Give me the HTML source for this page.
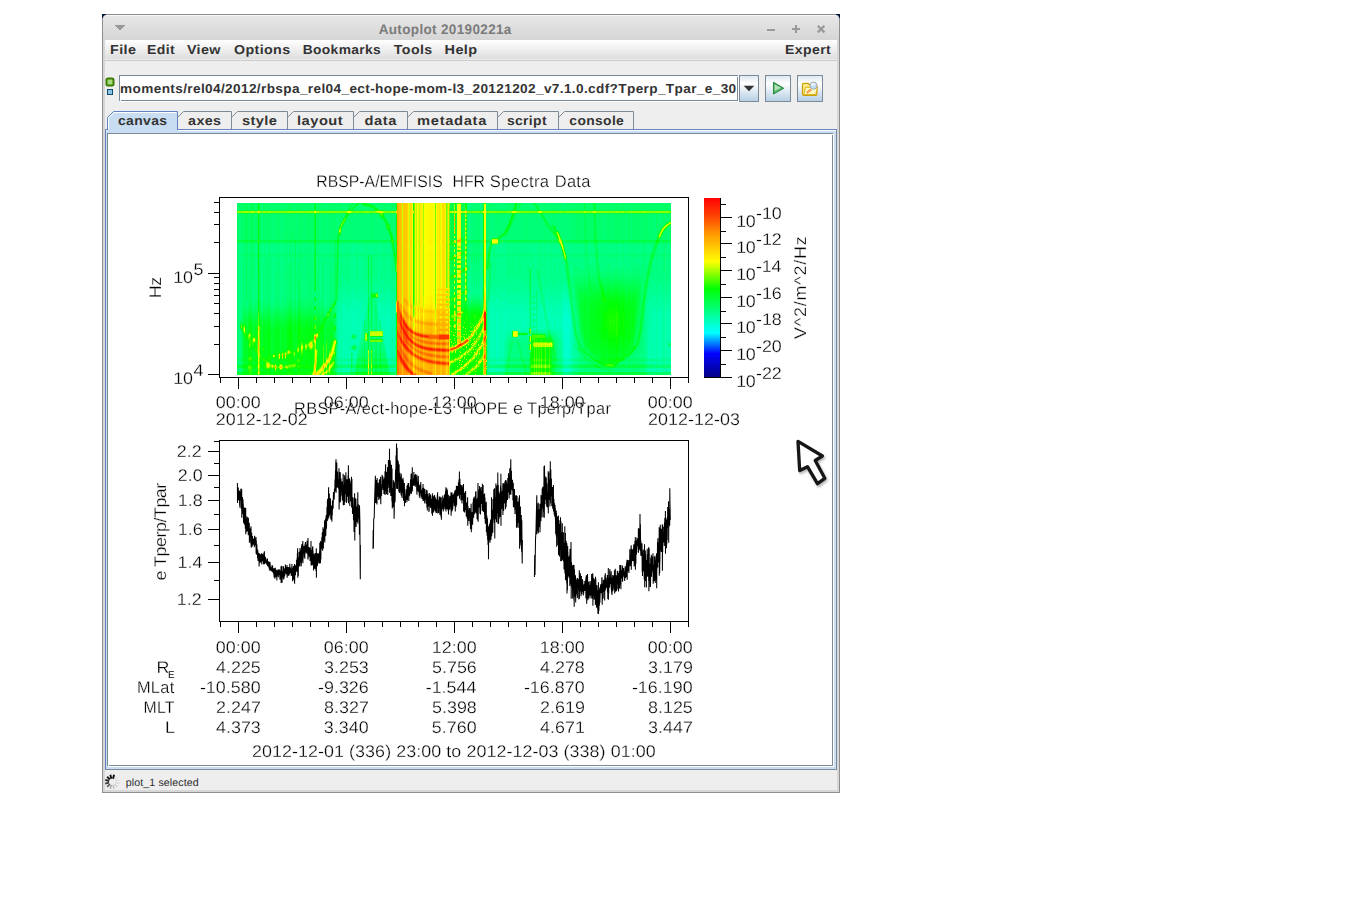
<!DOCTYPE html>
<html><head><meta charset="utf-8"><title>Autoplot</title>
<style>
html,body{margin:0;padding:0;background:#fff;}
body{width:1345px;height:916px;overflow:hidden;position:relative;}
svg{position:absolute;left:0;top:0;display:block;}
text{font-family:"Liberation Sans",sans-serif;white-space:pre;}
.p text{stroke:#fff;stroke-width:0.26px;}
</style></head>
<body>
<svg width="1345" height="916" viewBox="0 0 1345 916" shape-rendering="crispEdges" text-rendering="geometricPrecision">
<rect x="102" y="14" width="738" height="779" fill="#8e8e8e"/>
<defs><linearGradient id="gt" x1="0" y1="0" x2="0" y2="1"><stop offset="0" stop-color="#ffffff"/><stop offset="0.06" stop-color="#e7e7e7"/><stop offset="1" stop-color="#d5d5d5"/></linearGradient><linearGradient id="gm" x1="0" y1="0" x2="0" y2="1"><stop offset="0" stop-color="#ffffff"/><stop offset="1" stop-color="#dedede"/></linearGradient><linearGradient id="gb" x1="0" y1="0" x2="0" y2="1"><stop offset="0" stop-color="#dde8f3"/><stop offset="0.3" stop-color="#ffffff"/><stop offset="1" stop-color="#b8cfe5"/></linearGradient><linearGradient id="cb" x1="0" y1="1" x2="0" y2="0"><stop offset="0" stop-color="#000080"/><stop offset="0.136" stop-color="#0000ff"/><stop offset="0.251" stop-color="#00ffff"/><stop offset="0.497" stop-color="#00ff00"/><stop offset="0.646" stop-color="#ffff00"/><stop offset="0.81" stop-color="#ff9000"/><stop offset="0.9" stop-color="#ff4000"/><stop offset="1" stop-color="#ff0000"/></linearGradient></defs>
<rect x="103" y="15" width="736" height="777" fill="#d7d7d7"/>
<rect x="103" y="15" width="736" height="25" fill="url(#gt)"/>
<rect x="102" y="14" width="4" height="1" fill="#001a3a"/>
<rect x="102" y="15" width="2" height="1" fill="#001a3a"/>
<rect x="102" y="16" width="1" height="2" fill="#001a3a"/>
<rect x="104" y="15" width="1" height="1" fill="#9a9a9a"/>
<rect x="103" y="16" width="1" height="1" fill="#9a9a9a"/>
<rect x="105" y="15" width="1" height="1" fill="#cfcfcf"/>
<rect x="103" y="17" width="1" height="1" fill="#cfcfcf"/>
<rect x="836" y="14" width="4" height="1" fill="#001a3a"/>
<rect x="838" y="15" width="2" height="1" fill="#001a3a"/>
<rect x="839" y="16" width="1" height="2" fill="#001a3a"/>
<rect x="837" y="15" width="1" height="1" fill="#9a9a9a"/>
<rect x="838" y="16" width="1" height="1" fill="#9a9a9a"/>
<rect x="836" y="15" width="1" height="1" fill="#cfcfcf"/>
<rect x="838" y="17" width="1" height="1" fill="#cfcfcf"/>
<text transform="translate(378.66,34) scale(0.979,1)" font-size="13.8" font-weight="bold" fill="#7b7b7b" letter-spacing="0.351">Autoplot 20190221a</text>
<path d="M115 25h10l-5 6z" fill="#999"/>
<rect x="767" y="29" width="8" height="2" fill="#9a9a9a"/>
<rect x="792" y="28" width="8" height="2" fill="#9a9a9a"/>
<rect x="795" y="25" width="2" height="8" fill="#9a9a9a"/>
<path d="M817.8 25.8l6.6 6.6M824.4 25.8l-6.6 6.6" stroke="#9a9a9a" stroke-width="2.3" fill="none" shape-rendering="auto"/>
<rect x="105" y="40" width="732" height="19" fill="url(#gm)"/>
<rect x="105" y="59" width="732" height="1" fill="#ececec"/>
<rect x="105" y="60" width="732" height="1" fill="#cccccc"/>
<rect x="105" y="61" width="732" height="729" fill="#eeeeee"/>
<text transform="translate(110.07,54) scale(1.105,1)" font-size="13" font-weight="bold" fill="#333333" letter-spacing="0.349">File</text>
<text transform="translate(147.09,54) scale(1.078,1)" font-size="13" font-weight="bold" fill="#333333" letter-spacing="0.351">Edit</text>
<text transform="translate(186.93,54) scale(1.101,1)" font-size="13" font-weight="bold" fill="#333333" letter-spacing="0.349">View</text>
<text transform="translate(233.93,54) scale(1.097,1)" font-size="13" font-weight="bold" fill="#333333" letter-spacing="0.350">Options</text>
<text transform="translate(302.70,54) scale(1.061,1)" font-size="13" font-weight="bold" fill="#333333" letter-spacing="0.347">Bookmarks</text>
<text transform="translate(393.86,54) scale(1.089,1)" font-size="13" font-weight="bold" fill="#333333" letter-spacing="0.354">Tools</text>
<text transform="translate(444.56,54) scale(1.114,1)" font-size="13" font-weight="bold" fill="#333333" letter-spacing="0.349">Help</text>
<text transform="translate(785.09,54) scale(1.08,1)" font-size="13" font-weight="bold" fill="#333333" letter-spacing="0.350">Expert</text>
<rect x="106.5" y="78.5" width="7" height="7" rx="1.5" fill="#a4dc7c" stroke="#3c7c00" stroke-width="2" shape-rendering="auto"/>
<rect x="107" y="89" width="6" height="6" fill="#0b4c70"/>
<rect x="108" y="90" width="4" height="4" fill="#8cc4e4"/>
<rect x="119" y="75" width="620" height="27" fill="#ffffff"/>
<rect x="119" y="75" width="619" height="1" fill="#7a8a99"/>
<rect x="119" y="75" width="1" height="26" fill="#7a8a99"/>
<rect x="119" y="100" width="619" height="1" fill="#7a8a99"/>
<rect x="737" y="75" width="1" height="26" fill="#7a8a99"/>
<rect x="120" y="100" width="1" height="1" fill="#fff"/>
<rect x="737" y="76" width="1" height="1" fill="#fff"/>
<rect x="738" y="75" width="1" height="1" fill="#eee"/>
<rect x="119" y="101" width="1" height="1" fill="#eee"/>
<text transform="translate(120.12,93) scale(1.047,1)" font-size="13" font-weight="bold" fill="#333333" letter-spacing="0.350">moments/rel04/2012/rbspa_rel04_ect-hope-mom-l3_20121202_v7.1.0.cdf?Tperp_Tpar_e_30</text>
<rect x="739" y="75" width="20" height="27" fill="#7a8a99"/>
<rect x="740" y="76" width="18" height="25" fill="url(#gb)"/>
<rect x="765" y="75" width="26" height="27" fill="#7a8a99"/>
<rect x="766" y="76" width="24" height="25" fill="url(#gb)"/>
<rect x="797" y="75" width="26" height="27" fill="#7a8a99"/>
<rect x="798" y="76" width="24" height="25" fill="url(#gb)"/>
<path d="M743.7 85.7h10.6l-5.3 5.5z" fill="#333" shape-rendering="auto"/>
<path d="M773.6 82.6v11.2l9.8-5.6z" fill="#6cc07a" stroke="#238c40" stroke-width="1.2" stroke-linejoin="round" shape-rendering="auto"/>
<path d="M774.6 84.4v6l6.4-2.6z" fill="#bfe6c4" opacity="0.85" shape-rendering="auto"/>
<g shape-rendering="auto"><path d="M802.5 84.5a1.2 1.2 0 0 1 1.2-1.2h4.6l1.4 1.6h6.2a1 1 0 0 1 1 1v8.4a1 1 0 0 1-1 1h-12.2a1.2 1.2 0 0 1-1.2-1.2z" fill="#ffe98a" stroke="#c9a000" stroke-width="1.2"/><path d="M805.5 87.3h12l-1.8 7.3h-12z" fill="#fff6c0" stroke="#d4aa00" stroke-width="0.9"/><path d="M811 89.6l-4.4 3.4" stroke="#f07c1c" stroke-width="2.2" stroke-dasharray="1.3 0.5"/><circle cx="813.5" cy="85.6" r="3.6" fill="#bcdcfa" stroke="#a8a8a8" stroke-width="1"/><ellipse cx="813.2" cy="84.4" rx="2.2" ry="1.3" fill="#eaf4ff"/></g>
<rect x="105" y="129" width="732" height="641" fill="#c8ddf2"/>
<rect x="105" y="129" width="732" height="1" fill="#6382bf"/>
<rect x="105" y="129" width="1" height="641" fill="#6382bf"/>
<rect x="106" y="130" width="730" height="1" fill="#ffffff"/>
<rect x="106" y="769" width="731" height="1" fill="#7a8a99"/>
<rect x="836" y="130" width="1" height="640" fill="#7a8a99"/>
<rect x="108" y="134" width="724" height="631" fill="#ffffff"/>
<rect x="107" y="133" width="726" height="1" fill="#7a8a99"/>
<rect x="107" y="133" width="1" height="633" fill="#7a8a99"/>
<rect x="107" y="765" width="726" height="1" fill="#7a8a99"/>
<rect x="832" y="133" width="1" height="633" fill="#7a8a99"/>
<rect x="108" y="766" width="726" height="1" fill="#ffffff"/>
<rect x="833" y="134" width="1" height="633" fill="#ffffff"/>
<rect x="108" y="765" width="1" height="1" fill="#fff"/>
<rect x="832" y="134" width="1" height="1" fill="#fff"/>
<path d="M107.5 130V117.5l6-6H177.5V130z" fill="#c8ddf2" stroke="#6382bf" stroke-width="1" shape-rendering="auto"/>
<path d="M108.5 130V118l5.5-5.5H176.5" fill="none" stroke="#ffffff" stroke-width="1" shape-rendering="auto"/>
<rect x="108" y="129" width="69" height="2" fill="#c8ddf2"/>
<text transform="translate(118.01,125) scale(1.068,1)" font-size="13" font-weight="bold" fill="#333333" letter-spacing="0.351">canvas</text>
<path d="M177.5 117.5l6-6H231.5V129" fill="none" stroke="#7a8a99" stroke-width="1" shape-rendering="auto"/>
<text transform="translate(188.07,125) scale(1.101,1)" font-size="13" font-weight="bold" fill="#333333" letter-spacing="0.350">axes</text>
<path d="M231.5 117.5l6-6H287.5V129" fill="none" stroke="#7a8a99" stroke-width="1" shape-rendering="auto"/>
<text transform="translate(241.99,125) scale(1.126,1)" font-size="13" font-weight="bold" fill="#333333" letter-spacing="0.350">style</text>
<path d="M287.5 117.5l6-6H353.5V129" fill="none" stroke="#7a8a99" stroke-width="1" shape-rendering="auto"/>
<text transform="translate(296.97,125) scale(1.13,1)" font-size="13" font-weight="bold" fill="#333333" letter-spacing="0.440">layout</text>
<path d="M353.5 117.5l6-6H407.5V129" fill="none" stroke="#7a8a99" stroke-width="1" shape-rendering="auto"/>
<text transform="translate(364.41,125) scale(1.13,1)" font-size="13" font-weight="bold" fill="#333333" letter-spacing="0.517">data</text>
<path d="M407.5 117.5l6-6H497.5V129" fill="none" stroke="#7a8a99" stroke-width="1" shape-rendering="auto"/>
<text transform="translate(417.05,125) scale(1.13,1)" font-size="13" font-weight="bold" fill="#333333" letter-spacing="0.609">metadata</text>
<path d="M497.5 117.5l6-6H558.5V129" fill="none" stroke="#7a8a99" stroke-width="1" shape-rendering="auto"/>
<text transform="translate(506.91,125) scale(1.068,1)" font-size="13" font-weight="bold" fill="#333333" letter-spacing="0.348">script</text>
<path d="M558.5 117.5l6-6H633.5V129" fill="none" stroke="#7a8a99" stroke-width="1" shape-rendering="auto"/>
<text transform="translate(569.32,125) scale(1.064,1)" font-size="13" font-weight="bold" fill="#333333" letter-spacing="0.347">console</text>
<text x="125.71" y="785.7" font-size="10.6" fill="#2a2a2a" letter-spacing="0.124">plot_1 selected</text>
<g shape-rendering="auto" fill="none"><path d="M113.03 778.71L114.06 774.85" stroke="#000" stroke-opacity="0.95" stroke-width="1.9"/><path d="M111.37 778.71L110.34 774.85" stroke="#000" stroke-opacity="0.95" stroke-width="1.9"/><path d="M109.94 779.54L107.11 776.71" stroke="#000" stroke-opacity="0.9" stroke-width="1.9"/><path d="M109.11 780.97L105.25 779.94" stroke="#000" stroke-opacity="0.85" stroke-width="1.9"/><path d="M109.11 782.63L105.25 783.66" stroke="#000" stroke-opacity="0.75" stroke-width="1.9"/><path d="M109.94 784.06L107.11 786.89" stroke="#000" stroke-opacity="0.6" stroke-width="1.9"/><path d="M111.37 784.89L110.34 788.75" stroke="#000" stroke-opacity="0.35" stroke-width="1.2"/><path d="M113.03 784.89L114.06 788.75" stroke="#000" stroke-opacity="0.25" stroke-width="1.2"/><path d="M114.46 784.06L117.29 786.89" stroke="#000" stroke-opacity="0.15" stroke-width="1.2"/><path d="M115.29 782.63L119.15 783.66" stroke="#000" stroke-opacity="0.1" stroke-width="1.2"/><path d="M115.29 780.97L119.15 779.94" stroke="#000" stroke-opacity="0.08" stroke-width="1.2"/><path d="M114.46 779.54L117.29 776.71" stroke="#000" stroke-opacity="0.05" stroke-width="1.2"/></g>
<g class="p" opacity="0.99">
<rect x="219" y="197" width="470" height="1" fill="#000000"/>
<rect x="219" y="377" width="470" height="1" fill="#000000"/>
<rect x="219" y="197" width="1" height="181" fill="#000000"/>
<rect x="688" y="197" width="1" height="181" fill="#000000"/>
<rect x="219" y="440" width="470" height="1" fill="#000000"/>
<rect x="219" y="621" width="470" height="1" fill="#000000"/>
<rect x="219" y="440" width="1" height="182" fill="#000000"/>
<rect x="688" y="440" width="1" height="182" fill="#000000"/>
<rect x="220" y="378" width="1" height="5" fill="#000000"/>
<rect x="238" y="378" width="1" height="11" fill="#000000"/>
<rect x="256" y="378" width="1" height="5" fill="#000000"/>
<rect x="274" y="378" width="1" height="5" fill="#000000"/>
<rect x="292" y="378" width="1" height="5" fill="#000000"/>
<rect x="310" y="378" width="1" height="5" fill="#000000"/>
<rect x="328" y="378" width="1" height="5" fill="#000000"/>
<rect x="346" y="378" width="1" height="11" fill="#000000"/>
<rect x="364" y="378" width="1" height="5" fill="#000000"/>
<rect x="382" y="378" width="1" height="5" fill="#000000"/>
<rect x="400" y="378" width="1" height="5" fill="#000000"/>
<rect x="418" y="378" width="1" height="5" fill="#000000"/>
<rect x="436" y="378" width="1" height="5" fill="#000000"/>
<rect x="454" y="378" width="1" height="11" fill="#000000"/>
<rect x="472" y="378" width="1" height="5" fill="#000000"/>
<rect x="490" y="378" width="1" height="5" fill="#000000"/>
<rect x="508" y="378" width="1" height="5" fill="#000000"/>
<rect x="526" y="378" width="1" height="5" fill="#000000"/>
<rect x="544" y="378" width="1" height="5" fill="#000000"/>
<rect x="562" y="378" width="1" height="11" fill="#000000"/>
<rect x="580" y="378" width="1" height="5" fill="#000000"/>
<rect x="598" y="378" width="1" height="5" fill="#000000"/>
<rect x="616" y="378" width="1" height="5" fill="#000000"/>
<rect x="634" y="378" width="1" height="5" fill="#000000"/>
<rect x="652" y="378" width="1" height="5" fill="#000000"/>
<rect x="670" y="378" width="1" height="11" fill="#000000"/>
<rect x="688" y="378" width="1" height="5" fill="#000000"/>
<rect x="220" y="622" width="1" height="5" fill="#000000"/>
<rect x="238" y="622" width="1" height="11" fill="#000000"/>
<rect x="256" y="622" width="1" height="5" fill="#000000"/>
<rect x="274" y="622" width="1" height="5" fill="#000000"/>
<rect x="292" y="622" width="1" height="5" fill="#000000"/>
<rect x="310" y="622" width="1" height="5" fill="#000000"/>
<rect x="328" y="622" width="1" height="5" fill="#000000"/>
<rect x="346" y="622" width="1" height="11" fill="#000000"/>
<rect x="364" y="622" width="1" height="5" fill="#000000"/>
<rect x="382" y="622" width="1" height="5" fill="#000000"/>
<rect x="400" y="622" width="1" height="5" fill="#000000"/>
<rect x="418" y="622" width="1" height="5" fill="#000000"/>
<rect x="436" y="622" width="1" height="5" fill="#000000"/>
<rect x="454" y="622" width="1" height="11" fill="#000000"/>
<rect x="472" y="622" width="1" height="5" fill="#000000"/>
<rect x="490" y="622" width="1" height="5" fill="#000000"/>
<rect x="508" y="622" width="1" height="5" fill="#000000"/>
<rect x="526" y="622" width="1" height="5" fill="#000000"/>
<rect x="544" y="622" width="1" height="5" fill="#000000"/>
<rect x="562" y="622" width="1" height="11" fill="#000000"/>
<rect x="580" y="622" width="1" height="5" fill="#000000"/>
<rect x="598" y="622" width="1" height="5" fill="#000000"/>
<rect x="616" y="622" width="1" height="5" fill="#000000"/>
<rect x="634" y="622" width="1" height="5" fill="#000000"/>
<rect x="652" y="622" width="1" height="5" fill="#000000"/>
<rect x="670" y="622" width="1" height="11" fill="#000000"/>
<rect x="688" y="622" width="1" height="5" fill="#000000"/>
<rect x="214" y="202" width="5" height="1" fill="#000000"/>
<rect x="214" y="212" width="5" height="1" fill="#000000"/>
<rect x="214" y="224" width="5" height="1" fill="#000000"/>
<rect x="214" y="242" width="5" height="1" fill="#000000"/>
<rect x="208" y="273" width="11" height="1" fill="#000000"/>
<rect x="214" y="277" width="5" height="1" fill="#000000"/>
<rect x="214" y="283" width="5" height="1" fill="#000000"/>
<rect x="214" y="289" width="5" height="1" fill="#000000"/>
<rect x="214" y="295" width="5" height="1" fill="#000000"/>
<rect x="214" y="303" width="5" height="1" fill="#000000"/>
<rect x="214" y="313" width="5" height="1" fill="#000000"/>
<rect x="214" y="326" width="5" height="1" fill="#000000"/>
<rect x="214" y="344" width="5" height="1" fill="#000000"/>
<rect x="208" y="374" width="11" height="1" fill="#000000"/>
<text transform="translate(173.36,283) scale(1.065,1)" font-size="16.8" fill="#000000" letter-spacing="-0.368">10</text>
<text transform="translate(193.58,275) scale(1.065,1)" font-size="16.8" fill="#000000" letter-spacing="0.000">5</text>
<text transform="translate(173.36,384) scale(1.065,1)" font-size="16.8" fill="#000000" letter-spacing="-0.368">10</text>
<text transform="translate(193.54,376) scale(1.065,1)" font-size="16.8" fill="#000000" letter-spacing="0.000">4</text>
<text transform="translate(161.1,298.33) rotate(-90) scale(1.065,1)" font-size="16.8" fill="#000000" letter-spacing="-0.378">Hz</text>
<rect x="214" y="441" width="5" height="1" fill="#000000"/>
<rect x="208" y="451" width="11" height="1" fill="#000000"/>
<rect x="214" y="463" width="5" height="1" fill="#000000"/>
<rect x="208" y="475" width="11" height="1" fill="#000000"/>
<rect x="214" y="487" width="5" height="1" fill="#000000"/>
<rect x="208" y="500" width="11" height="1" fill="#000000"/>
<rect x="214" y="514" width="5" height="1" fill="#000000"/>
<rect x="208" y="529" width="11" height="1" fill="#000000"/>
<rect x="214" y="545" width="5" height="1" fill="#000000"/>
<rect x="208" y="562" width="11" height="1" fill="#000000"/>
<rect x="214" y="580" width="5" height="1" fill="#000000"/>
<rect x="208" y="599" width="11" height="1" fill="#000000"/>
<text transform="translate(176.87,457) scale(1.065,1)" font-size="16.8" fill="#000000" letter-spacing="0.029">2.2</text>
<text transform="translate(177.70,481) scale(1.065,1)" font-size="16.8" fill="#000000" letter-spacing="0.029">2.0</text>
<text transform="translate(177.78,506) scale(1.065,1)" font-size="16.8" fill="#000000" letter-spacing="0.029">1.8</text>
<text transform="translate(177.78,535) scale(1.065,1)" font-size="16.8" fill="#000000" letter-spacing="0.029">1.6</text>
<text transform="translate(177.52,568) scale(1.065,1)" font-size="16.8" fill="#000000" letter-spacing="0.029">1.4</text>
<text transform="translate(176.87,605) scale(1.065,1)" font-size="16.8" fill="#000000" letter-spacing="0.029">1.2</text>
<text transform="translate(166,580.52) rotate(-90) scale(1.065,1)" font-size="16.8" fill="#000000" letter-spacing="-0.441">e Tperp/Tpar</text>
<text transform="translate(316.34,187) scale(0.94,1)" font-size="16.8" fill="#000000" letter-spacing="0.013">RBSP-A/EMFISIS</text>
<text transform="translate(452.44,187) scale(0.94,1)" font-size="16.8" fill="#000000" letter-spacing="0.065">HFR</text>
<text transform="translate(489.85,187) scale(0.988,1)" font-size="16.8" fill="#000000" letter-spacing="0.351">Spectra</text>
<text transform="translate(554.68,187) scale(0.979,1)" font-size="16.8" fill="#000000" letter-spacing="0.351">Data</text>
<text transform="translate(294.09,414) scale(0.971,1)" font-size="16.8" fill="#000000" letter-spacing="0.350">RBSP-A/ect-hope-L3</text>
<text transform="translate(462.34,414) scale(0.94,1)" font-size="16.8" fill="#000000" letter-spacing="0.250">HOPE</text>
<text transform="translate(527.07,414) scale(0.973,1)" font-size="16.8" fill="#000000" letter-spacing="0.349">Tperp/Tpar</text>
<text transform="translate(513.08,414) scale(1.065,1)" font-size="16.8" fill="#000000" letter-spacing="0.000">e</text>
<text transform="translate(215.77,408) scale(1.065,1)" font-size="16.8" fill="#000000" letter-spacing="0.029">00:00</text>
<text transform="translate(323.77,408) scale(1.065,1)" font-size="16.8" fill="#000000" letter-spacing="0.029">06:00</text>
<text transform="translate(431.77,408) scale(1.065,1)" font-size="16.8" fill="#000000" letter-spacing="0.029">12:00</text>
<text transform="translate(539.77,408) scale(1.065,1)" font-size="16.8" fill="#000000" letter-spacing="0.029">18:00</text>
<text transform="translate(647.77,408) scale(1.065,1)" font-size="16.8" fill="#000000" letter-spacing="0.029">00:00</text>
<text transform="translate(215.81,424.5) scale(1.065,1)" font-size="16.8" fill="#000000" letter-spacing="0.061">2012-12-02</text>
<text transform="translate(647.91,424.5) scale(1.065,1)" font-size="16.8" fill="#000000" letter-spacing="0.051">2012-12-03</text>
<text transform="translate(215.87,652.6) scale(1.065,1)" font-size="16.8" fill="#000000" letter-spacing="0.029">00:00</text>
<text transform="translate(323.87,652.6) scale(1.065,1)" font-size="16.8" fill="#000000" letter-spacing="0.029">06:00</text>
<text transform="translate(431.87,652.6) scale(1.065,1)" font-size="16.8" fill="#000000" letter-spacing="0.029">12:00</text>
<text transform="translate(539.87,652.6) scale(1.065,1)" font-size="16.8" fill="#000000" letter-spacing="0.029">18:00</text>
<text transform="translate(647.87,652.6) scale(1.065,1)" font-size="16.8" fill="#000000" letter-spacing="0.029">00:00</text>
<text transform="translate(215.96,672.7) scale(1.065,1)" font-size="16.8" fill="#000000" letter-spacing="0.029">4.225</text>
<text transform="translate(323.96,672.7) scale(1.065,1)" font-size="16.8" fill="#000000" letter-spacing="0.029">3.253</text>
<text transform="translate(431.96,672.7) scale(1.065,1)" font-size="16.8" fill="#000000" letter-spacing="0.029">5.756</text>
<text transform="translate(539.96,672.7) scale(1.065,1)" font-size="16.8" fill="#000000" letter-spacing="0.029">4.278</text>
<text transform="translate(648.05,672.7) scale(1.065,1)" font-size="16.8" fill="#000000" letter-spacing="0.029">3.179</text>
<text transform="translate(199.89,692.8) scale(1.065,1)" font-size="16.8" fill="#000000" letter-spacing="0.029">-10.580</text>
<text transform="translate(317.94,692.8) scale(1.065,1)" font-size="16.8" fill="#000000" letter-spacing="0.029">-9.326</text>
<text transform="translate(425.67,692.8) scale(1.065,1)" font-size="16.8" fill="#000000" letter-spacing="0.029">-1.544</text>
<text transform="translate(523.89,692.8) scale(1.065,1)" font-size="16.8" fill="#000000" letter-spacing="0.029">-16.870</text>
<text transform="translate(631.89,692.8) scale(1.065,1)" font-size="16.8" fill="#000000" letter-spacing="0.029">-16.190</text>
<text transform="translate(216.05,712.9) scale(1.065,1)" font-size="16.8" fill="#000000" letter-spacing="0.029">2.247</text>
<text transform="translate(324.05,712.9) scale(1.065,1)" font-size="16.8" fill="#000000" letter-spacing="0.029">8.327</text>
<text transform="translate(431.96,712.9) scale(1.065,1)" font-size="16.8" fill="#000000" letter-spacing="0.029">5.398</text>
<text transform="translate(540.05,712.9) scale(1.065,1)" font-size="16.8" fill="#000000" letter-spacing="0.029">2.619</text>
<text transform="translate(647.96,712.9) scale(1.065,1)" font-size="16.8" fill="#000000" letter-spacing="0.029">8.125</text>
<text transform="translate(215.96,733) scale(1.065,1)" font-size="16.8" fill="#000000" letter-spacing="0.029">4.373</text>
<text transform="translate(323.87,733) scale(1.065,1)" font-size="16.8" fill="#000000" letter-spacing="0.029">3.340</text>
<text transform="translate(431.87,733) scale(1.065,1)" font-size="16.8" fill="#000000" letter-spacing="0.029">5.760</text>
<text transform="translate(540.05,733) scale(1.065,1)" font-size="16.8" fill="#000000" letter-spacing="0.029">4.671</text>
<text transform="translate(648.05,733) scale(1.065,1)" font-size="16.8" fill="#000000" letter-spacing="0.029">3.447</text>
<text transform="translate(156.47,672.7) scale(1.065,1)" font-size="16.8" fill="#000000" letter-spacing="0.000">R</text>
<text x="168.02" y="678" font-size="9.8" fill="#000000" letter-spacing="0.000" style="stroke:none">E</text>
<text transform="translate(136.89,692.8) scale(0.975,1)" font-size="16.8" fill="#000000" letter-spacing="0.352">MLat</text>
<text transform="translate(143.44,712.9) scale(0.941,1)" font-size="16.8" fill="#000000" letter-spacing="0.345">MLT</text>
<text transform="translate(164.97,733) scale(1.065,1)" font-size="16.8" fill="#000000" letter-spacing="0.000">L</text>
<text transform="translate(251.91,757) scale(1.065,1)" font-size="16.8" fill="#000000" letter-spacing="0.067">2012-12-01 (336) 23:00 to 2012-12-03 (338) 01:00</text>
<rect x="704" y="198" width="16" height="180" fill="url(#cb)"/>
<rect x="720" y="198" width="1" height="180" fill="#000000"/>
<rect x="704" y="377" width="28" height="1" fill="#000000"/>
<rect x="721" y="364" width="5" height="1" fill="#000000"/>
<text transform="translate(736.26,387) scale(1.065,1)" font-size="16.8" fill="#000000" letter-spacing="-0.368">10</text>
<text transform="translate(756.09,379) scale(1.065,1)" font-size="16.8" fill="#000000" letter-spacing="-0.067">-22</text>
<rect x="721" y="350" width="11" height="1" fill="#000000"/>
<rect x="721" y="337" width="5" height="1" fill="#000000"/>
<text transform="translate(736.26,360) scale(1.065,1)" font-size="16.8" fill="#000000" letter-spacing="-0.368">10</text>
<text transform="translate(756.09,352) scale(1.065,1)" font-size="16.8" fill="#000000" letter-spacing="-0.151">-20</text>
<rect x="721" y="323" width="11" height="1" fill="#000000"/>
<rect x="721" y="311" width="5" height="1" fill="#000000"/>
<text transform="translate(736.26,333) scale(1.065,1)" font-size="16.8" fill="#000000" letter-spacing="-0.368">10</text>
<text transform="translate(756.09,325) scale(1.065,1)" font-size="16.8" fill="#000000" letter-spacing="-0.109">-18</text>
<rect x="721" y="297" width="11" height="1" fill="#000000"/>
<rect x="721" y="284" width="5" height="1" fill="#000000"/>
<text transform="translate(736.26,307) scale(1.065,1)" font-size="16.8" fill="#000000" letter-spacing="-0.368">10</text>
<text transform="translate(756.09,299) scale(1.065,1)" font-size="16.8" fill="#000000" letter-spacing="-0.109">-16</text>
<rect x="721" y="270" width="11" height="1" fill="#000000"/>
<rect x="721" y="257" width="5" height="1" fill="#000000"/>
<text transform="translate(736.26,280) scale(1.065,1)" font-size="16.8" fill="#000000" letter-spacing="-0.368">10</text>
<text transform="translate(756.09,272) scale(1.065,1)" font-size="16.8" fill="#000000" letter-spacing="-0.235">-14</text>
<rect x="721" y="243" width="11" height="1" fill="#000000"/>
<rect x="721" y="231" width="5" height="1" fill="#000000"/>
<text transform="translate(736.26,253) scale(1.065,1)" font-size="16.8" fill="#000000" letter-spacing="-0.368">10</text>
<text transform="translate(756.09,245) scale(1.065,1)" font-size="16.8" fill="#000000" letter-spacing="-0.067">-12</text>
<rect x="721" y="217" width="11" height="1" fill="#000000"/>
<rect x="721" y="204" width="5" height="1" fill="#000000"/>
<text transform="translate(736.26,227) scale(1.065,1)" font-size="16.8" fill="#000000" letter-spacing="-0.368">10</text>
<text transform="translate(756.09,219) scale(1.065,1)" font-size="16.8" fill="#000000" letter-spacing="-0.151">-10</text>
<text transform="translate(806.3,338.89) rotate(-90) scale(1.065,1)" font-size="16.8" fill="#000000" letter-spacing="0.774">V^2/m^2/Hz</text>
</g>
<rect x="237" y="203" width="434" height="172" fill="#00ff77"/><g fill="none" stroke-width="1" transform="translate(0.5,0)"><path stroke="#00ffcc" d="M563 314v18m1-22v48m0 4v2m0 5v2m1-65v52m0 4v2m0 4v4m1-62v48m0 4v2m0 4v4m1-61v47m0 4v2m0 4v4m1-57v43m0 4v2m0 5v2m1-57v44m0 4v2m0 4v3"/><path stroke="#00ffbe" d="M352 315v17m0 9v2m3-31v21m0 7v3m0 9v6m5-44v20m3-24v10m19-4v12m4-11v30m2-32v43m104-49v49m0 4v2m0 4v4m4-61v47m0 4v2m0 4v4m1-58v44m0 4v2m0 5v2m7-52v7m1-13v17m17-17v15m3-14v14m9-11v2m0 3v3m15-11v11m3-9v11m5-8v7m1-9v10m3-11v12m1-10v10m1-26v12m0 18v26m0 4v2m0 4v4m1-71v9m0 48v1m0 2v1m0 6v1m0 2v1m1-73v7m0 52v4m1-60v8m0 48v1m0 2v1m1-59v8m0 47v1m0 2v1m1-57v10m0 43v1m0 2v1m0 6v1m0 2v1m1-65v7m0 44v1m0 2v1m0 9v1m1-55v41m0 4v2m0 4v4"/><path stroke="#00ffb0" d="M339 312v46m0 4v2m0 5v2m1-55v42m0 4v2m0 5v2m2-67v54m0 4v2m0 4v4m1-68v54m0 4v2m0 4v4m1-66v52m0 4v2m0 4v4m1-67v53m0 4v2m0 4v4m1-64v50m0 4v2m0 4v4m1-64v50m0 4v2m0 4v4m1-65v51m0 4v2m0 4v4m1-60v34m0 3v9m0 4v2m0 5v2m1-66v31m0 1v9m0 3v9m0 4v2m0 4v4m1-71v33m0 5v6m0 5v2m1-52v15m0 17v2m0 5v2m0 2v1m0 7v1m1-51v32m0 7v4m0 7v8m0 2v3m0 4v3m1-70v32m0 7v4m0 7v8m0 2v3m1-66v14m0 21v1m0 5v1m0 3v1m0 7v1m0 6v1m1-51v26m0 5v5m0 7v4m1-49v40m1-43v43m1-45v42m1-44v15m0 20v5m1-38v33m1-21v11m1-27v13m0 10v5m1-20v12m14-15v11m1-13v19m1-14v15m1-14v20m1-26v16m0 12v3m1-27v33m1-32v37m1-34v37m1-45v17m0 30v5m1-46v49m1-55v15m1-13v56m0 4v2m1-60v54m0 4v2m0 4v3m1-61v48m0 4v2m0 4v4m2-67v53m0 4v2m0 4v4m1-66v52m0 4v2m0 4v4m95-65v51m0 4v2m0 4v4m1-68v54m0 4v2m0 4v4m1-68v54m0 4v2m0 4v4m1-76v13m0 49v1m0 2v1m1-56v52m0 4v2m0 4v4m1-64v50m0 4v2m0 4v4m1-70v56m0 4v2m0 4v4m1-75v14m0 47v1m0 2v1m1-63v15m0 44v1m0 2v1m0 6v1m0 2v1m1-61v47m0 4v2m0 4v3m1-69v57m0 2v3m0 4v4m1-71v58m0 2v3m0 4v4m1-71v57m0 4v2m0 4v4m1-65v51m0 4v2m0 5v2m1-69v56m0 4v2m0 5v2m1-70v18m0 7v15m1-42v14m0 17v9m1-36v31m1-26v23m1-28v29m1-25v24m1-27v27m1-27v28m1-27v25m1-26v26m1-22v22m1-24v24m1-28v28m1-26v26m1-26v27m1-25v25m1-26v26m1-26v26m1-32v14m0 15v4m1-27v26m1-22v21m1-31v15m0 14v4m1-21v18m1-24v26m1-27v27m3-27v3m0 3v3m0 1v15m1-25v3m0 3v3m0 3v3m0 3v3m0 3v2m1-24v1m0 3v3m0 3v3m0 3v3m0 3v2m1-30v1m0 3v3m0 3v3m0 3v1m0 11v3m1-25v1m0 3v3m0 3v3m0 3v3m0 3v2m2-20v19m1-23v24m1-25v25m1-25v25m1-26v26m1-22v22m1-19v19m1-10v8m1-6v8m1-33v16m0 12v6m1-31v18m1-7v9m1-21v15m0 11v4m1-27v28m1-25v25m1-30v16m0 11v4m1-23v22m1-19v18m1-28v31m1-24v22m1-29v18m0 7v7m1-33v17m0 10v7m1-29v27m1-27v28m1-33v16m0 12v10m1-36v16m0 10v14m1-48v8m0 56v1m0 2v1m1-69v8m0 58v2m1-69v7m0 65v1m1-70v7m0 57v2m0 3v1m1-69v7m0 56v2m0 3v1m1-66v6m0 54v2m1-58v4m0 52v2m0 3v1m1-53v5m0 41v1m0 2v1m1-41v37m0 4v2m0 4v4m1-43v29m0 4v2m0 4v4m76-44v30m0 4v2m0 5v2m1-25v12m0 4v2m0 5v2m1-53v40m0 4v2m0 5v2m1-60v47m0 4v2m0 4v4m2-66v52m0 4v2m0 4v4m1-63v49m0 4v2m0 4v4m1-62v48m0 4v2m0 4v4m2-60v46m0 4v2m0 4v3m1-60v47m0 4v2m0 4v3m1-62v49m0 4v2m0 4v4m1-63v49m0 4v2m0 4v4m1-65v51m0 4v2m0 4v4m4-63v49m0 4v2m0 4v4m2-64v35m0 3v12m0 4v2m0 4v4m1-68v38m0 5v11m0 4v2m0 4v4m1-61v31m0 5v11m0 4v2m0 4v3m1-57v28m0 5v11m0 4v2m0 5v2"/><path stroke="#00ffa1" d="M337 309v18m1-25v56m0 4v2m0 4v4m1-74v14m0 46v1m0 2v1m0 6v1m0 2v1m1-72v16m0 42v1m0 2v1m0 6v1m0 2v1m1-70v57m0 2v3m0 4v4m1-80v12m0 54v1m0 2v1m1-70v12m0 54v1m0 2v1m1-68v12m0 52v1m0 2v1m1-69v12m0 53v1m0 2v1m1-67v13m0 50v1m0 2v1m1-67v13m0 50v1m0 2v1m1-67v12m0 51v1m0 2v1m1-64v14m0 34v3m0 9v1m0 2v1m0 6v1m0 2v1m1-79v12m0 31v1m0 9v3m0 9v1m0 2v1m1-72v11m0 33v1m0 3v1m0 6v1m0 3v1m1-62v12m0 44v1m0 5v1m0 1v1m1-63v11m0 32v1m0 5v1m0 19v2m0 10v1m1-82v11m0 32v1m0 5v1m0 19v2m1-75v12m0 36v1m0 3v1m0 5v1m0 5v1m0 10v3m1-69v13m0 26v2m0 1v2m0 5v1m0 5v1m0 4v3m1-64v12m0 40v8m1-63v12m0 43v3m1-59v11m0 42v3m1-59v12m0 40v3m1-52v11m0 33v4m1-39v14m0 11v6m1-45v12m0 28v5m1-37v12m0 12v3m1-25v21m1-23v18m1-17v9m9-5v2m1-2v12m1-20v3m0 5v4m0 11v5m1-30v12m0 19v4m1-30v12m1-11v12m0 20v4m1-42v12m0 37v1m1-46v12m0 33v4m1-48v12m0 37v3m1-49v12m0 37v4m1-60v11m0 52v3m1-61v12m0 49v3m1-70v12m0 58v1m0 2v3m1-73v11m0 56v4m1-70v12m0 54v1m0 2v1m0 9v1m1-75v13m0 48v1m0 2v1m1-59v55m0 4v2m0 4v4m1-79v12m0 53v1m0 2v1m1-68v12m0 52v1m0 2v1m1-58v54m0 4v2m0 4v4m85-91v14m8 7v57m0 2v3m0 4v4m1-71v6m0 51v1m0 2v1m1-68v10m0 54v1m0 2v1m1-70v12m0 54v1m0 2v1m1-78v12m0 63v2m0 3v1m1-71v12m0 52v1m0 2v1m1-67v13m0 50v1m0 2v1m1-71v11m0 56v4m1-77v12m0 62v2m0 3v1m1-78v12m0 60v2m1-63v13m0 47v1m0 2v1m0 9v1m1-82v12m0 57v2m1-71v11m0 58v2m1-72v12m0 57v4m1-68v13m0 51v1m0 2v1m0 6v1m0 2v1m1-82v12m0 56v1m0 2v1m0 6v1m0 2v1m1-83v12m0 40v17m0 4v2m0 4v4m1-85v12m0 40v19m0 4v2m1-72v11m0 31v6m1-45v13m0 23v5m1-44v11m0 29v5m1-42v12m0 24v4m1-42v11m0 27v5m1-43v11m0 28v4m1-43v12m0 25v1m1-39v12m1-9v13m1-14v12m1-16v12m1-10v12m1-12v12m1-10v12m0 25v1m1-39v12m0 26v1m1-39v12m0 26v1m1-45v12m0 33v1m0 3v2m1-45v12m0 26v1m1-36v13m0 21v2m1-45v12m0 33v1m0 3v2m1-41v14m0 18v3m1-39v12m0 26v2m1-41v12m0 27v5m1-2v2m2-46v6m0 2v6m0 3v3m0 3v1m0 15v2m1-41v5m0 3v3m0 29v1m1-37v1m0 3v3m0 3v2m0 24v1m1-43v7m0 3v2m1-11v1m0 4v1m0 3v3m0 2v3m0 1v3m0 3v3m0 3v3m0 3v3m0 2v1m1-43v2m1 7v13m0 19v2m1-37v12m0 24v1m1-37v11m0 25v1m1-34v8m0 25v1m1-31v4m0 26v2m1-27v3m0 22v1m1-40v2m0 16v2m0 19v2m1-17v5m0 8v3m1-38v15m0 11v3m0 8v1m1-46v12m0 16v3m0 7v2m0 6v1m1-44v12m0 18v3m1-24v14m0 9v4m1-37v12m0 30v1m1-39v11m0 28v1m1-38v12m0 25v2m1-44v12m0 31v2m1-37v12m0 22v2m1-34v13m0 18v3m1-43v12m0 31v3m1-39v12m0 22v4m1-45v12m0 32v4m1-48v11m0 34v4m1-45v12m0 27v6m1-45v12m0 28v7m1-51v11m0 38v20m0 4v2m0 4v4m1-80v10m0 40v16m0 4v2m0 4v4m1-88v10m0 65v2m0 3v1m1-80v8m0 71v1m1-81v8m1-4v7m1-4v5m1-1v4m0 65v1m1-65v3m1 5v4m0 47v2m0 3v1m1-48v4m0 37v1m0 2v1m1-38v5m0 29v1m0 2v1m1-28v11m0 1v13m0 2v3m0 4v4m1-32v4m0 5v9m0 4v2m0 5v2m1-21v8m0 4v2m0 5v2m1-20v7m0 4v2m0 5v2m70-9v2m0 5v2m1-66v53m0 4v2m0 4v4m1-73v29m0 30v1m0 2v1m0 6v1m0 2v1m1-72v46m0 12v1m0 2v1m0 6v1m0 2v1m1-72v18m0 40v1m0 2v1m0 6v1m0 2v1m1-75v14m0 47v1m0 2v1m1-56v52m0 4v2m0 4v4m1-78v12m0 52v1m0 2v1m1-66v13m0 49v1m0 2v1m1-65v13m0 48v1m0 2v1m1-58v54m0 4v2m0 4v4m1-74v14m0 46v1m0 2v1m0 9v1m1-74v13m0 47v1m0 2v1m0 9v1m1-76v13m0 49v1m0 2v1m1-66v13m0 49v1m0 2v1m1-68v13m0 51v1m0 2v1m1-60v56m0 4v2m0 4v4m1-71v58m0 2v3m0 4v4m1-70v56m0 4v2m0 4v4m1-75v12m0 49v1m0 2v1m1-54v50m0 4v2m0 4v4m1-77v13m0 35v3m0 12v1m0 2v1m1-70v12m0 38v1m0 3v1m0 11v1m0 2v1m1-64v13m0 31v1m0 3v1m0 11v1m0 2v1m0 9v1m1-73v15m0 28v1m0 3v1m0 11v1m0 2v1m0 6v1m0 2v1"/><path stroke="#00ff93" d="M325 246v1m0 21v36m12-2v7m0 18v13m0 6v13m0 2v3m0 4v4m1-75v5m0 56v1m0 2v1m1-77v13m0 61v2m0 3v1m1-77v12m0 59v2m1-71v12m0 57v2m1-115v5m0 25v16m0 67v2m0 3v1m1-87v14m0 67v2m0 3v1m1-85v14m0 65v2m0 3v1m1-86v14m0 66v2m0 3v1m1-82v12m0 64v2m0 3v1m1-82v12m0 64v2m0 3v1m1-84v14m0 64v2m0 3v1m1-79v12m0 61v2m0 3v1m1-86v14m0 66v2m0 3v1m1-120v9m0 3v33m0 45v3m0 8v1m0 1v1m0 3v1m1-109v10m0 3v31m0 46v1m0 3v1m1-94v9m0 3v33m0 54v1m0 5v1m0 13v1m1-120v9m0 3v33m0 54v1m0 5v1m0 13v1m0 3v3m1-127v10m0 3v29m0 73v2m1-78v12m0 41v1m0 8v1m0 3v1m1-70v14m0 60v2m1-80v15m0 58v3m1-107v9m0 3v33m0 56v2m1-104v10m0 3v30m0 55v3m1-100v9m0 3v33m0 48v3m1-54v12m0 31v4m1-91v11m0 3v28m0 45v8m1-59v14m1-11v13m0 21v5m1-42v14m0 18v7m1-38v14m0 9v7m2-65v9m0 29v12m1-13v10m2-47v9m1-9v9m0 3v36m0 21v16m1-51v14m1-10v10m0 5v2m1-15v8m0 7v1m1-19v11m0 17v7m1-71v8m0 3v33m0 3v5m0 20v12m1-85v9m0 3v31m0 35v7m1-51v14m0 27v1m1-41v14m0 36v1m1-86v9m0 3v31m0 50v1m1-61v14m0 49v3m1-64v13m0 52v3m1-65v13m0 53v2m1-106v9m0 3v32m0 66v2m1-76v13m1-49v9m0 3v31m0 71v2m1-87v17m0 73v1m0 3v3m1-94v15m0 67v2m0 3v1m1-80v12m0 62v2m0 3v1m1-73v11m0 55v1m0 2v1m1-83v14m0 66v2m0 3v1m1-85v14m0 65v2m0 3v1m1-77v16m0 54v4m74-92v27m1-23v22m1-12v10m1-8v8m3-22v25m2-17v15m1-9v8m2-33v20m0 14v3m1-26v25m1-18v13m5 16v50m0 4v2m0 4v4m1-13v2m0 3v1m1-65v1m0 58v2m0 3v1m1-77v6m0 65v2m0 3v1m1-86v13m0 67v2m0 3v1m1-118v7m0 3v27m1-4v14m0 65v2m0 3v1m1-82v12m0 64v2m0 3v1m1-91v17m0 73v1m1-120v9m0 3v28m1-40v9m0 3v30m0 77v1m1-79v12m0 61v2m0 3v1m1-119v8m0 3v33m0 74v1m1-119v8m0 3v33m0 74v1m1-120v9m0 3v32m0 75v1m1-84v13m0 65v2m0 3v1m1-119v8m0 3v33m0 69v2m0 3v1m1-120v9m0 3v32m0 69v4m1-118v10m0 3v30m0 71v1m0 2v1m0 6v3m1-94v15m0 48v18m0 4v2m1-81v12m0 41v7m1-67v16m0 45v6m1-61v13m0 40v5m1-61v14m0 43v4m1-62v15m0 43v3m1-60v14m0 45v1m1-61v14m0 38v1m0 7v1m1-56v12m0 43v1m1-59v14m0 36v1m0 7v2m1-94v8m0 3v33m0 40v1m0 7v1m1-61v14m0 38v1m0 7v1m1-62v15m0 39v1m0 5v2m1-59v14m0 38v1m0 3v4m1-61v14m0 39v1m0 2v5m1-60v13m0 39v1m0 3v4m1-96v10m0 3v30m0 48v1m0 2v6m1-64v13m0 39v1m0 3v4m1-56v12m0 36v1m0 3v3m1-95v10m0 3v30m0 48v1m0 2v5m1-58v12m0 35v1m0 3v2m1-59v14m0 42v5m1-63v15m0 44v4m1-96v10m0 3v11m0 46v14m0 14v2m0 6v2m1-18v1m1-90v9m0 3v33m0 6v2m1-26v18m0 5v1m0 12v2m0 3v3m0 3v3m0 3v3m1-47v13m1-49v9m0 3v31m0 7v1m0 11v3m0 3v3m0 3v3m0 3v3m1-83v9m0 3v13m0 1v18m0 1v4m0 1v3m0 3v2m0 28v1m1-87v9m0 3v12m0 6v13m1-7v16m0 34v1m1-46v8m0 37v1m1-43v5m0 37v1m1-38v3m0 34v1m1-57v8m0 15v2m0 32v1m1-55v12m0 12v3m0 26v2m1-87v8m0 3v34m0 2v6m0 7v3m0 23v1m1-46v16m0 10v2m0 16v1m1-53v14m0 15v3m0 5v3m0 12v2m1-89v10m0 3v28m0 31v7m0 9v1m1-88v9m0 3v31m0 33v11m1-47v12m0 27v3m1-83v10m0 3v30m0 43v1m1-58v18m0 40v1m1-52v13m0 39v1m1-88v9m0 3v31m0 45v1m1-51v13m0 36v2m1-48v12m0 34v2m1-89v9m0 3v32m0 46v2m1-54v13m0 38v3m1-92v9m0 3v32m0 48v4m1-95v8m0 3v32m0 49v20m0 4v2m0 5v2m1-92v14m0 45v20m0 4v2m0 5v2m1-92v14m0 47v18m0 4v2m0 4v4m1-114v31m0 69v1m0 2v1m1-81v11m0 66v4m1-100v22m1-12v13m0 82v1m1-92v8m0 81v3m0 4v1m1-90v5m0 77v3m1-81v4m0 74v3m1-75v2m0 72v1m1-123v9m0 3v4m0 37v2m0 67v1m1-62v2m1 6v3m0 42v2m0 3v1m1-44v3m0 35v2m0 3v1m1-34v3m0 11v1m0 13v2m1-24v3m0 7v2m0 9v1m0 2v1m0 6v1m0 2v1m1-32v5m0 4v1m0 8v1m0 2v1m0 6v1m0 2v1m1-29v3m0 4v1m0 7v1m0 2v1m0 6v1m0 2v1m1-21v7m0 4v2m0 4v4m1-19v5m0 4v2m0 4v4m1-3v2m46-126v9m0 3v8m20 46v47m0 4v2m0 4v4m1-69v56m0 2v1m0 6v1m0 2v1m1-77v10m0 53v1m0 2v1m1-73v10m0 60v2m1-73v12m0 59v2m1-73v12m0 59v2m1-76v12m0 62v2m0 3v1m1-71v12m0 52v1m0 2v1m1-82v14m0 65v2m0 3v1m1-81v12m0 63v2m0 3v1m1-81v13m0 62v2m0 3v1m1-73v12m0 54v1m0 2v1m1-76v12m0 61v2m0 3v1m1-79v12m0 61v2m0 3v1m1-82v13m0 63v2m0 3v1m1-81v12m0 63v2m0 3v1m1-84v13m0 65v2m0 3v1m1-74v11m0 56v4m1-73v12m0 58v2m1-70v11m0 56v4m1-78v13m0 62v2m0 3v1m1-69v12m0 50v1m0 2v1m1-79v12m0 64v2m0 3v1m1-88v15m0 67v2m0 3v1m1-79v12m0 61v2m0 3v1m1-78v12m0 60v2"/><path stroke="#00ff85" d="M239 243v11m0 3v64m0 5v32m0 4v2m0 4v4m1-129v11m0 3v63m0 11v27m0 4v2m0 5v2m1-126v9m0 3v48m3-61v10m0 3v45m3-2v4m6-23v21m1-58v10m0 3v45m2-58v10m0 3v43m4-56v10m0 3v6m1-20v11m0 3v44m1-58v11m0 3v45m1-58v10m0 3v8m2-22v11m0 3v44m1-56v9m1-9v9m0 3v1m1-12v2m2-3v8m1-10v11m0 3v47m1-61v11m0 3v48m1-62v11m0 3v48m1-62v11m0 3v42m1-55v10m0 3v5m1-18v10m0 3v15m1-27v9m0 3v2m2-14v6m1-8v11m0 3v45m1-59v11m0 3v46m1-59v10m0 3v9m1-23v11m0 3v43m1-55v5m1-6v10m0 3v12m0 14v18m3-57v10m0 3v5m3-18v10m0 3v4m1-15v2m2-5v11m0 3v44m2-57v10m0 3v13m0 21v8m1-55v10m0 3v5m3-17v6m2-8v11m0 3v42m2-56v11m0 3v42m5-54v9m0 3v1m3-13v9m1-8v2m2 43v6m2-53v10m0 3v18m3-32v11m0 3v44m1-58v11m0 3v43m1-55v9m0 3v5m1-17v9m1-11v11m0 3v48m1-62v3m0 1v8m0 1v12m0 36v6m1-66v10m0 3v47m1-61v12m0 1v49m1-62v11m0 3v48m1-61v10m0 3v44m2-56v9m0 3v13m1-27v11m0 3v44m4 1v35m0 20v1m0 11v2m1-31v1m0 3v2m0 13v2m1-74v10m0 62v2m0 3v1m1-120v9m0 3v28m1-41v10m0 3v31m0 76v1m1-120v9m0 3v33m0 74v1m1-122v3m0 5v4m0 1v20m1-33v12m0 1v22m1-35v12m0 1v24m1-37v12m0 1v23m1-36v11m0 3v26m1-40v11m0 3v26m1-40v11m0 3v24m1-37v10m0 3v29m1-43v12m0 1v23m1-36v2m0 9v1m0 1v1m0 90v1m1-105v1m0 10v1m0 1v1m0 88v1m0 3v1m0 3v5m0 4v2m0 4v4m1-129v2m0 9v1m0 1v1m0 77v1m0 3v1m1-96v2m0 9v1m0 1v1m0 77v1m0 3v1m0 32v1m1-129v1m0 10v1m0 1v1m0 78v1m0 1v1m0 7v1m0 3v1m0 18v1m1-126v11m0 3v26m0 63v3m0 9v1m0 3v1m1-120v12m0 1v24m0 76v2m1-115v12m0 1v20m0 76v3m1-112v2m0 9v1m0 1v1m0 91v3m1-108v1m0 10v1m0 1v1m0 88v4m1-106v2m0 9v1m0 1v1m0 84v5m1-102v10m0 3v30m0 47v5m1-125v26m0 14v3m0 81v9m1-104v12m0 1v23m0 41v1m1-78v11m0 3v25m0 39v12m1-90v12m0 1v23m0 39v15m0 9v1m1-100v12m0 2v23m0 30v23m1-90v11m1-11v2m0 9v1m0 2v26m0 12v7m0 4v25m0 6v2m1-96v11m0 3v25m0 10v5m0 8v26m0 6v2m1-95v10m1-11v2m0 9v1m0 23v12m1-47v2m0 9v1m0 1v1m0 41v16m0 16v1m0 6v2m0 4v3m1-103v12m0 1v23m0 19v33m0 6v2m1-96v11m0 3v26m0 17v1m1-57v10m0 3v28m0 16v4m1-62v11m0 3v25m0 35v14m0 6v2m1-96v3m0 8v1m0 1v1m0 73v1m0 6v2m0 4v2m1-102v2m0 9v1m0 1v1m0 73v1m0 6v2m0 4v2m1-102v12m0 1v23m0 42v2m1-80v11m0 3v23m0 57v2m1-96v2m0 9v1m0 1v1m0 86v3m1-103v12m0 1v22m0 66v3m1-104v12m0 1v24m0 68v2m1-107v11m0 3v26m0 68v3m1-111v2m0 9v1m0 1v1m0 100v1m1-115v11m0 3v24m0 77v1m0 3v1m1-120v2m0 9v1m0 1v1m1-14v12m0 1v18m0 97v1m1-129v12m0 1v21m1-29v6m0 3v28m1-8v15m0 67v2m0 3v1m1-104v18m1-8v9m1-8v16m0 76v1m73-94v18m0 3v5m1-94v7m0 4v26m0 3v11m0 3v13m0 27v3m1-97v7m0 4v26m0 3v11m0 3v17m0 22v3m1-36v21m0 10v4m1-34v22m0 8v4m1-23v21m1-11v9m1-91v7m0 4v26m0 3v11m0 3v15m0 25v2m2-39v20m0 15v3m1-33v21m0 8v4m1-15v11m1-91v7m0 4v26m0 3v12m0 1v5m0 37v3m1-98v7m0 4v26m0 3v11m0 3v15m0 25v2m1-40v20m0 13v6m5-54v6m0 21v24m0 6v7m0 50v4m0 2v1m0 2v1m1-125v4m0 23v7m0 24v1m1-6v4m1-43v4m0 21v6m1-38v5m0 1v6m0 4v13m1-65v24m0 8v1m0 7v3m0 108v3m1-123v9m0 3v23m1-35v9m0 3v26m1-38v10m0 1v18m1-20v1m0 1v1m0 110v1m1-114v1m0 1v1m0 110v1m1-123v9m0 3v29m1-43v3m0 8v1m0 1v1m1-14v3m0 8v1m0 1v1m1-14v2m0 9v1m0 1v1m1-14v11m0 3v24m1-38v3m0 8v1m0 1v1m1-14v2m0 9v1m0 1v1m0 107v1m1-122v1m0 10v1m0 1v1m0 102v2m0 3v1m0 6v1m1-129v12m0 1v21m0 81v1m0 2v1m1-119v11m0 3v26m0 60v15m0 12v2m1-129v12m0 1v20m0 67v11m0 14v4m1-129v11m0 3v25m0 58v8m0 14v2m0 4v4m1-129v12m0 1v23m0 61v4m0 13v1m0 4v2m0 4v4m1-129v12m0 1v22m0 61v1m0 12v6m0 4v2m0 4v4m1-129v12m0 1v23m0 58v1m0 1v1m0 7v11m0 4v2m0 4v4m1-129v12m0 1v22m0 61v1m0 1v17m0 4v2m0 4v4m1-129v11m0 3v26m0 47v1m0 8v19m0 4v2m0 5v2m1-128v11m0 3v23m0 60v18m0 4v2m0 4v4m1-129v3m0 8v1m0 1v1m0 82v19m0 4v2m0 4v4m1-129v12m0 1v22m0 61v1m0 6v12m0 4v2m0 4v4m1-129v12m0 1v21m0 59v1m0 2v1m0 9v9m0 4v2m0 4v4m1-129v11m0 3v23m0 55v1m0 4v3m0 11v4m0 4v2m0 4v4m1-129v12m0 1v23m0 61v6m0 11v1m0 4v2m0 4v4m1-129v11m0 3v23m0 55v1m0 4v10m0 12v2m0 4v4m1-129v1m0 10v1m0 1v1m0 87v11m0 13v4m1-129v12m0 1v24m0 55v1m0 4v18m0 11v3m1-129v11m0 3v27m0 51v1m0 3v19m1-115v1m0 10v1m0 1v1m0 86v15m0 4v2m1-120v10m0 3v28m0 50v1m0 2v20m0 4v2m1-121v12m0 1v23m0 61v18m0 4v2m0 4v3m1-128v12m0 1v21m0 63v18m0 4v2m0 4v4m1-129v1m0 10v1m0 1v1m0 42v15m1-71v11m0 3v11m0 67v1m1-93v2m0 9v1m0 1v1m0 74v1m1-89v12m0 1v16m0 24v2m0 3v3m0 3v1m1-65v11m0 3v24m0 14v1m1-53v2m0 9v1m0 1v1m0 39v2m0 3v3m1-61v2m0 9v1m0 1v1m0 13v1m0 61v1m1-90v2m0 9v1m0 1v1m0 12v1m0 1v4m0 15v1m0 19v19m1-86v12m0 1v13m0 8v4m0 51v1m1-90v11m0 3v12m0 14v3m0 46v1m1-90v12m0 1v18m0 13v2m0 43v1m1-90v11m0 3v23m0 11v3m0 38v1m1-90v12m0 1v19m0 8v5m0 7v3m0 35v1m1-91v12m0 1v22m0 12v4m0 6v2m0 31v1m1-91v3m0 8v1m0 1v1m0 42v7m0 27v1m1-90v10m0 3v30m0 16v4m0 3v3m0 19v1m1-90v12m0 1v23m0 32v5m0 17v1m1-95v1m0 3v1m0 10v1m0 1v1m0 76v1m1-91v2m0 9v1m0 1v1m0 75v2m1-90v10m0 3v28m0 42v2m1-86v1m0 10v1m0 1v1m0 74v1m1-89v12m0 1v17m0 59v1m1-90v12m0 1v24m0 53v1m1-91v2m0 9v1m0 1v1m0 77v2m1-93v11m0 3v26m0 51v2m1-92v10m0 3v29m0 48v3m1-94v2m0 9v1m0 1v1m0 80v3m1-97v11m0 3v26m0 54v4m1-98v2m0 9v1m0 1v1m0 84v17m0 4v2m0 4v4m1-128v2m0 8v1m0 1v1m0 101v1m0 2v1m0 6v1m0 2v1m1-126v9m0 1v23m0 79v1m0 2v1m0 6v1m0 2v1m1-124v7m0 1v23m0 79v1m0 2v1m1-110v3m0 1v2m0 101v2m0 3v1m1-108v24m0 83v1m1-106v3m0 103v3m1-125v2m0 18v9m0 93v2m0 5v3m1-132v7m0 20v6m0 97v2m1-132v9m0 27v4m0 89v3m1-132v11m0 30v3m0 85v3m1-132v11m0 3v4m0 29v3m0 72v2m0 5v3m1-132v2m0 9v1m0 1v1m0 4v8m0 26v3m0 67v2m0 5v3m1-132v11m0 3v16m0 30v3m0 61v1m1-124v10m0 3v19m0 36v2m1-71v12m0 1v41m0 21v3m1-78v11m0 3v16m0 16v16m0 23v3m0 33v1m1-120v9m0 3v9m0 36v9m0 24v2m0 7v1m0 1v1m0 12v2m0 3v1m1-119v8m0 3v8m0 43v11m0 20v1m0 5v1m0 2v1m0 10v2m1-116v9m0 3v10m0 47v13m0 15v1m0 3v1m0 2v1m0 9v2m1-116v9m0 3v9m0 60v5m0 14v2m0 3v1m0 7v1m0 2v1m1-117v9m0 3v10m0 85v1m0 5v1m0 2v1m1-117v9m0 3v11m0 85v6m0 2v3m0 4v1m0 2v1m1-128v10m0 3v11m0 87v3m0 4v2m0 4v4m1-129v11m0 3v14m0 85v2m0 4v2m0 4v4m1-128v10m0 3v12m0 93v2m0 4v4m1-128v10m0 3v12m0 93v2m0 4v4m2-115v10m0 95v2m0 5v2m1-9v2m0 5v2m1-9v2m0 4v3m1-127v10m0 109v1m0 5v2m1-127v10m0 3v9m0 102v3m1-126v9m0 3v8m0 104v2m1-127v10m0 3v11m0 101v2m1-125v8m0 3v6m1-19v10m0 3v13m0 98v4m1-115v9m0 103v2m2-3v4m1-2v1m1-126v4m1-5v10m0 3v6m0 107v1m1-127v10m0 3v11m1-25v12m0 1v16m0 98v2m2-129v11m0 3v12m1-26v11m0 3v13m0 101v1m1-127v9m0 3v5m1-19v12m0 1v15m0 100v1m2-127v9m0 3v7m1-19v9m0 3v6m1-19v10m0 3v10m1-24v11m0 3v13m1-27v12m0 1v15m2-27v10m0 3v11m1-24v10m0 3v11m0 101v2m2-127v10m0 3v11m0 101v2m1-127v10m0 3v10m1-23v10m0 3v10m0 103v1m1-127v10m0 3v10m1-24v11m0 3v13m0 99v3m1-128v10m0 3v11m0 101v2m2-125v8m0 3v3m1-17v2m0 9v1m0 1v1m0 8v9m0 88v2m0 4v4m1-129v12m0 1v16m0 90v2m0 4v4m1-127v9m0 3v9m1-22v10m0 3v11m0 101v2m1-127v10m0 3v11m0 95v1m0 5v2m2-128v12m0 1v16m0 84v2m0 4v2m0 4v4m2-127v9m0 3v10m0 102v2m1-126v9m0 3v8m1-20v9m0 3v10m0 102v2m1-125v8m0 3v5m1-18v10m0 3v12m0 84v5m0 4v2m0 4v3m1-127v10m0 3v12m0 80v9m0 4v2m0 4v4m1-126v8m0 3v7m1-19v9m0 3v10m0 87v4m0 4v2m0 5v2m1-128v11m0 3v15m0 67v19m0 4v2m0 4v4m1-20v6m0 4v2m0 5v2m1-41v28m0 4v2m0 4v4m1-54v40m0 4v2m0 4v4m1-128v10m0 3v13m0 35v6m0 47v1m0 2v1m1-117v9m0 3v10m0 31v5m0 56v2m1-117v10m0 3v7m0 27v4m0 64v2m0 3v1m1-122v11m0 3v4m0 23v5m0 75v1m1-121v10m0 27v7m0 76v1m1-120v8m0 24v11m0 76v1m1-121v7m0 20v14m1-5v14m0 65v2m0 3v1m1-122v2m0 15v20m1-22v26m1-27v27m1-8v16m0 67v2m0 3v1m1-116v5m0 3v29m1-40v8m0 3v29m1-42v10m0 3v26m1-39v10m0 3v27m1-41v11m0 3v24m1-7v17m0 73v1m1-120v9m0 3v32m0 75v1m1-92v18m0 73v1m1-121v10m0 3v27m1-1v13m0 63v2m0 3v1m1-122v11m0 3v26m1-40v12m0 1v21m0 66v1m0 1v1m1-102v10m0 3v29m1-41v9m0 3v30m0 56v1m0 1v1m0 18v1"/><path stroke="#00ff68" d="M237 203v7m0 4v26m0 15v1m0 60v43m0 2v3m0 4v4m1-169v7m0 4v26m0 15v1m0 65v3m0 34v1m0 2v1m0 6v1m0 2v1m1-169v5m0 114v2m0 35v2m0 3v1m1-162v7m0 119v1m0 29v2m0 3v1m1-162v7m0 4v26m0 15v1m0 63v2m0 11v26m0 4v2m0 4v4m1-169v7m0 4v26m0 15v1m0 52v8m1-108v2m0 4v26m0 14v3m0 48v7m1-109v7m0 4v26m0 15v1m0 52v5m1-70v12m0 1v45m0 3v5m1-9v1m0 6v4m1-108v7m0 4v26m0 15v1m0 53v4m1-110v7m0 4v26m0 15v2m0 45v5m1-104v7m0 4v26m0 15v1m0 42v7m1-96v1m0 4v26m0 14v3m0 29v18m1-61v1m0 10v1m0 1v1m0 15v8m0 23v5m1-28v1m0 23v5m1-106v1m0 10v26m0 14v1m0 1v1m0 50v5m1-109v7m0 45v1m0 52v4m1-109v7m0 4v26m0 15v1m0 47v5m1-105v7m0 4v26m0 15v1m0 50v5m1-108v1m0 10v26m0 14v1m0 1v1m0 46v5m3-105v7m0 4v26m0 15v1m0 47v5m1-105v7m0 45v1m0 51v5m1-109v5m0 100v4m1-109v7m0 4v26m0 15v1m0 48v5m1-100v1m0 4v26m0 14v3m0 43v6m1-103v7m0 45v1m0 51v4m1-108v7m0 4v26m0 15v1m0 48v5m1-106v7m0 4v26m0 15v1m0 44v6m1-103v7m0 4v26m0 15v1m0 42v7m1-102v7m0 4v26m0 14v3m0 44v6m1-104v7m0 4v26m0 15v1m0 49v5m1-107v5m0 101v4m1-110v6m0 101v4m1-4v4m1-111v7m0 45v1m0 50v4m1-107v7m0 4v26m0 15v1m0 47v5m1-105v7m0 45v1m0 49v4m1-106v7m0 4v26m0 15v1m0 49v5m1-107v7m0 4v26m0 15v1m0 46v5m1-104v7m0 4v26m0 15v1m0 48v5m1-106v7m0 45v1m0 52v4m1-4v5m1-110v7m0 23v6m0 16v1m0 50v4m1-107v7m0 45v1m0 50v5m1-108v7m0 4v26m0 15v1m0 49v4m1-106v7m0 20v10m0 15v1m0 51v4m1-108v7m0 4v26m0 15v1m0 47v5m1-105v7m0 4v26m0 15v1m0 38v11m1-102v7m0 25v4m0 16v1m0 43v7m1-92v26m0 14v1m0 1v1m0 11v33m1-87v26m0 3v1m0 10v1m0 1v1m0 6v35m1-95v7m0 21v9m0 15v1m0 44v6m1-103v7m0 4v26m0 15v1m0 46v5m1-104v7m0 4v26m0 14v3m0 44v6m1-104v4m0 48v1m0 51v5m1-109v7m0 4v26m1-37v7m0 45v1m0 50v5m1-108v7m0 19v11m0 15v1m0 46v5m1-93v26m0 14v1m0 1v1m0 10v33m1-97v7m0 4v26m0 14v3m1-54v7m0 4v26m0 15v1m0 39v10m1-102v7m0 4v26m0 14v3m0 42v7m1-103v4m0 99v4m1-102v2m0 4v26m0 14v3m0 42v7m1-103v7m0 45v1m0 50v4m1-107v7m0 4v26m0 15v1m0 43v7m1-103v7m0 4v26m0 15v1m0 41v8m1-102v7m0 4v26m0 15v1m0 45v6m1-104v7m0 4v26m0 14v3m0 43v6m1-103v7m0 4v26m0 15v1m0 45v6m1-98v1m0 4v26m0 14v3m0 20v26m1-100v7m0 4v26m0 15v1m0 41v8m1-102v7m0 4v26m0 15v1m0 45v6m1-104v7m0 4v26m0 15v1m0 45v5m2 4v1m1-108v7m0 4v26m0 15v1m0 46v5m1-104v7m0 4v26m0 15v1m0 50v4m1-107v7m0 4v26m0 15v1m0 46v6m1-105v7m0 4v26m0 15v1m0 47v5m1-105v7m0 45v1m0 51v4m1-108v6m0 97v5m1-108v7m0 4v26m0 15v1m0 46v5m1-104v7m0 4v26m0 15v1m0 48v5m1-106v7m0 100v4m1 0v2m1-113v7m0 4v26m0 15v1m0 53v3m1-2v1m1-108v5m0 101v1m1-107v7m0 4v26m0 15v1m0 51v1m1-94v26m0 14v3m0 45v4m1-103v7m0 4v26m0 15v1m0 48v1m1-102v7m0 45v1m0 47v1m1-101v7m0 4v26m0 15v1m0 46v1m1-100v7m0 4v26m0 4v10m0 3v43m0 7v6m1-110v7m0 4v26m0 5v9m0 3v5m0 56v8m1-123v7m0 25v5m0 12v3m0 2v6m0 85v2m0 9v2m0 3v1m1-162v4m0 24v3m0 108v1m1-140v7m0 16v2m0 30v17m0 90v3m1-165v7m0 14v1m0 12v3m0 15v1m0 109v2m0 5v3m1-172v7m0 4v9m0 12v5m0 15v1m0 109v3m0 4v1m1-170v7m0 4v7m0 13v6m0 15v1m0 109v3m0 4v1m1-154v1m0 7v2m0 143v3m1-158v1m0 8v1m0 145v3m1-172v4m0 8v1m0 8v1m0 147v3m1-153v2m0 148v3m1-172v7m0 11v1m0 150v3m1-172v7m0 8v3m0 151v3m1-172v5m0 8v1m0 155v3m1-172v3m0 9v24m0 16v1m0 109v2m0 5v3m1-172v2m0 167v3m1-22v5m0 4v2m0 4v4m1-166v1m0 128v1m0 1v1m0 8v1m0 1v1m0 15v1m1-161v2m1-2v1m0 160v3m1-161v1m0 128v1m0 9v1m0 1v1m0 22v1m1-165v3m1-4v2m0 154v2m1-159v1m0 151v1m0 4v2m0 5v2m1-167v1m0 150v3m0 4v2m0 4v3m1-168v2m0 151v2m0 4v2m0 4v4m1-167v1m0 148v4m0 4v2m0 4v4m1-166v4m0 4v26m0 15v1m0 91v9m1-151v1m0 150v2m0 4v2m0 4v4m1-166v2m0 115v6m1-123v4m0 138v10m1-151v1m0 144v6m0 4v2m0 5v2m1-164v1m0 142v8m1-151v3m1-7v1m0 3v1m0 123v5m0 3v3m0 7v2m1-148v1m0 4v2m0 132v1m0 7v8m1-155v1m0 4v2m0 4v25m1-35v1m0 93v4m0 42v6m1-146v1m0 4v1m0 132v1m0 11v4m0 4v2m0 4v4m1-169v3m0 136v1m0 9v6m0 4v2m0 5v2m1-168v3m0 100v7m0 17v1m0 6v2m0 4v3m1-143v4m0 7v7m0 16v2m0 16v1m0 58v2m0 14v1m0 6v2m0 4v2m1-142v5m0 6v3m0 125v1m0 7v8m1-150v1m0 5v3m0 125v1m0 11v4m0 4v2m0 4v3m1-162v1m0 7v1m0 124v1m0 10v5m0 4v2m0 5v2m1-168v7m0 8v1m0 109v3m1-128v7m0 9v1m0 122v1m0 7v8m1-139v1m0 135v3m0 4v2m0 4v4m1-169v7m0 11v1m0 130v6m0 4v2m0 5v2m1-168v7m0 12v2m0 129v5m0 4v2m1-161v7m0 4v3m0 9v4m0 126v2m1-129v1m0 129v1m0 1v3m0 4v4m1-169v7m0 9v2m0 10v2m0 136v1m1-148v1m0 10v1m0 137v1m1-150v2m0 12v1m0 128v3m1-165v4m0 16v2m1-22v7m0 4v17m0 13v2m0 9v1m0 109v2m0 5v1m1-167v4m0 4v19m0 17v2m0 2v3m0 108v3m1-165v6m0 26v3m0 134v3m1-172v7m0 33v2m0 19v3m0 105v3m1-172v7m0 4v25m0 10v1m0 21v1m0 100v3m72-172v7m0 4v26m0 3v12m0 1v2m0 8v1m0 3v1m0 21v1m0 5v3m1-47v1m0 1v1m0 32v1m0 1v1m0 8v2m1 0v2m1-49v1m0 45v2m1-49v2m0 44v2m1-48v3m0 43v2m1-48v1m0 1v1m0 42v2m1-98v7m0 4v26m0 3v11m0 3v7m0 34v2m1-45v1m0 46v1m1-100v7m0 4v26m0 3v11m0 3v12m0 28v3m1-45v1m0 45v2m1-49v3m0 43v2m1-99v7m0 4v26m0 3v12m0 1v6m0 36v3m1 2v2m1-50v1m0 46v1m1-48v1m0 44v2m4-98v6m0 4v26m0 3v11m0 3v2m0 11v1m0 24v4m1-96v7m0 4v26m0 14v1m1-52v7m0 39v1m0 19v1m0 18v13m1-98v7m0 35v1m0 41v5m0 80v3m1-172v4m0 45v4m0 16v5m0 95v3m1-172v4m0 31v1m0 9v1m0 123v3m2-172v7m0 162v3m1-172v7m0 162v3m1-131v1m0 128v2m1-131v1m1-8v1m0 6v1m1-42v7m0 4v22m0 19v1m0 109v2m0 5v3m1-140v1m0 137v2m1-141v1m0 138v2m1-137v1m0 134v2m1-172v7m0 22v1m0 4v1m0 127v2m0 5v3m1-144v1m0 4v1m0 128v2m0 5v3m1-139v1m0 128v3m1-140v1m0 8v1m0 127v1m0 1v1m1-165v3m0 20v1m0 9v1m0 127v1m0 3v4m1-169v7m0 13v2m0 9v3m0 122v1m0 1v3m0 4v1m1-166v3m0 15v2m0 9v1m0 124v1m0 4v1m1-160v7m0 7v2m0 11v2m0 119v2m0 4v1m0 3v1m0 2v1m1-162v5m0 7v2m0 10v2m0 117v2m0 4v2m0 5v2m0 3v1m1-162v5m0 17v2m0 115v2m0 3v3m0 9v2m0 3v1m1-162v7m0 13v1m0 116v1m0 1v3m0 14v2m0 3v1m1-162v4m0 13v2m0 137v2m0 3v1m1-162v1m0 15v2m0 138v2m0 3v1m1-149v2m0 141v2m0 3v1m1-151v1m0 144v2m0 3v1m1-25v4m0 15v2m0 3v1m1-162v2m0 137v1m0 3v1m0 12v2m0 3v1m1-157v2m0 135v1m0 4v1m0 8v2m0 3v1m1-159v3m0 140v1m0 3v2m0 4v2m0 3v1m1-161v5m0 143v2m0 3v1m0 6v1m1-8v1m0 6v1m1-162v6m0 149v1m1-156v7m0 149v3m0 1v1m0 5v2m1-7v1m0 3v2m1-167v7m0 4v26m0 15v1m0 103v2m0 9v2m1-169v6m0 150v2m0 3v1m1-6v2m0 3v1m1-96v18m0 66v5m0 4v2m0 5v2m1-168v7m0 58v1m0 35v24m0 14v1m1-10v1m1-131v2m0 127v1m1-128v5m0 86v2m0 33v1m1-126v1m0 125v1m1-125v1m1-6v1m0 5v1m0 81v6m0 34v1m1-129v2m0 66v4m1-72v4m0 64v3m0 3v3m1-77v5m0 6v1m0 62v8m1-82v7m0 5v2m0 66v6m1-72v1m1-15v5m0 11v1m1-6v1m0 5v1m1-18v7m0 4v2m0 7v17m0 15v1m1-53v5m0 9v1m0 6v1m1 0v1m0 109v1m1-115v1m0 113v1m1-133v7m0 4v9m0 6v11m0 15v1m0 75v2m1-109v1m0 4v1m0 103v1m1-109v1m0 5v1m0 102v1m1-132v6m0 16v1m0 6v1m0 102v1m1-112v1m0 112v1m1-135v7m0 13v1m0 11v2m0 100v2m1-136v7m0 4v11m0 12v3m0 15v1m0 83v3m1-117v2m0 11v1m0 111v3m1-150v7m0 15v3m0 126v3m1-128v1m0 134v1m1-1v1m1-162v6m0 23v1m0 11v1m0 119v1m1-162v6m0 25v1m1 2v1m0 127v3m1-165v7m0 28v2m0 14v2m0 109v3m0 4v1m1-116v1m1-12v1m0 13v1m1-10v1m0 12v3m1-64v7m0 44v1m0 18v3m1-73v7m0 45v1m0 2v3m0 19v2m1-79v7m0 54v3m0 19v2m1-15v3m0 15v2m1-90v7m0 70v4m0 15v2m1-98v7m0 4v26m0 15v1m0 33v5m0 12v3m0 63v3m1-172v3m0 96v5m0 5v4m0 56v3m1-172v7m0 100v3m0 9v3m0 40v3m0 4v1m1-170v7m0 4v26m0 15v1m0 22v14m0 24v3m0 13v2m0 33v1m1-165v7m0 4v26m0 15v1m0 20v25m0 22v3m0 10v1m1-134v7m0 4v26m0 15v1m0 20v9m0 14v8m0 24v2m0 6v1m1-137v7m0 4v26m0 15v1m0 19v7m0 27v7m0 19v1m0 7v1m0 4v2m1-147v7m0 4v26m0 15v1m0 19v7m0 36v9m0 10v2m0 7v5m1-148v7m0 4v26m0 15v1m0 20v6m0 47v6m0 4v2m0 11v1m0 11v1m1-162v7m0 4v26m0 15v1m0 20v6m0 54v8m0 9v1m0 5v2m0 3v1m1-162v7m0 67v6m0 56v7m0 6v1m0 1v1m0 4v2m0 3v1m1-162v7m0 4v26m0 15v1m0 20v6m0 61v5m0 5v1m0 2v1m0 2v2m0 3v1m1-158v3m0 4v26m0 15v1m0 20v6m0 63v3m0 5v2m0 2v4m0 3v1m1-126v1m0 14v3m0 14v7m0 83v1m1-119v2m0 10v1m0 19v6m0 74v2m1-154v7m0 4v15m0 14v11m0 2v1m0 19v5m0 75v1m1-154v7m0 4v26m0 14v1m0 1v12m0 6v7m0 80v1m0 2v1m1-162v7m0 4v26m0 15v1m0 8v6m0 87v2m1-156v7m0 4v26m0 15v1m0 15v3m0 88v1m0 1v1m1-162v7m0 4v26m0 15v1m0 18v4m1-75v7m0 4v26m0 15v1m0 19v5m0 83v1m1-156v2m0 4v26m0 15v1m0 18v5m1-58v19m0 15v1m0 20v5m0 80v2m1-120v2m0 10v1m0 18v6m0 82v2m1-112v2m0 2v2m0 15v6m0 84v1m1-161v7m0 4v12m0 35v6m0 7v8m1-79v7m0 4v26m0 8v5m1-50v7m0 4v26m0 14v3m0 2v5m0 104v1m1-166v7m0 4v26m0 15v1m0 13v4m1-70v7m0 4v25m0 16v1m0 18v3m0 92v1m1-167v5m0 69v3m0 89v1m1-167v7m0 4v26m0 15v1m0 16v6m1-75v7m0 66v4m1-77v7m0 66v5m1-78v7m0 4v26m0 15v1m0 17v5m0 92v1m1-168v5m0 69v4m0 87v1m0 1v1m1-168v7m0 4v26m0 15v1m0 16v6m0 90v1m1-166v7m0 4v26m0 15v1m0 17v5m0 90v1m1-166v7m0 4v26m0 15v1m0 17v5m0 90v1m0 2v1m1-169v7m0 4v26m0 15v1m0 18v5m0 92v1m1-169v7m0 66v4m0 89v1m0 1v1m1-169v5m0 69v4m0 88v1m0 1v1m1-165v3m0 4v26m0 15v1m0 15v6m0 91v4m1-169v7m0 4v25m0 16v1m0 18v5m1-76v7m0 4v25m0 16v1m0 19v4m1-71v2m0 4v26m0 15v1m0 15v6m1-74v7m0 4v25m0 16v1m0 19v4m1-76v7m0 4v26m0 15v1m0 18v5m1-76v7m0 4v26m0 15v1m0 18v5m0 84v1m1-161v7m0 4v26m0 15v1m0 18v5m1-76v7m0 66v4m1-77v7m0 4v25m0 16v1m0 19v5m1-74v4m0 4v26m0 15v1m0 16v5m1-74v7m0 4v26m0 15v1m0 17v5m0 83v1m1-83v4m0 77v1m0 3v1m1-162v5m0 69v5m0 78v1m0 3v1m1-162v7m0 4v26m0 15v1m0 18v5m0 79v1m0 2v1m1-159v7m0 4v26m0 15v1m0 19v5m0 77v2m0 2v1m1-159v7m0 4v26m0 15v1m0 19v5m0 76v1m0 1v3m1-158v7m0 4v26m0 15v1m0 17v6m0 77v1m0 1v1m0 2v1m1-159v5m0 70v5m0 76v2m0 3v1m1-162v7m0 4v26m0 15v1m0 17v6m0 75v1m0 3v1m0 2v1m1-159v7m0 4v26m0 15v1m0 19v5m0 72v1m0 5v3m1-158v7m0 4v26m0 15v1m0 18v6m0 71v1m0 6v1m0 1v2m1-159v7m0 4v26m0 15v1m0 19v5m0 70v1m0 7v3m1-158v7m0 4v26m0 15v1m0 18v5m0 70v1m0 8v1m0 2v1m1-159v7m0 4v26m0 15v1m0 20v5m0 66v1m0 11v2m0 3v1m1-162v7m0 4v25m0 16v1m0 20v6m0 64v1m0 12v2m0 3v1m1-162v7m0 4v26m0 15v1m0 18v6m0 64v2m0 12v4m1-159v7m0 4v26m0 15v1m0 20v8m0 55v2m0 18v2m1-158v7m0 71v25m0 27v2m0 24v2m0 3v1m1-158v3m0 4v26m0 15v1m0 20v20m0 32v4m0 27v2m1-158v7m0 4v26m0 15v1m0 26v10m0 26v4m0 37v2m0 3v1m1-158v3m0 4v26m0 15v1m0 24v5m0 24v3m0 47v2m0 3v1m1-162v7m0 4v26m0 15v1m0 22v2m0 20v2m1-99v7m0 4v26m0 15v1m0 16v3m0 18v2m1-92v7m0 4v26m0 15v1m0 12v2m0 16v2m0 77v3m1-165v7m0 53v3m0 14v2m0 83v2m0 5v3m1-172v7m0 4v26m0 15v1m0 3v2m0 15v2m0 87v3m0 4v1m1-170v7m0 4v26m0 14v1m0 16v2m0 92v3m0 4v3m1-172v7m0 43v1m0 11v2m0 98v2m0 5v3m1-166v1m0 4v26m0 8v2m0 12v2m0 101v3m1-165v6m0 38v1m0 9v2m0 113v3m1-172v7m0 33v2m0 11v1m0 115v3m1-172v7m0 25v5m0 11v2m0 2v1m0 109v1m0 6v3m1-169v4m0 4v23m0 12v2m0 4v1m0 109v3m1-165v7m0 4v21m0 10v2m0 8v1m0 109v2m0 5v3m1-172v7m0 4v18m0 11v1m0 11v1m0 109v2m0 5v3m1-172v7m0 19v2m0 141v3m1-172v7m0 17v2m0 10v1m0 132v3m1-172v7m0 17v1m0 9v2m0 133v3m1-172v7m0 4v12m0 10v4m0 15v1m0 109v3m0 4v1m1-170v7m0 4v11m0 9v6m0 15v1m0 109v3m0 4v1m1-170v7m0 4v10m0 8v8m0 15v1m0 109v3m0 4v1m1-170v7m0 11v3m0 6v4m0 138v3m1-161v8m0 9v9m0 14v3m0 108v3m1-165v7m0 11v1m0 6v1m0 143v3m1-172v4m0 14v1m0 5v1m0 144v3m1-172v7m0 4v7m0 6v13m0 15v1m0 87v1m0 1v1m0 19v2m0 5v3m1-172v7m0 4v6m0 6v14m0 15v1m0 88v1m0 20v2m0 5v3"/><path stroke="#00ff5a" d="M237 359v2m1-2v2m0 3v1m1-123v1m1 78v1m1-1v1m0 8v2m0 26v1m0 2v1m1-46v5m1-118v5m0 104v5m1-4v4m1-114v7m0 4v26m0 15v1m0 53v4m1-110v1m0 39v12m0 1v44m0 11v4m1-2v4m1-10v4m1-6v4m1-106v6m0 95v4m1-105v7m0 4v26m0 15v1m0 52v4m1-109v1m0 39v11m0 3v23m0 29v4m1-109v6m0 45v1m0 56v4m1-4v4m1-8v4m1-1v4m1-111v6m0 45v1m0 52v4m2-109v1m0 39v12m0 1v43m1 9v4m1 0v3m1-73v1m0 69v4m1-7v4m1-110v6m0 97v5m1 0v4m1-6v4m1-7v4m1-5v4m1-2v4m1-1v4m1-72v1m0 70v4m1-75v1m0 71v4m1-76v1m0 71v4m1-8v4m1-6v4m1-3v4m1-3v4m1-7v5m1-3v4m1-1v4m1-74v1m0 70v3m1-6v4m1-3v4m1-6v4m1-2v4m1-7v4m1-7v4m1-3v4m1-107v7m0 45v1m0 45v5m1-103v7m0 45v1m0 42v7m1 1v4m1-3v4m1-4v4m1 1v4m1-73v11m0 3v48m1 6v4m1-8v4m1-108v7m0 45v1m0 44v6m1-26v1m1 24v4m1-3v4m1-68v1m0 67v4m1-111v5m0 98v4m1 0v4m1-8v4m1-5v4m1-2v4m1-5v5m1-4v4m1-108v6m0 94v5m1-3v4m1-2v4m1-5v5m1-108v1m0 41v9m0 56v4m1-3v3m1-7v4m1-1v4m1-6v4m1-4v4m1-1v4m1-73v1m0 68v3m1-7v4m1-2v4m1 1v2m1-75v2m1 69v1m1-72v2m0 68v1m1-70v1m0 67v1m2-108v7m0 96v1m1-2v1m1 3v6m1-7v7m1-72v1m0 10v1m0 1v1m0 49v1m0 11v4m1-79v2m0 9v1m0 1v1m0 5v38m0 31v8m0 18v2m0 9v4m1-117v2m0 6v15m0 69v1m1-114v2m0 129v3m0 4v3m1-147v1m0 20v5m0 2v2m0 114v3m1-150v1m0 10v1m1-14v1m0 149v2m1-154v1m0 10v2m0 139v2m1-134v2m1-18v1m0 15v2m1-27v1m0 6v1m0 18v1m1-29v1m0 27v1m1-23v1m0 21v1m1-26v1m0 24v1m1-35v1m0 33v1m1-37v1m0 7v1m1-10v1m0 36v1m1-40v1m0 3v2m0 31v3m0 115v1m0 2v1m1-157v1m0 34v3m0 104v1m0 26v1m1-172v1m0 5v1m0 31v2m0 129v3m1-167v1m0 31v3m1-30v1m0 26v3m0 104v1m0 17v1m1-160v1m0 35v1m0 121v1m0 3v4m1-167v1m0 36v1m0 116v3m0 6v4m1-131v2m0 115v1m0 2v1m0 6v1m0 2v1m1-131v2m0 115v1m0 2v1m0 9v1m1-132v3m0 115v1m0 2v1m1-121v2m0 115v1m0 2v1m1-157v1m0 150v2m0 4v2m0 4v4m1-159v1m0 26v3m0 115v1m0 2v1m1-120v1m0 86v15m1 14v1m0 3v2m0 4v4m1-166v1m0 35v1m0 115v1m0 2v1m0 6v1m0 2v1m1-131v2m0 115v1m0 3v2m0 4v4m1-169v1m1 36v3m0 108v7m1-151v1m0 34v1m0 115v1m0 3v2m0 4v4m1-168v1m0 80v2m1-79v1m0 31v3m0 99v1m1-102v2m0 115v1m0 2v1m1-120v1m0 115v1m0 2v1m0 6v1m0 2v1m1-166v1m0 139v8m1-147v1m0 137v8m1-111v1m0 115v1m0 2v3m0 4v4m1-131v2m0 115v1m0 2v1m0 9v1m1-156v1m0 23v3m0 115v1m0 2v1m0 6v1m0 2v1m1-155v1m0 24v1m0 94v2m0 4v1m1-126v1m0 23v1m0 115v1m0 3v2m0 4v4m1-132v3m0 115v1m0 2v1m1-142v1m0 21v1m0 115v1m0 2v1m0 6v1m0 2v1m1-158v2m0 26v1m0 115v1m0 2v1m0 6v4m1-155v1m0 6v2m0 132v1m0 3v2m0 4v4m1-153v1m0 8v1m0 12v2m0 117v1m1-131v1m0 11v1m0 121v1m0 3v1m0 1v2m1-140v1m0 7v3m0 122v1m1-131v1m0 5v2m1-18v4m0 10v1m0 132v1m1-142v1m0 11v1m0 129v2m1-172v3m0 27v1m0 15v1m0 122v3m1-137v2m0 13v2m0 1v1m1-12v2m0 15v2m1-14v2m61-48v6m0 4v25m0 5v9m0 5v14m0 5v17m7-91v7m0 4v24m0 5v7m0 7v11m0 5v17m4-35v1m0 45v2m1-48v1m0 11v1m0 1v1m0 32v2m1-94v1m0 2v1m0 26v3m0 61v2m1-96v1m0 2v1m0 26v3m0 60v2m1-3v2m1-2v2m1-49v1m0 45v2m1-49v3m0 43v2m1-92v1m0 2v1m0 26v3m0 60v2m1-51v1m0 1v1m0 43v2m1 1v2m1-3v2m1-49v1m0 45v2m1-93v1m0 2v1m0 26v3m0 62v1m1-96v1m0 2v1m0 26v3m0 60v2m1-3v2m4-50v1m0 1v1m0 2v5m0 5v1m0 29v2m1-46v4m1-17v1m0 7v1m1-5v1m0 13v27m1-37v2m0 10v10m1-33v1m0 7v1m1-35v1m1 30v1m1-1v1m2-32v1m2 22v1m0 6v1m1-5v1m0 1v2m1-2v2m1-2v2m1-1v1m1-11v1m0 8v2m1-13v1m0 4v1m0 5v2m0 129v2m1-139v1m0 4v3m0 123v1m1-132v1m0 6v1m1-10v1m0 126v1m1-138v1m0 7v1m0 10v1m0 115v1m0 2v1m0 2v1m1-146v1m0 9v1m0 123v4m0 1v3m1-119v1m0 105v4m1-110v1m0 101v3m1-125v1m0 19v1m0 98v1m1-135v1m0 34v1m1-39v1m0 13v1m1-4v1m0 26v1m1-35v2m0 31v2m1-38v3m0 34v1m1-38v1m0 3v1m0 32v1m0 100v3m1-143v1m0 3v1m0 34v1m0 103v4m1-145v1m0 36v1m0 107v3m1-150v1m0 38v1m0 111v3m0 1v3m1-121v3m0 115v1m0 2v1m1-120v1m0 116v1m0 1v3m1 4v1m1-129v3m0 127v2m1-8v1m1-123v1m0 90v2m1-94v2m1-3v3m0 115v1m0 2v1m0 6v1m0 2v1m1-80v12m0 39v1m0 6v2m1-111v2m1-2v2m0 90v1m1-130v1m0 37v1m0 89v1m1-128v1m0 34v3m0 90v1m1-127v1m0 33v2m1-39v1m0 3v1m0 31v3m0 89v1m1-128v1m0 36v1m0 27v1m1-29v1m0 31v3m1-69v1m0 33v1m1-1v1m1-27v1m0 24v2m1-25v1m0 23v1m1-28v1m0 25v2m1-27v1m0 5v1m1-5v1m0 4v1m0 18v1m1-30v1m0 6v1m0 19v3m0 93v1m1-115v1m0 3v1m0 13v3m1-20v1m0 4v1m0 104v2m1-110v1m0 14v3m1-17v1m0 3v1m0 10v2m1-17v2m0 14v1m0 93v1m1-112v1m0 2v1m0 4v1m0 6v3m0 95v2m1-116v1m0 114v3m1-106v1m0 105v6m0 14v2m0 4v4m1-135v1m0 3v2m0 110v2m0 6v1m0 2v1m1-137v1m0 10v1m0 117v1m0 3v1m0 2v1m1-135v1m0 11v1m0 116v2m3-126v1m0 10v1m0 118v3m1-130v1m0 10v1m0 122v3m1-122v1m0 119v2m1-135v2m0 2v1m1-4v2m1-3v3m0 19v2m1 6v3m1-12v1m0 15v3m1-13v3m0 14v2m1-45v2m0 33v4m0 8v3m1-7v4m0 7v4m1-5v12m1-64v1m0 64v5m1 1v9m0 51v2m1-56v4m0 6v3m0 33v2m0 5v3m1-49v4m0 5v1m0 29v3m0 4v1m0 1v1m1-90v14m0 34v2m0 3v1m0 26v3m0 4v3m1-93v9m0 9v9m0 27v1m0 5v1m0 22v3m1-86v6m0 22v8m0 21v1m0 5v1m0 19v3m1-86v5m0 34v8m0 12v1m0 7v3m1-70v5m0 44v5m0 8v1m0 5v3m1-70v5m0 47v4m0 7v2m0 3v1m0 1v1m1-72v5m0 52v4m0 9v1m0 1v2m1-153v4m0 75v5m0 55v3m0 3v1m0 6v2m1-137v19m0 39v5m0 71v3m0 3v1m0 3v1m1-162v7m0 4v8m0 10v8m0 41v5m0 63v2m0 6v1m0 2v1m0 3v1m1-136v11m0 14v2m0 25v5m0 64v2m0 3v1m0 4v1m0 3v1m1-110v1m0 25v5m0 64v3m0 3v1m0 1v1m1-89v15m0 66v2m0 8v1m0 2v1m1-91v4m0 74v2m0 4v2m1-82v3m0 78v1m0 2v1m0 1v1m1-85v5m0 75v3m0 1v1m1-162v5m0 71v5m0 77v3m1-155v1m0 4v7m0 60v5m0 77v1m1-84v4m1-37v5m0 2v2m0 23v5m0 78v1m1-137v14m0 3v7m0 7v4m0 21v4m1-33v1m0 3v1m0 18v8m0 79v2m1-101v4m1 5v2m0 93v1m1-92v1m1-36v1m0 37v2m0 86v1m1-91v4m0 87v1m1-90v4m0 84v2m1-89v4m0 83v2m1-92v4m0 86v1m1-127v1m0 38v4m0 84v1m1-92v4m0 88v1m1-93v4m0 87v2m1-93v4m0 87v2m1-92v4m0 86v2m1-91v4m0 86v1m1-129v1m0 38v4m0 85v1m1-168v4m0 70v4m1-2v4m1-4v4m1-80v5m0 69v4m1-2v4m1-4v4m0 80v1m1-85v4m0 81v1m1-86v4m0 79v1m0 1v1m1-85v4m0 80v1m1-85v4m0 77v1m0 2v1m1-162v3m0 71v5m0 79v1m0 2v1m1-87v5m0 81v1m1-124v2m0 40v4m0 72v1m1-118v1m0 39v4m0 72v2m1-81v5m0 73v1m0 1v2m0 3v1m1-85v4m0 75v2m0 3v1m1-85v5m0 79v1m1-86v4m0 72v1m0 3v2m0 3v1m1-123v1m0 40v4m0 67v1m1-76v4m0 70v1m0 5v2m0 3v1m1-85v5m0 79v1m1-85v5m0 74v1m0 4v1m1-85v5m0 53v6m0 5v1m0 14v1m1-86v5m0 49v7m0 8v1m0 10v2m0 3v1m1-84v5m0 38v12m1-54v5m0 27v18m0 13v1m1-66v7m0 22v14m0 19v2m0 20v1m1-81v32m0 21v2m0 25v1m1-59v4m0 21v2m1-130v4m0 89v5m0 24v3m0 36v1m1-73v3m0 20v3m1-115v4m0 78v3m0 18v3m1-29v3m0 15v2m0 65v3m1-93v2m0 14v2m0 72v3m0 4v1m1-103v2m0 12v2m0 86v3m1-109v1m0 11v2m1-19v1m0 12v2m0 97v2m1-120v4m0 10v2m1-17v1m0 8v2m1-62v6m0 41v2m0 9v1m0 110v3m1-133v1m0 5v2m1-5v1m0 7v3m1-6v1m1-48v3m0 31v2m0 9v1m0 123v3m1-140v1m1-4v1m1-2v1m1-3v1m0 8v1m1 3v1m1-17v1m0 8v1m0 137v2m1-150v1m0 7v1m0 139v2m1-151v1m0 6v1m0 141v2m2-172v7m0 12v1m0 6v2m0 141v3m1-153v1m0 4v1m1 14v1m1-17v1m1-7v1"/><path stroke="#00ff4c" d="M237 241v2m0 121v1m1-124v2m1-33v1m0 2v1m0 26v2m0 123v3m1-158v1m0 2v1m0 26v3m0 79v2m0 41v3m1-127v2m0 79v1m0 36v2m0 3v1m1-124v2m0 78v2m0 10v26m0 2v3m0 4v4m1-130v1m0 74v5m1-109v1m0 26v3m0 74v5m1-9v4m1-113v6m0 4v26m0 15v1m0 59v4m1-78v2m0 74v4m1-79v1m0 68v4m1-74v2m0 66v4m1-71v1m0 65v4m1 0v4m1-108v2m0 4v26m0 14v3m0 56v4m1-1v3m1-106v1m0 26v3m0 73v4m1-79v2m0 69v4m1-76v3m0 72v4m1-7v4m2-112v6m0 4v26m0 15v1m0 43v7m1-66v3m0 69v4m1-106v1m0 2v1m0 26v3m0 72v4m1-109v1m0 2v1m0 26v2m0 74v4m1-107v1m0 26v3m0 70v3m1-74v1m0 68v3m1-104v1m0 2v1m0 26v3m0 72v4m1-79v3m0 70v3m1-76v3m0 67v4m1-73v2m0 66v4m1-71v1m0 68v4m1-75v3m0 71v4m1-108v1m0 2v1m0 26v2m0 75v4m1-111v1m0 2v1m0 26v2m0 76v5m1-113v1m0 2v1m0 26v2m0 76v4m1-112v1m0 2v1m0 26v3m0 71v4m1-105v1m0 26v3m0 69v3m1-105v1m0 2v1m0 26v3m0 70v4m1-104v1m0 26v3m0 71v4m1-77v2m0 69v3m1-75v3m0 70v4m1-107v1m0 2v1m0 26v3m0 73v4m1-110v1m0 2v1m0 26v2m0 74v4m1-107v1m0 26v3m0 71v4m1-108v1m0 2v1m0 26v3m0 72v4m1-79v3m0 70v4m1-104v1m0 26v3m0 72v4m1-78v2m0 69v4m1-75v2m0 66v4m1-100v1m0 26v3m0 67v4m1-8v4m1-5v4m1-96v1m0 26v3m0 67v4m1-73v2m0 68v4m1-73v1m0 68v4m1-105v1m0 2v1m0 26v3m0 73v4m1-66v3m0 48v5m1-100v1m0 2v1m0 26v3m0 72v4m1-106v1m0 26v3m0 68v4m1-9v4m1-68v1m0 38v22m1-63v3m0 66v4m1-71v1m0 67v4m1-104v1m0 2v1m0 26v2m0 72v4m1-76v1m0 67v4m1-104v1m0 2v1m0 26v3m0 71v4m1-77v2m0 67v4m1-73v2m0 66v4m1-72v2m0 68v4m1-73v1m0 68v3m1-74v3m0 68v4m1-73v1m0 65v4m1-71v2m0 66v4m1-73v3m0 68v3m1-73v2m0 68v3m1-71v2m0 9v1m0 1v32m0 26v2m1-2v2m1-74v1m0 68v4m1-102v1m0 26v3m0 71v4m1-76v1m0 69v3m1-74v2m0 69v3m1-105v1m0 2v1m0 26v3m0 72v4m1-109v1m0 2v1m0 26v2m0 72v4m1-78v3m0 68v4m1-74v2m0 70v3m1-106v1m0 2v1m0 26v3m0 73v1m1-107v1m0 2v1m0 26v1m0 75v1m0 8v3m1-115v1m0 26v3m0 70v2m1-105v1m0 2v1m0 26v1m1-31v1m0 2v1m0 26v2m0 69v1m0 7v2m1-108v1m0 26v3m0 65v1m0 8v2m2-79v3m0 63v1m0 5v6m1-108v1m0 2v1m0 26v3m0 65v1m0 6v5m1-79v2m0 72v5m1-65v1m0 44v1m0 4v1m0 16v4m0 5v8m0 18v1m0 10v4m1-117v1m0 103v5m1-154v1m0 2v1m0 28v1m0 35v23m0 39v1m0 5v1m0 18v3m1-158v1m0 2v1m0 22v1m0 55v9m1-91v1m0 2v1m0 15v1m0 14v5m0 5v2m1-46v1m0 2v1m0 12v1m0 14v2m1-30v1m0 20v1m0 5v3m1-12v1m0 8v3m1-33v1m0 2v1m0 6v1m0 5v1m0 13v1m1-31v1m0 2v1m0 4v1m0 21v1m1-31v1m0 2v1m0 26v2m1-32v1m0 10v1m0 18v2m1-32v1m0 29v2m1-2v2m1-33v1m0 5v1m0 24v2m1-35v1m0 32v3m1-35v2m0 30v2m1-38v1m0 1v1m0 6v1m0 145v2m0 3v1m0 9v1m1-171v1m0 2v1m0 5v1m0 122v1m0 28v3m1-162v1m0 3v1m0 2v1m0 26v1m1-31v1m0 2v1m0 121v1m0 1v1m1-134v1m0 5v1m0 155v2m1-165v1m0 6v1m0 2v1m0 26v2m1-32v1m0 2v1m0 26v2m1-32v1m0 2v1m0 26v1m0 118v2m1-158v1m0 6v1m0 2v1m0 26v1m0 118v2m0 3v1m1-155v1m0 2v1m0 145v2m0 3v1m1-161v1m0 5v1m0 2v1m0 26v1m0 118v2m0 3v1m1-125v3m0 115v1m0 2v1m1-152v1m0 148v2m0 3v1m1-160v1m0 4v1m0 2v1m0 26v2m0 102v8m1-142v1m0 2v1m0 26v3m0 116v1m0 1v1m1-152v1m0 2v1m0 26v2m0 117v2m1-158v1m0 2v1m0 3v1m0 2v1m0 26v1m0 118v1m0 1v1m1-152v1m0 2v1m0 26v3m0 12v1m0 35v6m1-87v1m0 2v1m0 144v1m0 2v3m0 4v4m1-168v1m0 5v1m0 2v1m0 26v2m0 117v3m1-149v1m0 26v3m0 12v1m0 1v28m0 2v6m0 14v24m0 6v2m1-129v1m0 2v1m0 136v1m1-146v1m0 4v1m0 2v1m0 26v1m0 52v1m0 65v2m0 3v1m1-152v1m0 26v2m0 51v1m0 65v2m1-148v1m0 26v3m0 50v1m0 3v1m0 44v1m0 11v4m0 4v2m0 4v4m1-132v3m0 99v1m0 10v5m0 4v2m0 5v2m1-163v1m0 31v2m0 117v2m1-152v1m0 30v1m0 118v2m0 3v1m1-150v1m0 143v2m0 3v1m1-125v2m0 102v8m1-112v2m0 117v3m1-144v1m0 120v1m0 19v2m0 3v1m1-125v2m0 117v2m1-145v1m0 4v1m0 18v2m0 117v2m1-138v1m0 16v3m0 116v3m1-152v1m0 2v1m0 13v1m0 12v1m0 123v1m1-155v1m0 2v1m0 7v1m0 18v2m1-32v1m0 2v1m0 9v1m0 7v1m0 134v2m1-158v1m0 2v1m0 10v1m0 9v1m0 5v1m1-31v1m0 2v1m0 15v1m0 7v2m0 2v2m0 130v2m1-162v1m0 18v1m1 1v1m0 12v2m1-39v1m0 2v1m0 38v1m0 2v1m1-46v1m0 2v1m0 26v3m0 4v1m0 12v2m1-49v1m0 26v3m0 9v1m0 17v1m55-68v7m0 4v26m0 3v12m0 5v16m0 3v19m3-95v7m0 4v1m0 3v1m0 2v2m0 2v2m0 3v1m0 3v2m0 2v2m0 7v2m0 3v2m0 8v2m0 3v2m0 3v2m0 5v1m0 4v2m0 3v3m1-58v1m0 3v2m0 8v1m0 3v2m0 8v2m0 3v2m0 9v2m0 4v2m0 4v2m2-89v1m0 35v1m0 13v1m0 18v1m0 21v1m0 4v3m6-99v7m0 4v24m0 5v8m0 5v13m0 5v17m0 5v3m1-61v2m0 10v1m0 3v1m0 1v1m0 11v1m0 21v1m0 4v6m1-98v7m0 4v26m0 3v7m0 7v10m0 7v15m3-79v1m0 2v1m0 89v2m1-95v1m0 2v1m0 26v3m0 47v1m0 13v2m1 0v2m1-3v2m1-97v1m0 2v1m0 26v3m0 61v1m1-95v1m0 2v1m0 26v3m0 61v2m1-96v1m0 2v1m0 26v3m0 60v2m1-3v2m1 1v2m1-52v1m0 46v2m1-94v1m0 2v1m0 26v3m0 62v1m1-96v1m0 2v1m0 26v3m0 61v2m1-3v1m1 2v1m1-2v2m1-97v1m0 2v1m0 26v3m0 61v2m4-51v1m0 8v3m0 34v2m1-63v3m0 16v2m0 8v1m1-60v1m0 2v1m0 26v2m0 9v1m0 15v2m1-59v1m0 2v1m0 26v3m0 4v1m0 10v2m1-50v1m0 2v1m0 26v2m0 1v1m1-34v1m0 2v1m0 32v1m1-37v1m0 33v1m1-35v1m0 2v1m1-4v1m0 2v1m1-4v1m0 2v1m1-4v1m1-1v1m0 2v1m2-4v1m0 2v1m0 26v1m1-31v1m0 2v1m0 21v1m0 2v1m0 1v1m1-31v1m0 2v1m0 20v1m0 2v1m0 2v1m1-31v1m0 2v1m0 19v1m0 6v2m1-32v1m0 2v1m0 26v1m1-31v1m0 2v1m0 26v1m0 133v1m1-165v1m0 2v1m0 15v1m0 4v1m0 1v1m1-27v1m0 2v1m0 13v1m0 6v1m0 5v2m1-32v1m0 2v1m0 11v1m0 6v1m0 7v3m1-33v1m0 2v1m0 16v1m0 9v2m0 117v2m0 6v1m0 4v1m1-163v1m0 2v1m0 6v1m0 7v1m0 11v3m0 124v1m1-158v1m0 2v1m0 3v1m0 8v1m0 13v2m0 123v3m1-158v1m0 3v1m0 9v1m0 15v2m0 123v3m1-147v1m0 18v2m0 123v3m1-160v1m0 10v1m0 20v2m0 123v3m1-163v1m0 8v1m0 2v1m0 22v3m0 124v1m1-154v1m0 25v2m0 125v1m1-161v1m0 32v1m0 124v3m1-164v1m0 3v2m0 3v1m0 26v2m0 123v3m1-162v3m0 4v1m0 26v2m0 123v3m1-164v1m0 1v1m0 3v1m0 2v1m0 26v2m0 125v1m1-164v1m0 5v1m0 2v1m0 26v2m0 123v3m1-158v1m0 2v1m0 26v2m0 125v1m1-158v1m0 2v1m0 145v2m0 4v3m0 4v1m1-163v1m0 2v1m0 26v2m0 118v1m1-148v1m0 26v3m1-33v1m0 2v1m0 151v1m1-153v1m0 26v3m1-33v1m0 2v1m0 26v2m0 123v3m1-158v1m0 2v1m0 26v1m0 124v3m1-158v1m0 2v1m0 145v2m0 3v1m1-152v1m0 26v3m0 35v14m1-82v1m0 2v1m0 26v1m0 93v1m1-125v1m0 2v1m0 26v1m1-38v1m0 6v1m0 2v1m0 26v2m0 91v1m1-124v1m0 2v1m1-11v1m0 2v1m0 3v1m0 2v1m0 26v1m1-31v1m0 2v1m0 119v1m1-125v1m0 3v1m0 26v2m1-35v1m0 5v1m0 26v2m1-2v2m1-28v1m0 25v2m1-32v1m0 29v1m1-31v1m0 6v1m0 22v2m1-32v1m0 2v1m0 5v1m0 20v1m1-24v1m0 3v1m0 18v3m1-33v1m0 2v1m0 5v1m0 20v2m0 92v1m1-125v1m0 10v1m0 2v1m0 112v1m1-128v1m0 2v1m0 122v1m1-124v1m0 13v1m0 12v3m0 92v1m1-126v1m0 2v1m0 14v1m0 105v2m1-126v1m0 2v1m0 26v1m0 94v1m1-126v1m0 2v1m0 17v1m0 8v2m0 95v1m1-128v1m0 2v1m0 12v2m0 1v1m0 110v1m0 11v6m0 4v2m0 4v4m1-159v1m0 16v1m0 3v1m0 5v3m0 99v2m0 10v4m0 4v2m0 4v4m1-147v1m0 14v3m0 105v2m0 6v3m0 2v1m1-152v1m0 2v1m0 13v1m0 12v1m0 114v3m0 2v1m1-148v1m0 15v1m0 11v2m0 115v1m1-149v1m0 2v1m0 27v1m0 123v3m1-158v1m0 2v1m0 17v1m0 133v3m0 4v3m1-165v1m0 2v1m0 19v1m0 131v3m0 4v3m1-165v1m0 2v1m0 158v3m1-165v1m0 2v1m1-4v1m0 2v1m0 38v1m1-43v1m0 2v1m0 28v1m0 13v1m1-47v1m0 2v1m0 26v1m1-31v1m0 2v1m0 38v1m0 8v1m1-52v1m0 2v1m0 26v3m0 12v1m0 12v2m1-60v1m0 2v1m0 26v3m0 19v3m0 10v2m1-67v1m0 2v1m0 26v3m0 27v3m0 8v3m1-74v1m0 2v1m0 26v1m0 39v8m1-78v1m0 2v1m0 26v3m0 45v7m1-55v3m1-33v1m0 2v1m0 26v2m1-32v1m0 2v1m0 26v3m1-2v2m0 80v6m1-88v2m0 87v5m0 38v1m1-134v3m0 92v3m1-97v2m0 48v9m0 37v5m0 30v3m1-135v3m0 45v22m0 30v2m0 1v2m0 27v3m1-135v3m0 44v7m0 17v10m0 21v2m0 3v2m0 16v3m0 4v1m1-133v3m0 44v6m0 29v9m0 14v1m0 3v1m0 15v3m1-155v1m0 26v3m0 45v6m0 35v6m0 15v1m0 14v3m1-128v3m0 44v5m0 43v4m0 9v1m0 2v1m0 15v1m1-128v3m0 44v5m0 46v4m0 7v1m0 2v1m0 14v1m1-160v2m0 4v6m0 63v5m0 57v5m0 3v1m0 3v3m1-138v10m0 54v5m0 55v3m0 5v1m0 3v2m0 7v1m1-82v5m0 58v1m0 8v1m0 8v1m1-127v2m0 43v5m0 58v1m0 10v1m0 6v1m1-128v3m0 42v6m0 59v1m0 2v1m0 5v1m0 7v1m1-128v3m0 35v4m0 69v1m0 2v1m0 2v1m0 3v1m0 5v1m1-127v2m0 38v3m0 69v2m0 3v1m0 1v2m1-122v3m0 42v3m0 65v3m0 3v1m0 7v1m1-127v2m0 41v5m0 65v3m0 3v1m0 3v1m1-162v6m0 32v2m0 43v5m0 64v2m0 10v1m1-138v10m0 44v5m0 67v2m0 3v1m1-159v2m0 38v4m0 37v4m0 69v1m1-108v5m0 1v1m0 29v4m0 67v2m0 3v1m0 1v1m1-123v1m0 11v3m0 1v18m0 8v4m1-48v3m0 25v4m0 8v8m0 75v2m1-125v3m0 32v2m0 87v1m1-152v1m0 26v3m0 35v2m0 88v1m1-159v1m0 2v1m0 26v2m0 40v1m1-42v2m0 39v2m0 84v1m1-156v1m0 26v3m0 41v3m1-77v1m0 2v1m0 26v3m0 42v3m1-47v2m0 39v4m0 83v1m1-160v1m0 2v1m0 26v2m0 43v4m1-48v2m0 39v4m0 83v1m1-129v2m0 39v4m1-45v2m0 39v4m1-46v3m0 40v4m1-77v1m0 2v1m0 26v3m0 41v4m1-78v1m0 2v1m0 26v2m0 43v3m1-46v1m0 38v4m1-72v1m0 26v3m0 40v4m1-74v1m0 26v3m0 40v4m1-45v1m0 38v4m1-72v1m0 26v3m0 40v4m0 77v1m1-125v3m0 40v4m0 77v1m1-125v3m0 40v4m0 75v1m1-123v3m0 40v4m1-77v1m0 2v1m0 26v3m0 41v4m0 73v1m0 5v1m1-155v1m0 26v3m0 41v4m1-46v1m0 39v4m1-45v2m0 40v4m0 73v1m1-151v1m0 2v1m0 26v1m0 46v4m0 67v1m0 6v3m0 4v1m1-163v1m0 2v1m0 26v2m0 44v4m0 67v1m0 7v3m1-128v3m0 41v4m1-48v3m0 41v5m0 67v1m1-117v3m0 42v4m0 78v1m1-127v2m0 40v5m1-78v1m0 2v1m0 26v2m0 45v5m0 73v3m1-127v2m0 40v5m1-48v3m0 42v5m0 61v1m1-111v2m0 42v4m0 50v6m0 5v1m1-111v3m0 42v5m0 42v6m0 6v1m1-104v2m0 41v5m0 36v8m0 7v3m1-103v3m0 43v5m0 24v9m0 12v3m0 7v1m0 20v1m1-155v1m0 26v3m0 44v9m0 7v11m0 18v2m0 10v1m0 22v1m1-127v2m0 44v22m0 14v5m0 12v2m1-102v3m0 73v4m0 15v2m0 30v1m1-158v1m0 2v1m0 26v3m0 67v4m0 15v2m0 34v3m1-126v1m0 58v3m0 18v3m0 42v1m1-127v2m0 52v3m0 15v2m0 50v3m1-126v1m0 45v3m0 13v2m0 59v3m0 4v1m1-133v3m0 40v2m0 10v3m0 74v3m1-135v3m0 34v2m0 9v3m0 82v2m1-135v3m0 29v2m0 8v2m1-74v1m0 2v1m0 26v3m0 24v2m0 7v2m1-38v3m0 19v1m0 9v2m1-34v3m0 16v1m0 7v2m1-56v1m0 26v3m0 19v1m1-21v1m0 9v1m0 6v2m1-51v1m0 2v1m0 26v2m0 8v1m0 5v1m1-44v1m0 26v3m0 3v1m0 5v1m1-40v1m0 29v1m0 5v1m1-11v1m0 6v2m1-12v1m0 7v1m1-12v1m1-21v1m0 25v1m0 2v1m1-30v1m0 27v2m1-33v1m0 2v1m0 22v1m0 3v2m1-8v1m0 6v2m1-11v1m0 8v2m1-2v2m1-30v1m0 15v1m0 10v3m1-15v1m1-19v1m0 2v1m0 26v3m1-33v1m0 2v1m0 12v1m0 13v2m1-2v3m1-18v1m0 14v3"/><path stroke="#00ff3e" d="M237 210v1m0 2v1m0 26v1m1-31v1m0 2v1m0 26v1m0 126v1m1 4v3m1-51v1m0 47v3m1-165v1m0 2v1m0 26v1m0 82v1m0 5v1m0 37v1m1-158v1m0 2v1m0 26v1m0 82v2m0 7v1m0 26v2m0 3v1m1-155v1m0 2v1m0 26v2m0 80v2m0 12v22m0 4v2m0 4v4m1-162v1m0 111v1m1-82v2m0 74v4m1-2v4m1-113v1m0 2v1m0 26v1m0 80v5m1-116v1m0 2v1m0 26v2m0 73v4m1-109v1m0 2v1m0 26v1m0 72v4m1-107v1m0 2v1m0 26v2m0 70v4m1-103v1m0 26v3m0 73v3m1-115v4m0 109v4m1-111v1m0 2v1m0 26v3m0 76v5m1-114v1m0 109v4m1-114v1m0 2v1m0 26v1m0 75v4m1-110v1m0 2v1m0 105v4m1-113v1m0 2v1m0 26v3m0 73v4m2-14v4m1-100v1m0 2v1m0 102v4m1-1v5m1-4v4m1-114v1m0 105v4m1-110v1m0 2v1m0 26v2m0 72v4m1 1v4m1-113v1m0 2v1m0 102v4m1-110v1m0 2v1m0 100v4m1-108v1m0 2v1m0 26v1m0 72v4m1-107v1m0 2v1m0 26v2m0 73v4m1-109v1m0 2v1m0 104v4m1-1v6m1-4v6m1-7v6m1-10v4m1-112v1m0 104v4m1-2v4m1-111v1m0 107v4m1-112v1m0 2v1m0 26v1m0 74v4m1-109v1m0 2v1m0 103v4m1-1v5m1-5v5m1-115v1m0 107v4m1-3v4m1-113v1m0 2v1m0 103v4m1-111v1m0 108v5m1-114v1m0 2v1m0 26v1m0 75v4m1-110v1m0 2v1m0 26v1m0 72v4m1-107v1m0 103v3m1-107v1m0 2v1m0 26v3m0 67v4m1-101v1m0 26v3m0 66v4m1-103v1m0 103v4m1-108v1m0 2v1m0 26v1m0 74v4m1-109v1m0 2v1m0 26v2m0 73v4m1 1v4m1-114v1m0 2v1m0 96v4m1 5v4m1-113v1m0 104v4m1-109v1m0 2v1m0 26v3m0 67v4m1-104v1m0 2v1m0 26v2m0 61v5m1-98v1m0 2v1m0 99v4m1-107v1m0 2v1m0 26v2m0 72v4m1 0v4m1-112v1m0 2v1m0 26v2m0 72v4m1 0v4m1-112v1m0 2v1m0 26v1m0 73v3m1-107v1m0 2v1m0 26v1m0 72v4m1-107v1m0 2v1m0 26v1m0 74v3m1-108v1m0 2v1m0 26v2m0 72v4m1-108v1m0 2v1m0 101v3m1-108v1m0 2v1m0 26v2m0 70v3m1-105v1m0 2v1m0 26v1m0 72v4m1-107v1m0 2v1m0 100v4m1-108v1m0 2v1m0 26v1m0 73v4m1-114v6m0 4v26m0 15v1m0 32v3m0 6v4m0 19v2m1-119v1m0 116v3m1-113v1m0 2v1m0 26v2m0 73v4m1-109v1m0 107v4m1-112v1m0 2v1m0 26v2m0 73v4m1-109v1m0 2v1m0 26v1m0 74v4m1 0v4m1-5v4m1-112v1m0 2v1m0 101v4m1-109v1m0 2v1m0 26v1m0 75v2m2 5v2m0 3v30m1-148v1m0 104v1m0 6v5m1-15v1m0 6v9m1-11v2m0 2v6m1-117v1m0 105v1m0 2v5m1-114v1m0 2v1m0 26v3m0 64v1m0 5v6m1-109v1m0 2v1m0 93v1m0 10v4m1-18v1m0 2v1m0 12v4m1-114v1m0 2v1m0 26v1m0 62v1m0 3v1m0 12v6m1-116v1m0 2v1m0 26v1m0 117v1m1-149v1m0 2v1m0 86v1m0 50v1m0 12v1m1-125v2m0 103v1m0 26v3m1-138v1m0 5v6m0 32v11m1-62v1m0 12v1m1-9v1m0 4v1m1-31v1m1-1v1m0 2v1m0 8v1m0 6v2m2-7v1m2-12v1m0 1v1m1 2v2m1-4v1m2-9v2m1-4v2m0 5v1m1-9v1m1-3v1m0 168v2m1-39v1m0 1v1m0 8v1m0 1v1m1-144v1m0 140v1m0 1v1m0 23v1m1-167v1m2 157v1m1-161v1m0 159v1m3-162v1m1 6v1m0 2v1m0 145v2m0 3v1m2-13v6m0 4v2m0 5v2m1-11v1m0 3v1m1-162v1m0 160v1m1-5v1m0 3v1m1-159v1m0 68v16m0 6v8m0 15v11m1-127v1m0 154v2m1 3v1m1-158v1m0 2v1m0 45v1m0 41v9m0 36v6m1-144v1m0 87v1m0 58v6m0 4v2m0 5v2m1-163v1m0 88v1m1-92v1m0 2v2m0 86v1m0 66v1m1-7v1m0 2v1m1-149v1m0 144v1m0 2v1m0 6v1m0 2v1m1-159v1m0 150v1m2-151v1m1 1v1m0 125v1m0 9v6m0 4v2m0 5v2m1-154v1m0 146v1m1-155v1m1-1v1m0 8v1m0 144v1m1-155v1m0 2v1m0 150v1m1-155v1m0 2v1m0 4v1m0 145v1m1-145v1m0 5v1m1 2v1m2-5v1m0 146v1m1-143v1m0 5v1m0 3v1m1-31v1m1-1v1m0 2v1m0 21v1m0 10v1m1 4v1m1-4v1m0 9v2m1-50v1m0 42v1m0 14v2m55-15v2m0 44v3m1-101v7m0 4v26m0 5v9m0 7v14m0 5v17m1-94v7m0 4v26m0 5v10m0 5v15m0 4v18m1-82v3m0 1v2m0 2v2m0 2v3m0 1v3m0 2v2m0 7v2m0 2v3m0 8v2m0 2v3m0 2v3m0 6v1m0 1v4m0 2v3m0 3v4m1-49v1m0 25v1m1-40v1m0 3v1m0 9v1m0 3v1m0 9v2m0 3v2m0 9v2m0 4v2m0 4v2m1-49v1m0 13v1m0 18v1m0 21v1m0 3v4m5-103v7m0 4v23m0 6v7m0 7v12m0 6v16m1-36v1m0 13v1m0 3v1m0 17v1m0 3v1m0 3v4m1-52v1m0 1v1m0 1v1m0 16v1m0 21v1m0 6v4m1-55v5m0 1v1m0 10v1m0 4v2m0 15v1m0 4v6m3-60v3m0 24v1m0 21v1m0 1v1m0 13v2m1-39v1m0 37v1m1 1v2m1-3v2m1-4v3m1-2v1m1-2v2m1-97v1m0 2v1m0 26v3m0 61v2m1 1v2m1-99v1m0 2v1m0 26v3m0 61v2m1 0v2m1-2v2m1-98v1m0 2v1m0 26v3m0 61v2m1 1v3m1-3v2m1-3v2m1-105v1m3 6v1m0 2v1m0 26v3m0 24v2m0 34v2m1-95v1m0 2v1m0 47v1m1-10v2m0 11v2m1-10v1m1-16v1m0 1v1m0 4v1m8-40v1m0 2v1m1 22v1m3-1v1m1-2v1m1-5v1m1 140v1m1-141v2m0 131v3m0 6v1m1-144v1m0 132v1m0 7v3m1-151v1m0 4v1m0 135v2m0 6v2m1-154v1m0 143v2m0 5v3m1-157v1m0 153v3m1-162v1m0 1v1m0 7v1m0 148v3m1-155v1m0 151v3m1-166v1m0 6v3m0 153v3m1-160v2m0 148v2m0 5v3m1-166v1m0 155v2m0 5v3m1-169v1m0 165v3m1-172v1m0 168v3m1-165v1m0 161v3m1-170v1m0 159v2m0 5v3m1-172v1m0 168v3m1-10v2m0 5v3m1-2v2m1-11v1m0 2v1m0 4v3m1-165v1m0 153v1m1 1v2m1-158v1m0 154v3m1 4v1m1-1v3m1-47v1m1-119v1m0 58v9m4-74v1m2 0v1m0 1v1m1-2v1m2 2v1m2 5v1m1-2v1m1 1v1m0 1v1m1-9v1m0 2v1m1 8v1m1 0v1m1-1v1m0 1v1m0 111v1m1-128v1m0 13v1m0 111v2m1-112v1m0 109v2m1-111v1m0 1v1m0 106v1m1-109v1m0 109v1m1-109v1m0 1v1m0 108v1m0 7v3m0 6v1m0 2v1m1-152v1m0 14v1m0 2v2m0 114v2m0 6v2m0 4v4m1-152v1m0 2v1m0 17v1m0 3v1m0 114v2m0 2v2m0 3v2m0 3v1m1-137v1m0 7v1m0 121v2m0 7v1m1-158v1m0 27v1m0 1v1m0 124v3m1 4v3m1-133v1m1 0v1m1-8v1m1 11v1m1-9v1m2 6v2m0 10v1m1 0v1m1-5v1m0 3v8m1-3v10m1-2v8m3-71v1m0 2v1m3-4v1m0 2v1m0 26v1m1-31v1m0 2v1m0 26v1m1-31v1m0 2v1m1-4v1m0 2v1m0 26v1m1-31v1m0 2v1m0 128v1m1-133v1m0 2v1m0 80v17m0 33v3m0 26v2m1-165v1m0 2v1m0 79v11m0 2v16m0 24v3m0 23v3m1-165v1m0 83v10m0 8v17m0 19v2m0 22v3m1-165v1m0 2v1m0 78v8m0 26v9m0 14v1m0 15v2m0 5v3m1-165v1m0 2v1m0 78v8m0 30v8m0 12v1m0 14v2m0 5v3m1-172v5m0 32v3m0 45v5m0 48v4m0 5v1m0 14v3m1-127v2m0 48v6m0 45v4m0 5v1m0 13v2m0 5v3m1-165v1m0 2v1m0 28v1m0 48v6m0 48v4m0 3v1m0 1v1m0 4v1m0 5v2m0 5v3m1-165v1m0 2v1m0 26v1m0 50v7m0 49v2m0 4v1m0 1v1m0 3v1m0 5v2m0 5v3m1-165v1m0 2v1m0 77v6m0 52v1m0 4v1m0 1v1m0 3v1m0 4v2m0 5v3m1-165v1m0 2v1m0 68v15m0 53v1m0 4v1m0 4v1m0 4v2m0 5v3m1-165v1m0 2v1m0 26v1m0 43v3m0 5v3m0 56v2m0 2v1m0 9v3m0 4v1m1-163v1m0 2v1m0 74v8m0 56v1m0 3v1m0 8v2m0 5v3m1-165v1m0 2v1m0 26v1m0 48v5m0 59v1m0 11v3m0 4v1m1-133v1m0 50v5m0 58v1m0 2v1m0 2v1m0 3v3m0 5v3m1-161v16m0 59v5m0 61v1m0 10v2m0 4v1m1-168v5m0 4v19m0 55v5m0 63v1m0 1v1m0 5v1m0 2v1m0 4v1m1-163v1m0 2v1m0 41v1m0 34v5m0 61v1m0 10v1m0 4v3m1-165v1m0 2v1m0 26v2m0 46v5m0 64v2m0 13v1m0 1v1m1-165v1m0 2v1m0 58v8m0 8v5m0 64v2m0 13v1m1-163v1m0 2v1m0 63v1m0 6v9m0 70v1m0 1v1m0 6v3m1-165v1m0 69v1m0 83v3m0 5v3m1-92v1m0 81v3m0 4v3m1-165v1m0 2v1m0 26v1m0 43v2m1-76v1m0 76v2m0 77v2m0 4v3m1-87v3m0 76v1m0 4v3m1-165v1m0 2v1m0 26v1m0 45v4m0 77v1m0 4v1m1-84v4m0 74v1m0 4v3m1-165v1m0 2v1m0 26v1m0 45v3m1-79v1m0 2v1m0 26v1m0 45v4m0 82v1m1-163v1m0 2v1m0 26v1m0 45v3m1-79v1m0 2v1m0 73v3m0 82v1m1-85v3m0 81v3m1-87v4m0 80v3m1-165v1m0 2v1m0 26v2m0 43v3m1-78v1m0 76v3m0 82v3m1-165v1m0 76v3m0 77v1m0 4v3m1-165v1m0 2v1m0 26v2m0 43v3m0 79v1m1-158v1m0 76v4m0 72v1m0 1v3m0 4v3m1-165v1m0 2v1m0 73v3m0 75v3m0 4v1m0 1v1m1-165v1m0 2v1m0 73v4m0 74v3m0 4v3m1-165v1m0 2v1m0 73v4m0 74v3m0 4v1m0 1v1m1-87v4m0 73v2m0 5v3m1-165v1m0 77v4m0 73v3m0 4v3m1-165v1m0 2v1m0 26v2m0 44v4m0 70v1m0 4v3m1-158v1m0 2v1m0 26v1m0 46v4m0 68v1m0 5v3m0 4v1m1-82v5m0 77v2m1-85v5m0 77v3m1-165v1m0 2v1m0 74v4m0 73v3m0 4v1m1-163v1m0 2v1m0 75v4m0 72v3m0 4v3m1-165v1m0 2v1m0 75v5m0 57v1m0 3v1m0 9v2m0 5v3m1-165v1m0 2v1m0 26v1m0 47v4m0 73v3m0 4v1m1-81v5m0 48v3m0 5v1m0 18v3m1-165v1m0 2v1m0 26v1m0 47v5m0 59v1m0 12v3m1-158v1m0 2v1m0 76v4m0 46v7m0 18v3m0 4v3m1-165v1m0 2v1m0 26v1m0 48v5m0 40v5m0 6v1m0 19v3m0 4v1m1-163v1m0 2v1m0 76v5m0 29v8m0 33v3m0 4v3m1-165v1m0 2v1m0 26v1m0 48v6m0 20v10m0 18v1m0 3v1m0 17v3m0 4v1m1-163v1m0 2v1m0 77v24m0 24v2m0 4v1m0 19v2m0 5v3m1-165v1m0 85v7m0 31v2m0 6v2m0 21v2m0 5v3m1-165v1m0 2v1m0 26v1m0 87v3m0 8v1m0 25v3m0 4v1m1-163v1m0 2v1m0 106v4m0 10v1m0 30v2m0 5v3m1-61v4m0 7v4m0 43v3m1-165v1m0 2v1m0 26v2m0 62v4m0 11v3m0 43v2m0 5v3m1-165v1m0 2v1m0 26v1m0 57v4m0 7v4m0 59v3m1-165v1m0 2v1m0 26v2m0 49v4m0 5v4m0 69v2m1-165v1m0 2v1m0 71v10m1-85v1m0 2v1m0 65v3m0 2v4m1-78v1m0 2v1m0 60v8m1-13v7m1-66v1m0 2v1m0 49v3m0 3v3m1-62v1m0 2v1m0 46v1m0 3v3m1-57v1m0 44v7m1-52v1m0 2v1m0 26v2m0 11v1m0 4v1m1-8v4m1-45v1m0 36v5m1-42v1m0 29v2m0 2v5m1-39v1m0 2v1m0 31v1m1-36v1m0 2v1m0 23v2m0 4v1m1-34v1m0 2v1m0 20v1m1-25v1m0 30v1m1-32v1m0 29v1m1-13v1m1-19v1m0 2v1m0 26v1m1-31v1m0 2v1m0 26v1m1-31v1m0 2v1m0 16v1m0 9v1m1-31v1m1 2v1m0 26v3m3-33v1m0 2v1m0 130v1m1-135v1m0 2v1"/><path stroke="#00ff2f" d="M237 365v3m0 4v1m1-8v2m0 5v3m2-47v1m1 36v2m0 5v3m1-50v1m0 4v2m1-8v1m0 9v2m0 22v4m0 2v1m1-42v1m0 12v28m0 4v4m1-162v1m0 2v1m0 26v1m0 80v3m1-83v2m0 80v6m1-3v7m0 8v18m0 2v3m0 4v4m1-53v4m1-6v4m1-5v4m1-110v1m0 108v5m1-82v1m0 78v5m1-2v10m0 17v7m0 4v2m0 4v4m1-48v10m0 18v6m0 4v2m0 4v4m1-52v5m1-2v5m1-8v5m1-122v1m1 37v2m0 67v4m1 6v4m1 0v28m0 10v2m0 5v2m1-47v22m0 16v2m0 4v4m1-52v5m1-7v4m1 1v8m1-11v5m1-7v4m1-5v4m1-2v4m1-1v6m1-1v28m0 15v2m1-43v25m0 5v4m0 7v2m1-44v26m0 6v3m0 7v2m1-50v7m1-10v5m1-3v5m1-4v6m1-9v5m1-3v4m1 0v27m1-27v27m1-30v6m1-5v7m1-9v6m1-3v25m0 13v2m1-44v5m1-8v4m1-4v4m1-7v4m1-108v1m0 102v4m1 1v4m1-3v4m1-4v5m1 0v26m0 19v3m1-132v1m0 1v1m0 71v4m1 5v25m0 8v2m0 11v2m1-52v4m1-9v4m1-10v4m1 5v4m1-3v4m1 0v6m1-10v4m1 0v6m1-11v4m1-4v4m1-3v5m1-5v4m1-4v4m1-7v4m1-2v4m1-3v4m1-4v4m1-16v2m0 14v3m1-79v3m0 74v2m1-6v5m1-2v5m1-8v5m1-5v5m1-1v3m1-4v2m1-5v3m1-4v3m1 4v33m1-37v2m0 35v1m1-43v1m0 3v2m0 5v13m1-22v1m0 9v26m1-27v25m1-43v1m0 5v1m0 8v20m1-25v5m1-13v1m0 10v5m1-22v2m0 17v15m0 31v2m1-46v13m0 29v4m1-131v2m0 58v1m0 57v1m1-120v3m0 59v1m0 47v1m0 14v3m0 4v1m1-29v1m1-107v2m0 9v5m0 3v24m1-50v1m0 6v2m2-16v1m1 3v1m3-12v1m0 4v1m2-9v1m1-5v1m4-2v1m0 157v1m1-159v2m1-3v1m0 138v1m1-141v1m0 128v1m0 10v1m0 25v2m1-3v1m1-168v1m0 159v3m1-165v1m1 163v1m1-1v1m1-3v3m1-1v1m1-164v1m1-1v1m0 160v3m1-10v1m0 2v1m0 6v1m0 2v1m1-169v1m0 1v1m3 50v19m0 30v15m0 11v14m1-139v1m0 157v1m2-72v1m0 3v1m0 44v1m0 6v1m1-143v1m0 89v1m0 53v1m0 6v1m0 2v1m0 6v1m0 2v1m1-5v1m2-161v1m0 151v2m0 3v1m1-6v2m0 3v1m2-152v1m0 153v1m1-1v1m1-10v1m0 2v1m0 6v1m0 2v1m1-162v1m1 154v3m1-154v1m1 2v1m1 4v1m1 2v1m0 139v1m0 1v1m1-146v1m0 142v3m1-138v1m0 141v1m1-147v1m0 6v1m0 139v2m1-144v1m1 1v1m1 2v1m0 8v1m1-3v2m0 4v2m1-2v1m0 7v1m1-4v1m0 11v2m55-58v1m0 2v1m0 26v1m0 16v1m0 1v1m0 16v1m0 1v1m0 19v1m0 5v4m1-54v2m0 4v1m0 14v1m0 3v1m0 22v1m1-48v1m0 45v2m1-49v1m0 4v1m0 14v1m0 21v1m0 4v3m1-46v1m0 43v2m1-101v1m0 31v1m0 3v1m0 7v1m0 5v1m0 4v1m1-49v1m0 2v1m0 92v3m5-72v1m0 12v1m0 5v1m0 12v1m0 4v1m0 16v1m0 4v5m1-63v1m0 15v1m0 48v4m1-97v1m0 2v1m0 27v2m0 62v4m1-54v1m0 12v1m0 21v1m0 9v4m1-2v3m1-102v1m0 98v3m1-36v1m0 37v3m1-3v2m1 1v2m1-3v2m1-3v2m1-3v3m1-3v2m1-3v2m1 1v2m1-4v1m1 0v2m1-2v2m1-4v2m1 2v2m1-3v2m1-3v2m4-5v2m1-45v3m1-11v1m0 8v2m1-17v1m0 7v1m1-12v1m0 2v1m1-9v1m0 4v1m7-9v1m0 3v2m5-10v1m1 0v1m1-5v1m0 2v1m0 139v2m1-147v1m0 143v2m1-148v1m0 3v1m0 136v1m2-141v1m1-3v1m1-4v1m1-13v1m0 7v2m1-5v1m1-10v1m1-4v1m1 6v1m0 2v1m7 152v1m1 5v3m1-2v2m2-2v2m2-23v1m0 14v1m0 6v1m5-172v1m1 0v2m1 0v1m1 0v2m0 1v1m1-3v1m1 4v1m1-4v1m1 3v1m1-2v1m0 1v2m1 0v1m1 0v1m0 1v1m1-1v2m1 0v1m0 115v1m1-115v1m0 113v1m1-114v2m0 111v1m1-112v1m1 0v1m0 108v1m1-109v2m0 117v11m0 2v3m0 4v4m1-141v1m0 116v1m0 10v2m0 3v1m1-138v1m0 3v1m0 1v1m0 112v3m0 1v2m0 12v1m1-139v1m0 3v1m0 1v1m0 119v2m1-125v6m0 130v2m0 5v3m1-145v1m0 128v2m0 11v3m1-136v2m3 4v1m1-7v1m3 9v1m1 3v1m15 50v2m1-2v8m1-12v26m0 24v1m1-51v30m0 21v1m1-59v8m0 36v4m0 10v2m0 19v3m1-165v1m0 2v1m0 26v1m0 56v45m0 10v2m1-114v2m0 55v48m0 8v1m1-56v49m0 7v1m1-58v52m0 6v1m1-59v15m0 25v13m0 6v1m1-70v5m0 3v8m0 47v1m0 5v2m0 15v2m1-79v8m0 40v8m0 5v2m1-65v6m0 50v3m0 4v1m0 1v1m0 13v2m1-165v1m0 2v1m0 82v7m0 43v8m1-151v7m0 30v3m0 51v6m0 53v2m0 3v1m0 5v1m0 8v2m1-142v7m0 53v5m0 56v2m0 5v1m0 4v1m0 6v2m1-135v3m0 52v6m0 42v13m0 3v1m1-67v5m0 51v8m0 2v1m0 7v1m0 5v1m1-81v4m0 54v6m0 2v1m0 5v1m0 7v2m1-97v6m0 9v5m0 55v7m0 6v1m1-86v2m0 5v9m0 57v4m0 9v1m1-84v2m0 9v3m0 54v6m0 6v1m1-79v1m0 79v2m0 4v3m1-86v2m1 0v2m0 63v2m0 4v1m0 3v1m1-77v4m0 79v2m1-82v3m0 55v7m0 4v1m1-74v4m0 64v1m0 9v1m0 4v3m1-85v3m0 74v1m0 5v2m1-86v4m0 74v1m0 4v3m1-85v4m0 73v1m0 5v2m1-84v4m0 72v1m1-76v4m0 66v1m1-75v4m0 80v3m1-85v4m0 73v1m1-78v4m0 72v1m1-79v4m0 74v1m0 5v3m1-84v3m1-4v4m0 68v1m0 10v1m1-83v3m0 60v4m1-67v4m0 59v4m0 15v1m1-82v4m0 59v3m1-66v4m0 64v1m1-71v4m0 78v3m1-84v4m0 78v2m1-79v4m0 50v5m0 2v1m1-63v5m0 51v4m1-63v5m0 54v3m0 2v1m0 16v2m1-82v5m0 52v3m1-59v5m0 50v2m0 1v1m1-61v5m0 52v2m0 3v1m0 18v2m1-78v7m0 35v6m0 3v3m1-58v5m0 44v6m0 24v3m1-81v6m0 36v4m1-46v7m0 25v8m0 12v1m0 2v1m0 23v2m1-80v9m0 5v15m0 21v1m0 2v1m1-54v20m0 29v1m0 1v1m0 26v2m1-34v4m1-9v6m1-11v3m0 2v3m0 34v2m1-51v10m1-16v7m1-17v11m1-17v7m1-14v5m2-18v2m3-18v3m1-8v3m2-10v1m0 2v1m1-3v1m2-14v1m1 0v2m1-6v1m1 2v1m1-11v1m0 5v1m0 1v1m1-11v1m1 4v1m1-9v1m0 5v1m1-3v1m2-8v1m1-15v1m0 12v1m3-3v1m0 3v1"/><path stroke="#00ff21" d="M237 373v2m3-50v1m1-2v1m1 1v1m0 2v1m0 35v3m0 4v3m2-40v1m0 28v1m1-41v2m0 12v21m0 2v3m0 4v4m1-162v1m0 2v1m0 26v1m0 88v3m0 7v26m0 3v4m1-39v1m0 6v1m0 18v2m0 3v1m1-42v6m1-8v4m1-5v4m1 0v8m0 17v4m1-143v1m0 2v1m0 26v2m0 84v10m0 13v10m0 2v3m0 4v4m1-38v2m0 13v2m0 7v4m0 2v1m1-31v2m0 14v2m0 6v4m0 2v1m1-40v11m0 17v5m0 4v2m0 4v4m1-44v19m0 6v11m0 4v4m1-47v1m2-116v1m0 2v1m0 26v1m0 73v3m1 7v5m1 23v2m0 7v1m0 2v1m0 3v1m0 2v1m1-26v1m0 5v4m0 5v1m0 2v1m1-40v21m0 7v3m0 7v1m0 4v4m1-50v6m1 3v28m0 10v3m1-47v32m0 14v1m1-50v5m1-6v5m1-3v9m1-4v27m0 14v3m1-14v5m0 6v1m1-16v1m0 3v1m1-1v2m0 3v1m0 5v1m1-41v25m0 4v6m0 7v1m1-48v28m1-26v28m0 3v2m0 2v3m0 7v1m1-44v26m0 3v2m0 2v3m0 5v3m1-48v27m1-26v26m1 1v1m0 7v3m0 8v1m1-20v1m0 6v4m0 8v1m1-44v23m0 11v1m0 8v1m1-42v22m0 9v3m0 5v3m1-45v24m0 10v3m0 6v2m1-23v2m0 10v1m0 8v2m1-47v25m0 12v2m0 7v1m1-51v5m1-5v5m1-8v4m1-5v4m1 1v5m1-4v7m1-6v25m0 21v1m1-14v5m0 6v1m1-128v1m0 76v4m0 9v19m0 7v2m0 9v4m1-24v2m0 3v3m0 2v1m0 9v1m0 2v1m1-49v7m1-12v3m1-9v4m1 5v5m1-4v5m1 1v10m0 23v3m0 4v4m1-50v6m1 0v17m0 4v15m0 4v4m1-51v6m1-6v4m1-2v6m1-7v6m1-6v6m1-9v4m1-2v5m1-4v6m1-6v6m1-88v3m0 65v2m0 19v3m1-89v3m0 3v6m0 1v31m0 42v3m1-8v7m1-4v4m0 8v10m1-25v5m0 10v10m1-25v3m0 10v21m0 4v2m1-38v1m0 6v31m1-40v2m0 5v33m1-42v1m1-2v1m0 7v16m1-28v1m0 2v2m0 2v1m0 33v2m1-43v1m0 2v1m0 38v1m0 9v1m1-53v3m1-3v1m0 36v2m1-44v1m0 39v2m1-44v5m0 29v6m1-38v1m0 11v18m1-34v1m0 18v15m0 28v2m1-33v2m0 27v2m1-31v1m0 17v3m1-58v1m0 57v1m0 5v2m0 4v3m1-74v1m0 1v2m0 8v4m0 32v1m0 23v2m1-34v1m1-88v3m1-21v2m1-11v1m1 5v1m5-18v1m0 3v1m1-8v1m0 3v1m2-4v1m3 150v2m0 5v2m1-166v1m1-2v1m0 128v1m1-131v1m1-2v1m0 167v2m1-171v1m1-1v1m0 160v3m0 4v1m1-8v2m0 5v3m1-10v2m0 5v3m1-3v3m1-10v2m0 5v3m1-10v3m1 4v3m1-16v2m1 4v3m1-163v1m0 159v3m0 4v1m1-8v3m1-164v1m0 140v5m2 15v3m1-74v3m1 62v2m0 3v1m1-159v1m0 158v2m0 5v3m1-10v3m0 4v1m1-163v1m1-3v1m1 0v1m0 155v3m0 4v1m1-8v2m0 5v3m1-10v2m0 5v3m1-165v1m0 4v1m0 143v2m1 4v3m1-151v1m0 118v1m0 3v2m0 30v3m1-162v1m0 151v3m0 4v1m1-153v1m0 144v3m0 4v1m1-154v1m0 145v3m1-147v1m0 2v1m0 141v1m0 5v3m1-147v1m0 143v1m1-149v1m0 148v2m1-148v1m0 4v1m1 2v1m1-2v1m0 7v1m1-6v1m0 6v1m1-5v2m0 3v4m1 1v4m0 2v1m1-2v11m55-25v2m0 57v1m0 7v3m1-67v1m0 11v1m0 40v1m0 3v1m0 1v3m1-96v1m0 2v1m0 45v1m0 15v1m0 2v1m0 24v5m1-98v1m0 2v1m0 30v1m0 55v1m0 3v3m0 1v1m1-74v1m0 73v1m1-106v6m0 4v1m0 3v1m0 3v1m0 3v1m0 3v1m0 13v1m0 27v2m0 15v1m0 12v2m1-50v1m0 18v1m0 21v1m0 13v2m5-56v1m0 45v4m1-95v1m0 2v1m0 27v2m0 64v3m1-70v1m0 11v1m0 16v1m0 21v1m0 17v2m1-101v1m0 2v1m0 26v3m0 61v4m1-3v3m1-3v3m1 2v2m1-3v2m1 1v3m1-4v2m1-3v2m1-2v2m1-3v2m1-3v2m1 1v3m1-8v1m0 1v1m1 1v3m1-3v2m1-4v2m1 2v1m1-2v1m1-2v1m1-36v11m3 21v2m1-44v4m1-13v7m1-14v7m1-10v2m1-7v1m0 2v1m8-7v1m1-2v1m1-3v1m1-2v1m2-3v1m1-1v1m1-2v1m1 133v2m1-139v1m1-7v1m1-4v1m1-4v1m0 4v1m1-5v1m1-4v1m1-8v1m0 5v1m1-10v1m0 3v1m0 1v1m0 2v1m1-9v1m1 4v1m6 154v1m1-1v1m0 1v1m1 4v1m4-8v2m0 5v2m1-21v5m0 4v2m0 4v4m1-37v1m1-2v1m1-1v1m1-1v1m1-1v1m2-1v1m0 4v1m1-131v1m0 124v1m1-1v1m1-1v1m0 4v1m1-6v1m1-1v1m0 4v1m1-6v1m0 4v1m1-121v1m0 114v1m1 0v1m1 3v2m1-2v2m1-2v1m2-2v1m0 9v11m0 2v3m0 4v4m1-33v2m0 18v2m1-14v1m1-122v1m0 5v1m0 116v1m1-123v3m0 3v2m0 130v3m1-133v1m1 1v1m3-4v1m3 6v1m0 9v1m1-7v1m0 9v1m3 1v1m0 1v1m18-50v1m0 2v1m0 87v36m5-25v25m1-34v47m1-46v40m1-44v50m0 8v1m1-56v43m0 12v2m1-60v16m0 15v22m0 7v1m0 4v1m1-156v1m0 87v10m0 29v17m1-53v42m0 22v2m1-69v10m0 25v16m0 13v1m0 2v1m1-69v8m0 32v14m0 9v1m0 5v2m1-70v7m0 34v14m0 7v1m0 6v1m1-85v5m0 9v7m0 37v13m0 4v4m0 1v1m1-78v1m0 4v4m0 3v8m0 34v12m0 6v6m1-77v2m0 61v8m0 3v1m0 3v1m1-75v1m0 54v13m0 2v2m0 2v1m1-73v2m0 50v11m0 2v1m0 2v1m1-68v2m0 54v8m0 4v1m0 3v1m1-71v4m0 42v9m0 7v4m0 1v1m0 2v1m1-74v4m0 50v10m0 1v1m0 2v2m1-70v4m0 51v11m0 2v2m1-70v4m0 54v7m0 3v2m1-69v4m0 57v3m0 4v1m1-68v4m0 55v4m0 4v1m1-67v4m0 49v10m0 2v1m0 1v1m0 3v1m1-76v4m0 57v5m0 4v1m0 4v1m1-74v4m0 52v9m0 3v1m1-69v4m0 55v5m0 7v1m1-74v4m0 68v2m1-72v4m0 54v6m1-64v4m0 52v8m1-64v5m0 46v9m0 4v1m1-64v4m0 46v9m0 7v1m1-66v5m0 44v10m1-59v4m0 47v11m1-64v4m0 54v4m1-61v4m0 50v7m0 2v1m1-59v9m0 30v11m0 5v2m1-57v8m0 31v12m0 5v1m1-60v6m0 41v7m0 3v1m1-57v7m0 38v7m0 3v1m0 1v1m1-57v9m0 32v9m0 4v2m1-58v8m0 37v7m0 2v3m1-50v35m0 12v2m1-55v9m0 29v6m0 6v1m0 2v1m1-52v15m0 12v9m0 11v1m0 2v1m1-50v25m1-22v5m0 37v2m1-3v1m3-12v2m13-80v1m6-19v2m2-3v1m3-12v1m5-5v1"/><path stroke="#00ff13" d="M242 327v2m1-4v1m0 7v1m0 31v3m0 4v3m1-51v1m0 9v1m0 30v3m0 4v3m1-49v1m0 9v2m0 21v2m0 3v1m1-33v1m0 5v1m0 26v3m1-34v1m0 4v1m0 25v3m0 4v3m1-46v4m0 9v2m0 3v9m0 5v3m1-39v6m0 18v6m0 7v2m1-40v7m0 18v5m1-22v7m0 7v3m0 4v3m0 6v2m1-28v1m0 10v2m0 10v2m0 3v1m1-17v1m0 16v3m0 4v3m1-31v1m0 4v1m0 15v3m0 4v3m1-39v1m0 6v3m0 6v1m0 5v4m0 2v1m1-18v1m0 4v1m0 11v4m1-42v1m1-84v11m0 3v43m1 17v4m1 8v24m0 7v5m0 3v4m1-18v1m0 5v1m0 4v3m0 4v3m1-28v1m0 3v1m0 4v1m0 8v3m0 4v3m1-29v1m0 5v1m0 3v1m0 5v1m0 1v1m1-37v30m0 10v4m1-4v1m0 3v1m1-16v2m0 10v2m1-44v29m0 15v1m1-46v29m0 16v1m1-40v24m0 14v2m1-17v1m0 2v5m0 5v1m1-14v1m0 1v1m0 5v1m0 8v3m1-18v1m0 5v1m0 5v1m0 2v3m1-3v3m1-5v1m1-19v2m0 3v6m1-4v2m0 9v1m1-15v1m0 2v2m0 3v1m1-14v2m0 8v3m0 5v3m1-21v1m0 9v3m0 6v2m1-13v1m0 12v3m1-18v2m0 13v3m1-24v1m0 9v1m0 1v1m0 6v1m1-19v1m0 4v4m0 3v1m1-14v1m0 7v2m0 3v1m0 4v1m1-10v1m0 3v1m0 4v1m0 2v3m1-25v2m0 7v3m0 8v1m1-45v23m0 7v3m0 2v3m0 7v1m1-46v23m0 6v4m0 2v3m0 5v3m1-50v5m1-6v4m1 2v24m0 3v5m0 2v3m0 4v4m1-42v21m0 3v9m0 5v4m1-23v2m0 6v5m0 6v2m0 1v1m1-22v1m0 21v3m1-53v6m0 2v1m0 19v1m0 5v1m0 2v2m1-9v1m0 6v1m0 12v3m1-45v15m0 9v5m0 9v4m1-51v6m1-11v3m0 22v6m0 5v6m0 5v1m0 4v4m1-46v21m0 4v8m0 3v2m0 4v4m1-45v11m0 23v3m0 4v4m1-34v2m0 17v4m0 3v1m0 2v1m1-40v17m0 4v15m0 4v4m1-27v1m0 2v1m0 15v4m1-41v15m0 10v7m0 2v3m0 4v4m1-47v16m0 12v5m0 4v2m0 4v4m1-43v14m0 5v16m0 4v4m1-44v13m0 9v14m0 4v4m1-44v12m0 11v13m0 4v4m1-49v7m1-4v13m0 13v6m0 4v2m0 4v4m1-44v10m0 13v13m0 4v2m1-42v7m0 15v9m0 2v3m1-154v1m0 2v1m0 118v1m1-129v6m0 4v26m0 15v1m0 31v4m0 6v3m0 32v1m1-2v1m0 10v7m1-18v1m0 31v1m0 4v1m1-40v1m0 7v2m0 10v16m1-38v2m0 5v3m0 21v4m0 2v1m1-38v1m0 4v1m0 31v1m1-35v1m1-8v1m0 5v30m0 2v1m1-40v1m0 4v2m1-10v1m0 2v2m0 36v1m3 13v1m1-59v1m0 57v1m2-67v1m0 33v5m1-38v2m0 31v2m1 15v1m0 12v3m1-19v1m0 15v1m1-70v1m0 9v4m0 47v2m1-49v1m0 8v5m0 17v1m1-6v1m2-112v1m0 2v1m0 5v2m1-9v1m1-10v1m2-5v1m0 3v1m1-7v1m3-5v1m1-2v2m1-6v1m1-1v1m7 161v3m1-2v2m1-172v1m4 168v3m1-172v1m1-1v2m0 159v1m1 7v3m1-2v2m1-171v2m0 127v6m0 1v1m0 31v3m2-170v1m0 159v3m0 4v1m0 1v1m1-170v2m0 165v3m1-170v1m2 1v1m1-1v2m0 164v2m1-166v1m0 157v1m1-1v1m1 5v2m2-165v1m1 153v1m1-149v1m0 155v3m2-160v1m0 2v1m0 154v2m1-157v2m0 153v2m1-154v1m0 150v3m1-153v2m1-1v1m0 149v2m2-147v1m0 2v1m1 0v3m1 0v1m0 2v2m0 1v1m1-4v1m0 4v1m1-2v1m1 11v2m56 2v1m0 18v1m0 21v1m0 12v3m0 3v2m0 1v4m0 2v12m0 1v5m0 9v5m0 6v7m1-162v1m0 2v1m0 26v2m0 64v4m1-70v2m0 14v1m0 40v1m0 2v1m0 8v3m1-72v1m0 14v1m0 2v1m0 48v1m0 1v2m1-37v1m0 21v1m0 13v1m1-68v1m0 25v1m0 10v1m0 2v1m1 28v1m0 4v7m0 1v11m0 1v6m0 9v5m0 5v7m2-18v5m0 5v6m0 7v1m3-165v1m0 2v1m0 28v1m0 8v1m0 18v1m0 2v1m0 18v1m0 2v1m0 9v4m1-70v1m0 11v1m0 1v1m0 18v1m0 21v1m0 15v1m0 4v22m0 13v1m0 9v1m0 1v1m0 9v3m1-61v12m0 2v6m0 1v1m0 1v1m0 10v1m0 1v2m0 6v6m0 6v4m1-103v1m0 21v1m0 14v3m1-108v1m0 104v4m1-108v6m0 7v1m0 3v2m0 3v1m0 3v1m0 4v1m0 8v2m0 3v2m0 9v1m0 4v1m0 6v1m0 4v2m0 4v2m0 10v2m0 4v1m0 6v3m1-43v1m0 21v1m0 21v4m1-5v3m1 1v15m0 1v3m0 10v2m0 7v1m0 1v3m0 7v4m1-56v10m0 1v2m0 1v4m0 23v2m0 9v2m1-55v4m1-4v3m1-4v2m1-3v2m1 2v10m0 12v1m0 10v2m0 11v1m0 1v1m0 9v2m1-65v3m1 1v3m1-4v3m1-5v2m1 2v2m0 11v2m0 11v2m0 10v5m0 8v10m1-63v1m0 38v4m0 10v10m2-171v6m0 4v26m0 3v11m0 3v18m0 11v4m3 19v1m2-55v1m4-18v1m6 0v2m1-4v1m1-2v1m1-1v1m1-2v1m1-2v1m1-2v1m1-3v1m1-3v2m1-4v1m0 1v1m1-5v1m0 1v1m1-5v1m0 2v1m1-7v1m0 3v1m1-8v1m0 1v2m1-7v3m0 114v1m0 4v1m3-132v1m0 1v1m1-4v1m2 128v2m1-2v1m1-1v2m1-2v1m1-1v2m1-2v1m1 32v1m1-34v2m1 37v3m3-44v2m1 25v1m0 2v1m1-26v1m0 1v3m0 1v1m0 7v2m1-12v3m1-3v1m2-2v2m1-7v1m1 5v1m1-131v1m2 2v1m0 126v1m2-1v1m1-1v2m1-3v1m1-4v2m1 3v1m0 6v10m0 4v2m0 5v2m1-30v1m0 6v10m0 4v2m0 5v2m1-31v2m1-4v1m1 0v3m0 5v1m0 11v2m1-20v1m0 5v1m0 16v1m1 0v3m1-3v3m0 4v1m1-1v3m2-141v3m1 1v1m1-7v1m0 8v1m2-5v1m1 9v1m33-38v1m0 2v1m0 102v15m0 28v1m1-147v1m0 26v3m0 65v29m0 22v1m0 5v1m2-58v25m0 27v1m0 5v1m1-62v32m0 25v1m1-58v34m0 22v2m1-59v37m0 21v1m1-76v4m0 15v34m1-51v1m0 8v8m0 34v10m0 8v3m0 1v1m0 1v1m1-73v1m0 9v8m0 26v10m0 13v2m0 2v1m1-69v1m0 6v8m0 26v9m0 14v2m0 2v1m1-68v2m0 5v1m0 37v9m0 8v4m0 1v1m1-64v10m0 22v10m1-45v5m0 37v8m0 12v2m0 2v1m0 2v1m1-70v5m0 38v8m0 11v2m0 2v1m1-67v5m0 41v8m0 7v3m0 2v1m1-66v4m0 44v9m0 3v1m0 2v1m0 1v1m1-65v4m0 43v8m0 4v1m0 2v1m0 1v1m1-64v5m0 36v8m0 10v2m1-65v4m0 45v8m0 5v1m0 2v1m0 1v1m1-66v5m0 39v8m0 9v3m0 1v1m0 2v1m1-69v4m0 43v8m0 5v1m0 2v4m1-69v4m0 52v6m0 5v1m1-66v5m0 41v8m0 6v1m0 3v1m1-65v5m0 39v8m0 8v1m1-60v6m0 32v8m0 16v1m1-63v6m0 31v9m0 13v1m1-58v7m0 28v9m0 13v1m0 1v1m1-61v8m0 29v10m1-49v6m0 38v10m0 4v1m0 2v1m1-61v8m0 32v10m0 7v2m1-49v30m1-31v31m0 16v1m1-53v15m0 9v17m0 11v1m1-51v38m0 11v1m1-47v32m1-35v37m2-35v29m0 13v2m1-36v12m0 21v2m1-3v2m18-94v1m4-16v1m2 0v1m6-17v1m1 2v1m1-2v1m1-2v1m3-3v1"/><path stroke="#00ff05" d="M240 327v1m1 0v1m4-2v2m0 6v1m0 29v3m0 4v3m1-42v1m0 3v1m0 34v3m1-37v1m1 2v1m0 2v3m0 9v1m0 7v1m0 6v1m1-41v1m0 16v1m0 6v1m0 5v1m1-31v2m0 14v2m0 5v2m0 6v2m1-25v2m0 4v1m0 10v1m0 4v1m0 2v1m1-28v1m0 8v1m0 18v3m0 4v3m1-39v1m0 10v1m1-12v1m0 6v1m0 1v1m0 2v1m1-12v1m0 4v1m0 3v1m0 4v1m0 13v3m0 4v3m1-27v1m0 23v3m1-18v1m0 4v2m0 4v4m1-163v1m0 4v26m0 14v3m0 43v6m1 15v5m1 27v1m0 4v2m0 5v3m0 6v1m1-20v1m0 3v1m1-3v1m0 2v1m1-14v1m0 3v1m0 5v1m0 3v1m0 3v3m0 4v3m1-13v3m1-6v1m0 13v2m1-16v1m0 12v3m1-19v1m0 2v1m0 10v1m1-16v1m0 14v1m1-13v4m0 7v1m0 2v1m1-1v3m1-19v1m0 11v1m1-14v1m1 12v1m1-5v1m0 4v1m0 2v3m1-21v1m0 8v1m0 7v1m1-18v1m0 1v1m0 7v1m0 7v3m1-21v1m0 10v1m0 2v1m0 3v3m1-22v1m0 5v2m0 3v1m0 7v3m1-23v1m0 19v3m1-22v1m0 3v2m0 4v1m0 6v1m1-18v1m0 2v1m0 6v1m0 6v1m1-11v1m0 8v1m0 2v3m1-19v1m0 8v1m0 2v1m0 3v3m1-23v1m0 4v2m0 13v3m1-24v1m1 6v1m0 5v1m0 7v3m1-26v1m0 5v1m0 3v2m0 9v1m1-22v1m0 9v2m1-34v23m0 5v4m0 2v3m0 5v3m1-47v25m0 5v3m0 4v2m0 5v3m1-13v2m1-8v1m0 9v1m0 8v1m1-17v1m0 5v1m0 9v1m1-11v1m1-35v2m0 25v1m0 5v1m0 10v3m1-25v1m0 9v1m0 2v2m0 2v1m1-23v1m0 7v1m0 9v2m0 2v1m0 4v1m1-46v18m0 9v4m0 5v1m0 4v4m1-53v5m0 16v1m0 6v1m0 3v1m0 6v1m0 3v1m0 1v1m1-18v1m0 11v3m0 2v1m1-27v2m0 17v4m0 3v1m0 2v1m1-28v2m0 13v2m0 8v2m0 5v3m1-30v1m0 18v1m0 2v1m1 4v3m1-33v1m0 8v1m0 7v2m0 3v1m1-24v1m0 9v2m0 5v4m0 2v1m1-22v1m0 3v1m0 16v4m1-27v1m0 6v2m0 14v1m0 2v1m1-28v1m0 9v1m0 13v4m1-38v10m0 11v14m0 3v4m1-33v1m0 11v1m0 6v4m0 2v1m1-27v1m0 11v1m0 13v1m0 5v1m1-36v2m0 11v2m0 9v2m0 3v1m1-49v3m1-19v1m0 5v1m1 25v1m0 7v2m0 26v2m1-32v1m0 10v1m0 12v1m0 1v4m0 1v1m1-40v1m0 34v2m1-38v1m0 3v1m0 31v1m1-38v1m0 2v1m0 33v1m1-40v2m0 1v1m0 34v1m1-41v1m0 3v1m0 30v2m0 1v2m1-41v1m0 2v1m1-9v1m0 42v1m0 8v1m1-52v1m0 40v1m0 7v1m0 1v1m1-31v1m1-25v1m0 39v1m0 10v2m1-15v1m0 18v1m1-24v1m1-4v2m0 22v1m1-28v2m0 23v1m0 2v3m1-34v1m0 16v1m0 1v1m1-55v1m0 33v1m0 19v1m0 6v1m0 5v2m1-58v1m0 43v1m0 1v1m1-10v3m1-15v1m1-103v3m1-10v2m0 5v1m3-14v1m2-5v1m1-3v1m2-6v1m1-4v1m2-1v1m1-4v1m12-8v1m2 170v1m1-171v1m1-1v1m1 134v1m1-135v1m1 167v1m1-38v1m1-131v1m1-1v1m0 129v1m0 30v1m0 6v1m1-39v1m1-1v1m1-129v1m0 156v2m0 5v3m1-166v1m0 155v2m0 5v3m1-82v1m0 3v1m0 38v1m1-1v1m1-124v1m0 122v1m1 37v1m1-39v1m2-121v1m2 3v1m3 4v1m0 3v1m1-1v2m2 5v2m1 1v1m4 3v11m0 18v29m0 17v9m54-12v2m0 28v1m0 7v1m0 5v1m0 12v1m0 1v1m1-132v1m0 15v1m0 18v1m0 31v4m1-70v1m0 63v1m0 3v2m0 5v25m0 9v5m0 7v6m1-94v1m0 33v3m0 7v4m0 3v4m0 1v1m0 2v7m0 1v1m0 8v5m0 6v7m1-128v2m0 27v1m0 16v1m0 18v1m0 13v2m0 5v6m0 1v2m0 1v1m0 1v3m0 8v6m0 5v7m1-149v1m0 3v1m0 23v1m0 7v1m0 37v1m0 12v3m1-71v1m0 34v1m0 21v1m0 13v1m0 31v1m0 7v1m0 22v1m1-24v5m0 6v4m0 1v2m0 5v1m1-25v1m0 9v1m0 6v1m0 5v1m1-24v1m0 1v3m0 6v1m0 1v1m0 1v2m0 5v3m2-137v1m0 2v1m0 12v1m0 54v2m1-71v1m0 29v1m0 21v1m0 21v1m0 22v3m0 8v2m0 1v2m0 6v1m0 3v2m0 6v1m1-101v1m0 21v1m0 17v1m0 26v2m0 7v1m0 9v1m0 6v1m1-54v11m0 1v11m0 1v2m0 10v4m0 8v4m0 7v3m1-61v16m0 1v2m0 1v5m0 10v3m0 7v5m0 7v3m1-141v1m0 7v1m0 21v1m0 4v1m0 4v1m0 39v5m1 0v20m0 9v4m0 6v5m0 8v3m1-57v20m0 11v2m0 8v3m0 9v2m1-26v1m0 2v1m0 27v1m1-32v3m0 6v2m0 2v2m0 6v1m0 2v2m0 5v1m1-59v11m0 1v3m0 9v4m0 9v3m0 7v4m0 7v1m1-60v15m0 9v3m0 9v4m0 7v4m0 7v2m1-62v12m0 38v1m0 9v2m1-63v3m1 9v2m0 8v2m0 1v2m0 11v1m0 8v1m0 3v2m0 5v1m1-59v2m1 2v6m0 9v4m0 9v3m0 9v5m0 8v6m1-60v5m0 11v2m0 10v1m0 11v1m0 1v1m0 1v1m0 8v7m1-63v3m1 1v1m0 9v1m0 2v1m0 8v2m0 2v1m0 8v1m0 5v1m0 6v1m1-52v1m0 11v3m0 9v4m0 9v1m0 4v1m0 7v2m1-54v1m0 12v2m0 9v2m0 11v6m0 8v13m1-121v1m0 1v1m0 33v3m3 17v1m0 63v1m5-133v2m7-6v1m9-11v1m1-3v1m1-3v2m1-5v3m1-6v1m1 113v4m2-128v2m1-4v1m1-4v1m3 130v1m2-1v1m2-1v1m1-2v2m2-2v2m3-5v1m0 2v1m0 2v2m1 21v2m0 3v1m1-28v1m0 3v1m0 1v1m0 1v5m0 2v7m0 2v3m0 4v4m1-33v1m0 6v12m0 4v2m0 4v4m1-31v1m0 6v10m0 4v2m0 4v4m2-34v1m0 2v1m0 6v10m0 4v2m0 4v4m2-34v1m0 2v1m0 6v10m0 4v2m0 4v4m1-34v2m1-130v1m0 127v2m1-2v1m0 2v1m0 6v10m0 4v2m0 4v4m1-159v1m1 124v1m0 2v1m0 6v10m0 4v2m0 4v4m1-34v1m0 9v11m0 2v3m0 4v4m1-34v1m0 1v2m1-4v1m1 19v1m0 2v1m0 6v1m0 2v1m1-14v1m0 2v1m0 6v1m0 2v1m1-24v10m0 4v2m0 4v4m2-8v1m2-23v1m0 29v3m1-2v2m3-144v1m1-1v1m0 4v2m5 4v1m0 7v1m1 3v1m1-5v1m0 7v1m2-1v1m29 101v1m1-1v2m1-1v1m1-1v1m4-72v2m0 3v3m0 8v34m0 23v1m1-71v2m0 5v2m0 8v26m0 28v1m1-69v2m0 12v26m0 29v1m1-68v2m0 1v2m0 1v10m0 16v11m1-31v22m1-30v10m0 17v10m1-37v9m0 20v9m0 26v1m1-65v7m0 26v8m1-41v7m0 30v7m0 13v2m1-58v7m0 28v8m0 13v2m1-56v8m0 20v8m1-41v6m0 31v8m0 14v2m1-58v7m0 24v8m0 22v2m1-64v7m0 28v8m0 14v2m1-61v5m0 39v8m0 6v1m0 3v1m1-60v8m0 25v8m0 15v2m1-58v9m0 21v9m0 17v1m1-55v13m0 6v13m0 22v1m1-55v31m1-28v28m1-28v29m0 21v2m1-56v11m0 15v12m0 15v2m1-52v32m3-21v9m29-86v2m1-1v1m1-8v1m0 4v1m6-12v1m6-9v1"/><path stroke="#10ff00" d="M240 326v1m3-1v1m0 5v1m1-8v1m1 3v3m1 2v3m1-2v3m1-5v1m0 6v1m0 19v1m0 9v1m0 1v3m1-43v1m0 9v1m0 13v1m0 3v1m0 3v1m0 6v1m0 1v2m1-37v1m0 6v2m0 9v1m0 4v1m0 2v1m1-24v1m0 2v1m0 15v1m0 4v1m0 5v1m0 1v2m1-37v1m0 6v1m1-3v4m1-1v2m1-1v1m0 2v1m1-2v3m1-25v9m0 19v2m0 1v4m0 2v1m0 9v1m1-171v5m0 97v5m2 46v1m0 14v2m1-18v3m1-11v1m0 1v1m0 7v2m2-2v1m0 6v3m0 4v3m1-15v1m0 1v3m0 2v1m1-8v1m0 7v1m1-12v2m0 1v1m0 8v1m0 2v3m1-19v1m0 2v2m0 8v1m0 2v3m1-19v1m0 11v1m0 4v2m1-19v2m0 5v1m3-10v1m0 9v1m1-11v1m0 2v1m1-2v1m0 15v3m1-20v1m0 13v1m1-15v1m1 2v1m0 6v1m0 2v1m1-9v1m0 3v1m0 4v1m3-6v1m1-12v1m0 1v1m1 9v1m0 2v1m1-10v1m1-3v1m0 11v1m1-20v1m0 3v1m0 9v1m0 4v1m0 2v3m1-11v1m0 3v1m0 3v3m1-21v1m0 4v2m0 7v1m1-19v1m0 3v1m0 3v4m0 6v1m1-18v1m0 1v1m0 18v3m1-24v1m0 21v2m1-20v1m0 17v2m1-24v1m0 4v1m0 6v1m1-13v4m0 7v1m0 4v1m1-17v1m0 9v2m0 2v2m1-21v1m0 12v1m0 2v1m0 2v2m0 6v2m1-30v1m0 7v1m0 4v1m0 3v1m0 1v1m1-41v16m0 8v1m0 10v1m0 1v1m0 3v3m0 4v3m1-25v1m0 14v3m0 4v3m1-35v1m0 15v1m0 8v2m0 5v3m1-33v1m0 11v1m1-9v1m0 1v1m0 16v2m0 5v3m1-29v2m1 17v3m0 4v3m1-33v1m0 22v3m0 4v3m1-29v1m0 25v3m1-33v1m0 4v1m0 17v2m0 5v3m1-34v1m0 7v1m0 22v3m1-25v1m0 14v3m1-18v1m0 14v3m0 4v1m1-34v1m0 9v1m0 15v3m0 3v1m1-35v1m0 4v2m0 3v1m1-29v1m0 13v1m1-93v2m0 64v3m0 23v1m1 5v1m0 30v1m1-39v1m0 23v6m1-31v1m0 4v1m0 30v2m1-39v1m0 1v1m0 33v1m1-38v2m0 35v1m1-39v1m1-4v3m1-4v2m0 19v1m2-28v1m0 55v1m2-62v1m0 43v1m0 8v1m0 6v1m1-19v1m0 9v2m2-56v1m0 37v1m0 12v2m0 8v3m1-29v1m0 13v3m1-21v1m0 14v1m0 9v1m1-64v1m0 50v1m0 10v1m1-63v1m0 21v5m1 8v1m0 7v1m0 4v2m4-126v1m2-6v1m4-7v1m0 1v1m6-10v1m13 154v3m0 4v1m6-34v1m2-46v3m0 42v1m0 25v2m0 5v2m1-80v3m0 42v1m1-46v3m0 42v1m1-46v3m0 39v1m0 2v1m1-130v1m0 82v1m0 3v1m0 38v1m0 2v1m1-1v1m1-1v1m1-1v1m1-126v1m0 121v1m0 28v3m0 4v1m1-34v1m2-123v1m4 6v1m0 2v1m4 12v1m5-38v7m0 4v26m0 14v1m0 1v3m0 54v5m0 9v4m0 4v7m0 2v5m0 5v11m0 3v4m17-169v7m0 4v90m37 7v1m0 61v1m1-132v1m0 14v1m0 18v1m0 21v1m0 1v1m0 13v1m0 3v13m0 1v9m0 2v2m0 8v6m0 5v8m1-58v1m0 3v1m0 25v1m0 13v1m0 5v1m0 6v1m1-131v1m0 33v1m0 21v1m0 1v1m0 18v2m0 5v1m0 1v1m0 24v1m0 5v1m0 4v1m1-161v1m0 53v1m0 86v1m0 6v1m0 18v1m1-161v1m0 2v1m0 1v1m0 1v1m0 11v1m0 1v1m0 1v1m0 2v2m0 7v2m0 3v2m0 7v3m0 2v3m0 3v2m0 9v2m0 3v3m0 3v3m0 6v1m0 2v1m0 17v2m0 6v2m0 1v9m0 1v1m0 9v4m0 6v6m1-113v1m0 17v1m0 38v1m0 2v1m0 40v1m0 3v1m0 7v1m1-14v1m0 4v1m1-6v1m1-8v1m1-1v3m0 1v2m0 6v5m0 6v3m1-60v1m0 1v19m0 1v3m0 9v5m0 6v4m0 1v1m0 6v3m1-28v1m0 5v1m0 4v1m0 11v1m1-101v1m0 21v1m0 20v1m0 38v1m0 16v1m1-101v1m0 21v1m0 54v1m0 4v1m0 11v1m0 5v1m0 3v2m1-74v1m0 35v1m0 8v1m0 3v1m0 5v1m0 11v1m0 3v1m1-155v1m0 6v1m0 28v2m0 20v1m0 5v1m0 6v1m0 7v1m0 18v2m0 1v15m0 1v2m0 8v1m0 2v2m0 6v3m0 1v1m0 7v3m1-35v1m0 17v1m0 5v1m0 5v1m0 4v1m1-38v2m0 11v1m0 10v1m0 6v2m0 2v1m1-36v1m0 12v1m0 10v1m0 5v1m0 4v1m1-38v2m0 8v1m0 3v1m0 16v1m1-25v1m0 11v1m0 4v1m0 5v1m0 4v1m0 5v1m1-36v1m0 3v1m0 7v1m0 4v1m0 5v1m0 4v1m0 5v1m1-47v3m0 8v2m0 1v2m0 8v4m0 6v3m0 1v2m0 5v2m1-58v1m0 1v10m0 9v2m0 1v1m0 8v4m0 8v5m0 6v4m1-36v1m0 18v1m1-45v9m0 12v2m0 8v3m0 10v2m0 1v1m0 8v5m1-53v1m0 7v1m0 4v1m0 7v1m0 3v1m0 13v1m0 6v1m1-49v1m0 9v1m0 2v2m0 6v2m0 3v1m0 7v1m0 12v1m1-53v3m0 11v3m0 9v3m0 11v4m0 8v8m1-62v1m0 11v1m0 4v1m0 19v1m1-37v2m0 33v1m1-27v1m0 10v1m0 2v1m0 16v1m1-100v1m0 37v3m3 15v1m0 2v20m0 8v3m0 1v7m0 5v2m0 2v4m0 1v1m0 1v5m7-136v1m1-1v1m1-1v1m1-1v1m16-26v1m1-4v1m16 127v4m1-14v1m0 45v1m1-31v1m0 14v2m1-23v1m0 6v1m0 12v4m1-15v1m0 10v1m0 2v1m2-15v1m0 10v1m0 2v1m1-23v1m1 7v1m0 10v1m0 2v1m1-22v2m1-2v2m1 5v1m0 10v1m0 2v1m1-24v1m1 8v1m0 10v1m0 2v1m1-15v1m0 11v2m1-13v11m0 2v3m0 4v4m2-25v1m0 11v2m1-14v1m0 11v2m0 3v1m1-18v1m0 10v1m0 2v1m1-23v3m2 23v3m0 4v1m5-140v1m6 9v1m3 10v1m0 4v1m37 32v3m1 0v5m1-2v1m0 2v1m0 62v1m1-65v1m0 13v16m1 34v1m1-53v17m1-18v20m1-22v26m0 31v1m1-58v11m0 7v12m0 27v1m1-57v28m1-25v20m0 31v1m1-59v11m0 9v11m1-27v24m1-25v28m1-32v7m0 24v8m0 15v3m1-51v25m0 25v1m1-50v21m0 27v2m1-44v6m0 36v1m1-2v2m1-2v1m2-45v15m34-90v2m1-5v1m1-5v1m1-3v1m1-3v1m0 4v1m1-3v1m1-3v1m4-8v1m1 1v1"/><path stroke="#27ff00" d="M241 325v1m3 7v1m1-2v3m3 4v1m0 17v1m0 1v1m0 5v1m0 3v1m1-29v1m0 5v1m0 9v1m0 7v1m0 4v1m0 1v1m1-40v1m0 3v1m0 1v1m0 3v2m0 15v1m0 4v1m0 5v1m0 1v2m1-33v2m0 13v1m0 1v1m0 6v1m0 1v3m0 1v1m1-32v4m3-7v1m0 2v1m0 6v2m2-14v4m0 14v1m0 10v3m0 4v2m1-132v1m0 68v3m2 40v3m2-8v1m1-2v1m0 1v1m0 7v1m0 1v1m1-2v1m0 1v1m1-1v1m0 3v2m3-10v2m0 2v1m1-5v1m0 4v1m1 4v1m2-12v1m0 11v1m1-12v1m1 10v1m1-14v1m2 10v1m1-10v1m2-4v1m0 1v1m1-3v2m1-4v1m0 6v1m1 6v1m1-11v1m1 8v1m0 2v1m1-17v1m0 3v1m2-3v1m1-5v1m0 13v1m0 7v3m1-24v1m0 20v3m1-23v1m0 11v1m0 2v1m1-16v1m0 14v1m1-17v1m0 1v2m0 8v1m1 3v1m1-5v1m2-12v1m0 7v1m1-15v1m0 18v3m0 4v3m1-26v2m0 9v1m1-13v2m1-9v2m0 11v2m1-3v1m1-7v1m2-5v1m0 6v1m1-8v1m0 6v1m1-7v1m3-5v1m0 31v3m1-35v1m0 32v2m2-37v1m0 2v1m0 2v3m0 18v2m1-42v4m1-119v1m0 2v1m0 26v1m1 126v1m1-16v4m1-24v4m1-5v1m0 35v1m2-3v1m3 3v1m0 1v1m3-3v1m1-57v1m0 50v1m0 2v1m0 4v1m1 1v1m1-25v1m0 19v1m1-24v1m0 20v1m1-26v1m0 17v1m1 3v1m1-27v1m0 11v1m0 3v2m0 5v1m1-17v1m5-121v1m0 5v1m4-15v1m4-6v1m16 159v1m7-38v1m0 2v1m0 10v1m7-141v1m2 128v1m0 33v1m2-161v2m0 1v1m5 9v1m1-1v1m0 1v1m4 13v1m4-1v1m0 12v1m0 3v3m0 9v1m0 59v4m0 7v2m0 5v5m0 11v3m0 4v3m17-71v1m37 41v1m0 13v1m1-16v1m0 13v1m0 12v1m1-116v2m0 17v2m0 81v1m1-117v1m0 12v2m0 56v1m0 44v1m0 11v1m1-77v1m0 1v1m0 47v1m0 12v1m0 3v1m1-144v1m0 12v1m0 41v1m0 2v1m0 18v1m0 3v1m0 20v1m0 6v1m0 28v1m0 4v1m0 6v1m1-128v1m0 53v1m1-47v1m0 8v1m0 4v1m0 3v1m0 9v1m0 4v2m0 3v2m0 60v1m0 6v1m0 15v1m1-124v1m0 8v1m0 3v2m0 3v2m0 8v1m0 4v2m0 3v2m0 9v1m0 68v1m0 3v1m1-123v1m0 8v1m0 4v1m0 3v1m0 9v1m0 4v2m0 3v2m0 77v1m0 3v1m1-17v1m0 3v1m0 6v1m1-95v1m0 21v1m0 45v1m0 18v1m0 11v1m1-120v1m0 18v1m0 21v1m0 63v1m0 7v1m1-54v1m0 33v1m0 9v1m1-87v1m0 21v1m1 45v1m0 23v1m1-150v2m0 19v1m0 5v1m0 18v1m0 95v1m0 5v1m0 5v1m0 3v1m1-28v1m0 4v1m1-2v1m0 4v1m0 5v1m0 10v1m1-36v1m0 16v1m0 10v1m0 6v1m1-32v1m0 1v1m0 5v1m0 14v1m0 10v1m1-42v1m0 5v1m0 6v1m0 4v1m0 6v1m1-14v1m1-9v1m0 11v1m0 17v1m1-32v1m0 4v1m0 6v1m0 11v1m0 5v1m1-33v1m0 11v1m0 5v1m0 17v1m1-47v1m0 9v1m0 3v1m0 10v1m0 8v1m0 4v1m0 6v1m1-47v1m0 12v1m0 18v1m0 6v1m0 4v1m1-39v1m0 17v1m0 12v1m1-43v2m0 8v1m0 3v1m0 7v1m0 3v1m0 20v2m1-50v1m0 25v1m1-20v1m0 3v2m0 5v2m0 19v1m0 5v1m1-51v1m0 20v1m0 4v1m0 8v1m0 12v2m1-152v1m0 2v1m0 26v3m0 53v5m1-98v1m1-1v1m1 109v1m0 25v3m0 11v2m0 1v2m11-120v1m16-26v1m1-4v1m15 118v1m0 14v6m1 15v3m1-4v1m1-22v2m0 19v1m1-27v2m0 2v1m0 16v2m0 3v1m1-27v1m0 1v1m1 18v2m0 3v1m1-27v1m0 1v1m1 18v2m0 3v1m1-17v10m0 4v2m0 4v4m1-24v10m0 4v2m0 4v4m1-13v2m0 3v1m1-26v2m1 18v2m0 3v1m1-1v1m1-18v1m0 11v2m1-22v2m1 23v1m2-6v2m0 3v1m1-17v10m0 4v2m0 4v4m1-7v3m0 4v1m1 0v2m7-136v2m1-6v1m1 8v1m3 1v1m41 52v2m1 63v2m1-1v1m1-2v1m1-1v1m2-45v7m1 37v1m0 1v1m1-1v1m1-50v9m0 38v1m0 1v1m3-55v24"/><path stroke="#3fff00" d="M243 331v1m5 2v1m0 3v1m0 19v1m0 7v1m0 1v1m1-31v3m0 2v1m0 14v2m0 9v1m1-30v3m0 14v1m0 1v1m0 6v5m0 1v1m1-15v1m0 8v1m1-29v2m1-4v1m1-1v1m0 4v1m1-4v2m2-1v9m0 4v1m1-144v1m0 2v1m0 26v2m0 72v4m1 8v1m0 47v1m4-26v1m0 9v1m1 0v1m2 0v1m1-1v1m0 6v1m4-5v1m4 5v1m1-6v1m1 1v1m1-14v1m0 1v1m0 9v1m1-8v1m1-5v1m3-2v1m0 12v1m1-15v1m0 1v1m0 10v1m2-12v1m1 12v1m3-16v1m0 10v1m0 2v1m2-4v1m1-13v1m0 14v1m2-4v1m0 1v1m2-20v1m0 13v1m1-10v1m0 6v1m0 1v1m3-9v1m1-11v1m0 8v1m3-4v1m2-5v1m1-3v1m0 2v1m1 1v1m1 0v1m1-1v1m1-10v1m0 7v1m0 23v1m1-34v2m0 26v2m2-53v3m1 14v1m0 4v1m1 11v2m0 18v1m1-2v1m1-2v1m1 5v1m2-11v1m2-3v1m1-2v1m1-21v16m0 17v1m1-60v1m0 49v1m1-51v1m1 35v1m1-1v1m0 9v1m1-3v1m1-16v1m1-40v1m0 35v1m0 12v1m1-1v1m5-122v1m2-8v1m2-7v1m2-3v1m26 134v5m0 4v2m0 5v2m6-161v1m4 4v1m1-1v1m5 9v1m1 1v1m4 12v2m4-2v2m0 20v2m17-54v1m0 2v1m0 91v1m0 4v2m38-54v1m0 18v1m0 37v1m0 1v1m0 45v1m1-122v2m0 54v2m0 63v1m1-88v1m0 40v1m0 27v1m1-18v1m0 42v1m1-156v1m0 3v1m0 2v2m0 2v2m0 25v1m0 44v1m0 5v1m0 11v1m0 26v1m1-90v1m0 104v1m1-98v1m0 5v1m0 29v2m0 71v1m1-170v1m0 47v1m0 27v1m0 20v1m0 48v1m1-147v1m0 59v1m0 5v1m0 29v2m0 47v1m0 19v1m1-119v1m0 8v1m0 4v1m0 3v1m0 9v1m0 4v2m0 3v2m0 81v1m1-120v2m0 17v1m0 21v1m0 17v1m0 2v1m0 33v1m0 5v1m1-44v1m0 1v1m0 26v1m0 25v1m2-11v1m1-153v6m0 7v1m0 3v2m0 3v1m0 3v2m0 3v1m0 3v1m0 4v2m0 3v2m0 9v1m0 4v2m0 5v1m0 4v2m0 4v2m0 10v2m0 48v1m0 21v1m1-141v1m0 8v1m0 19v1m0 16v3m0 3v3m0 3v4m0 5v1m0 5v1m0 36v1m0 6v1m0 5v1m0 3v1m0 11v1m1-30v1m1 5v1m0 5v1m0 14v1m1-23v1m0 5v1m1-15v1m0 16v1m1 16v1m0 3v1m1-43v1m0 6v1m0 11v1m0 17v1m1-26v1m0 11v1m0 4v1m0 10v1m1-37v1m0 35v1m1-44v1m0 4v1m1 5v1m0 5v1m0 4v2m0 5v1m1-28v1m0 11v2m0 5v1m0 14v1m1-43v2m0 5v1m0 23v2m0 11v1m1-21v1m0 6v1m1-29v1m0 6v2m0 4v1m0 7v1m0 12v1m0 4v1m1-48v1m0 13v1m0 10v2m1-22v2m0 32v1m1-55v4m3 29v1m0 3v1m0 16v1m44 16v2m2-39v3m1-3v3m1-3v3m0 3v1m0 6v10m0 4v2m0 4v4m1-37v3m1-3v3m0 3v1m0 6v10m0 4v2m0 4v4m1-37v3m1-3v3m0 9v1m0 10v1m0 2v1m1-27v3m0 9v1m0 10v4m1-27v3m1-3v3m0 3v1m0 6v10m0 4v2m0 5v2m1-36v3m1-3v3m1-3v3m0 26v1m1-24v1m0 6v10m0 4v2m0 5v2m2-4v1m2-21v1m0 10v4m1 11v2m6-143v1m1 2v1m1 2v1m1 3v1m2-3v1m2 12v1m1-3v1m0 5v1m43 107v1m2-2v1m1-1v1m2 0v1m1-1v1m45-130v1m2-1v1"/><path stroke="#56ff00" d="M241 326v2m2-1v1m5 9v1m0 29v1m1-35v1m0 32v1m0 1v1m1-35v1m0 1v1m0 21v1m3-17v1m4 6v1m0 2v1m1-35v4m1 9v2m0 28v3m0 4v4m7-10v1m0 4v1m2 0v1m2-5v1m0 1v1m1 0v1m1-4v1m1 2v1m1-3v1m1-2v1m1 3v1m2-2v1m1-15v1m0 11v1m0 2v1m3-4v1m0 2v1m2-15v1m0 12v1m1-10v1m1-6v2m0 10v1m0 2v1m1-4v1m1-1v1m0 1v1m1-1v1m1-16v1m1 13v1m1-1v1m2-15v1m0 11v1m0 1v1m1-2v1m2-18v1m1-2v1m0 12v1m3-18v1m0 8v1m1-9v1m0 6v1m3-8v1m1 4v1m2-5v1m1-4v1m3-2v1m1 27v1m1-36v1m0 9v11m1-36v1m1 29v1m0 16v1m0 4v1m1-35v1m3 29v1m2 3v1m1-26v13m2 8v1m0 3v1m1-15v1m0 10v1m1-55v1m0 43v1m1-3v1m0 6v1m0 4v1m1-17v1m0 20v1m1-10v1m0 4v1m1-22v1m0 14v1m1-19v1m0 10v1m0 9v1m1-6v1m0 2v1m1-15v1m1-6v1m5-119v2m2-7v1m0 1v1m1-3v1m1-3v1m27 137v1m0 2v1m0 6v1m0 2v1m0 2v1m10-162v1m1 117v1m14-122v1m0 2v1m0 50v5m17 37v1m0 1v2m0 2v3m37 2v1m0 34v1m1-54v1m0 52v1m1-38v1m0 1v1m0 44v1m0 9v1m1-75v1m0 73v1m1-104v1m0 10v1m0 40v1m0 39v1m1-65v1m0 8v2m0 16v1m0 45v1m1-130v1m0 108v1m0 22v1m1-171v1m0 47v1m0 27v1m0 69v1m0 10v1m1-56v2m0 62v1m1-119v1m0 27v1m0 25v1m0 50v1m0 2v1m1-157v1m0 59v1m0 5v1m0 29v2m0 47v1m1-110v2m0 125v1m0 3v1m1-25v1m0 22v1m1-17v1m0 1v1m0 9v1m1-14v1m0 2v1m0 12v1m1-115v2m0 5v1m0 9v1m0 17v1m0 61v1m0 3v1m0 17v1m1-164v1m0 4v2m0 2v2m0 2v2m0 3v2m0 2v2m0 3v2m0 4v1m0 2v3m0 2v3m0 3v2m0 3v3m0 28v1m0 4v2m0 72v1m2-2v1m1-31v1m0 17v1m0 2v1m1-15v1m0 9v1m0 10v1m1-24v1m0 24v1m1-1v1m1-43v1m0 37v1m2-28v1m0 15v2m0 7v1m1-42v1m0 6v1m0 11v1m0 19v1m1-27v2m0 15v1m1-20v1m1-10v2m0 18v1m0 12v1m1-149v2m0 105v1m0 25v1m0 4v1m1-17v1m0 23v2m1-32v1m0 11v1m1-35v3m0 66v1m3-63v1m0 22v1m44 16v1m1 12v3m0 4v1m1-8v3m0 4v1m1-27v1m0 18v3m1-29v1m0 7v1m0 10v1m0 2v1m1 5v1m1-21v1m0 10v1m0 2v1m1 5v1m1-9v2m0 3v1m1-1v1m1 0v3m1-21v1m0 10v1m0 2v1m0 6v1m0 2v1m1-7v3m1-26v1m0 22v3m0 4v1m2-26v1m0 10v1m0 2v1m0 6v1m0 2v1m1-30v1m0 22v3m0 4v3m1-33v1m0 22v2m0 5v3m1-33v1m0 22v3m1-4v1m1-23v1m2 3v1m6-114v1m2 4v1m1 7v1m1 2v1m3 5v1m43 109v1m1-1v1m1-1v1m1-1v1m48-129v1m7-14v1m3-1v1"/><path stroke="#6eff00" d="M243 328v1m0 1v1m1-5v1m0 5v1m4 2v2m1 0v1m0 6v1m0 1v1m0 20v1m1-33v1m7 14v2m1-30v4m1 4v1m0 2v3m0 21v4m0 3v1m0 2v1m9-6v1m1 0v1m0 3v1m4-3v1m3 0v1m2-12v1m2 8v1m0 4v1m1-6v1m0 4v1m4-18v1m0 13v1m2-16v1m0 1v1m1-4v1m0 15v1m1-14v1m0 11v2m1-2v2m1-2v1m2-2v1m0 1v1m1-12v1m0 9v1m3-15v1m4-8v1m0 6v1m1-2v1m4-7v1m0 3v1m2-5v1m1 2v1m1-7v1m2 0v1m0 4v1m0 25v1m1-4v1m1-28v1m0 11v4m1-34v4m1 35v2m1-33v1m2 40v1m1-2v1m1-8v1m2-8v3m1 6v1m0 5v1m1-164v2m1 145v1m0 10v1m1-158v1m0 159v1m1-59v1m0 56v1m1-9v2m0 7v1m1-64v2m0 41v1m1-4v1m0 8v1m1 3v1m2-14v1m0 3v1m1-14v1m0 3v1m4-116v1m2-6v2m1-15v2m1-1v1m0 8v1m1-3v1m8-8v1m1-2v2m1-2v2m1-2v2m3-1v1m1-2v2m1-2v2m1-2v2m2-2v2m5 137v1m1-140v2m1 127v2m1-2v2m0 10v1m0 6v2m1-150v2m0 127v2m1-131v2m0 127v2m1-2v2m1-2v2m1-2v2m1-2v2m1-2v2m1-2v2m1-2v2m1-128v1m0 125v2m5-131v2m2-2v2m1-1v1m7 56v2m17 36v1m0 7v2m1-114v37m0 3v59m21-99v98m11-98v37m0 3v11m0 3v31m0 4v1m3-86v33m0 3v12m0 1v2m0 1v18m0 1v10m0 3v2m0 3v2m0 3v2m1 17v1m1-5v1m0 29v1m0 13v1m0 12v1m2-132v1m0 108v1m0 8v1m0 1v1m1-80v1m0 20v1m0 45v1m1-75v1m0 21v1m0 12v2m0 3v1m0 57v1m1-61v2m0 8v1m0 19v1m1-51v1m0 10v2m0 51v1m0 10v1m2-64v1m0 50v1m1-107v1m0 27v1m0 25v1m1 10v1m0 41v1m1-5v1m0 13v1m1-2v1m1-1v1m1-150v1m0 144v1m0 2v1m1-77v1m0 27v1m0 19v1m0 14v1m0 8v1m0 10v1m1-23v1m0 1v1m0 7v2m0 1v2m0 7v1m1-38v2m0 22v2m0 11v2m1-164v2m0 126v2m0 9v1m0 22v1m1-163v2m0 158v1m1-161v2m0 145v1m0 1v2m1-151v2m0 133v1m0 9v2m0 2v1m1-31v1m0 13v1m0 1v1m0 8v1m1-40v1m0 16v1m0 8v1m0 2v2m0 6v1m1-143v2m0 118v1m0 12v1m0 7v1m0 2v1m1-5v1m0 16v1m1-158v2m0 126v2m0 23v1m1-154v2m0 124v1m0 1v2m0 10v1m0 12v1m1-32v2m0 3v2m0 10v2m0 11v1m1-44v1m0 2v1m1-113v2m0 110v1m0 8v1m0 11v1m1-134v2m0 100v1m0 30v1m0 1v1m0 11v1m1-51v2m9-99v2m3-1v1m1-2v2m1-2v2m0 30v1m2-32v1m1-2v2m1-2v2m2-1v1m1-2v2m1-2v2m17-2v2m3-2v2m4-2v2m1 118v2m1-122v2m0 160v2m1-163v1m0 160v2m1-3v3m1-164v2m0 146v2m0 3v1m1-154v2m0 129v1m0 22v2m0 5v3m1-164v2m0 146v2m0 3v1m1-23v1m0 22v2m0 5v3m1-33v1m1-1v1m1-1v1m0 29v3m1-16v2m0 3v1m1-23v1m0 29v3m1-164v2m0 160v2m1-33v1m0 22v3m0 4v1m1-14v2m1-150v2m1-2v2m1 159v3m1-164v2m0 129v1m0 31v1m1-163v1m2-2v2m0 130v3m3-135v2m2-2v2m1-2v2m0 24v1m3-26v1m2-2v2m0 39v1m1-42v2m1-2v2m4-2v2m56-2v2m34 21v1m3-7v1m1-2v1m2-3v1m4-4v1"/><path stroke="#85ff00" d="M237 212v1m1-1v1m1-2v2m1-2v2m1-2v2m1-1v1m1 116v1m1-119v2m3-2v2m2-2v2m0 132v1m5-135v2m1-2v2m1-2v2m2 161v1m1-48v3m0 6v3m0 9v4m0 4v1m0 8v2m0 5v2m1-163v2m1-2v2m1-2v2m1-2v2m2-2v2m1-2v2m0 150v1m0 2v1m1-156v2m0 149v1m1-152v2m2-2v2m0 152v1m1-155v2m0 153v1m1-156v2m1-2v2m0 153v1m1-156v2m0 142v2m0 10v1m1-157v2m1-2v2m1-2v2m1-2v2m1-2v2m1-2v2m1-2v2m1-2v2m0 153v1m1-156v2m1-2v2m1-2v2m0 154v1m1-157v2m1-2v2m0 139v1m1-142v2m1 138v1m2-141v2m1-2v2m0 152v1m1-154v1m1-2v2m0 140v1m1-143v2m1-2v2m1-2v2m0 136v1m1-2v1m0 2v1m1-140v1m1-2v2m1 137v1m1-140v2m2-2v2m1-2v2m0 135v1m1-138v2m1-2v2m2-2v2m1 135v1m1-138v2m0 128v1m0 6v1m1-138v2m0 130v1m0 30v1m1-164v2m1 146v4m1-29v1m0 10v4m1-137v1m0 150v1m1-153v2m2-2v2m1-2v2m1-2v2m0 159v2m1-163v2m0 159v1m1-162v2m0 149v1m1-152v2m0 150v1m1-2v1m0 10v1m1-163v2m1-2v1m0 152v1m0 5v1m1-160v2m0 144v1m0 11v1m1-159v2m0 140v1m0 11v1m0 5v1m1-12v1m1-150v2m0 137v1m0 16v1m1-157v2m0 133v1m1-136v2m0 129v1m0 10v1m0 9v1m1-153v2m0 127v1m1-130v2m1-2v2m1-2v2m1-2v2m1-2v2m0 19v1m1-22v2m0 16v1m0 1v1m1-21v2m1 10v1m1-13v1m1-1v2m1-2v2m1-2v1m5 0v1m1-2v1m4-1v2m1-2v2m1-2v1m4-1v2m2-2v2m1-2v2m0 120v1m0 6v1m1-130v2m1-2v2m1-2v2m0 161v1m2-164v2m1-2v2m0 138v1m0 12v1m3-154v2m1-2v2m1-1v1m0 81v3m1-3v3m3-84v1m2 118v2m2-123v1m1-1v2m2-2v2m2-2v1m1-1v2m1-2v2m2-2v2m1-2v2m1-2v2m19 27v3m0 59v3m21-4v6m11-67v3m0 11v3m0 34v1m0 4v2m0 3v2m3-100v4m0 35v1m0 12v1m0 2v1m0 18v1m0 28v2m1 17v2m0 36v1m1-13v1m2-37v1m0 4v1m0 25v1m1-30v1m0 55v1m1-134v1m0 77v3m0 5v2m0 30v1m0 1v2m1-26v1m0 12v1m0 8v1m0 11v1m1-78v1m0 17v1m1-66v2m0 12v1m0 32v2m0 16v1m0 5v2m0 4v2m0 5v2m0 5v2m0 18v1m0 1v1m1-113v1m1 7v1m0 18v1m0 31v1m0 40v1m0 19v1m1-27v1m0 15v1m1-46v1m1 13v2m0 6v1m0 1v1m0 12v1m0 24v1m1-53v1m0 16v1m1-130v1m0 2v2m0 10v1m0 14v1m0 35v1m0 5v1m0 14v1m1-31v1m0 2v1m0 21v1m0 59v1m1-142v2m0 130v1m0 6v1m1-140v2m0 139v1m1-23v1m0 20v1m0 2v1m1-32v1m0 2v1m0 8v1m0 36v1m1-14v1m1-29v2m0 15v1m1-138v2m0 122v1m0 7v1m0 3v1m0 8v1m0 11v1m1-158v2m0 115v1m0 29v1m0 7v2m1-40v1m0 39v1m1-43v1m0 3v1m0 9v1m0 1v1m1 6v1m1-12v1m0 11v1m1-140v2m0 107v2m0 13v1m0 1v1m0 26v1m1-29v1m0 22v1m1-26v1m0 12v1m1-8v1m0 15v1m5-146v2m1-2v2m1-2v2m1-2v2m1-2v2m1 30v1m1-33v2m1-2v2m1-2v1m3-1v2m1-2v1m3-1v2m1-2v1m3-1v2m1-2v2m1-2v2m1-2v2m1-2v2m1-2v2m6-1v1m1-2v2m1-2v2m1-2v2m1-2v2m2-2v2m1-2v2m2-2v2m1-2v2m1-2v2m2-2v2m0 120v1m2-123v1m1-1v2m0 130v1m0 1v1m1-4v1m0 31v1m2-33v1m0 31v1m1-164v2m1 152v3m0 6v1m1-10v3m0 4v1m0 1v1m2-33v1m1-132v2m2-2v2m0 160v2m1-164v2m0 129v1m0 21v1m3-154v2m1 152v3m0 4v1m1-162v1m1-1v2m0 129v1m2-132v2m1-2v2m2-2v2m1 21v1m2-24v2m0 23v1m1-26v2m1-2v1m1-1v2m0 31v1m1 2v1m1 4v1m0 3v1m1-1v1m1-46v2m1-2v2m1-2v2m2-2v2m1-2v2m1-2v2m1-2v2m1-2v2m1-2v2m1-2v2m1-2v2m1-2v2m1-2v2m1-2v2m1-2v2m1-2v2m1-2v2m3-2v2m1-2v2m1-2v2m1-2v2m1-2v2m1-2v2m5-2v2m1-2v2m1-2v2m1-2v2m1-2v2m1-2v2m2-2v2m1-2v2m1-2v2m1-2v2m1-1v1m1-2v2m1-2v2m1-2v2m1-2v2m1-2v2m2-2v2m1-2v2m2-2v2m1-2v2m1-2v2m1-2v2m1-2v2m1-2v2m2-2v2m2-2v2m1-2v2m1-2v2m1-2v2m2-2v2m2-2v2m1-2v2m1-2v2m1-1v1m1-2v2m1-2v2m1-2v2m1-2v2m1-2v2m4-2v2m1-2v2m1-2v2m1-2v2m1-2v2m1-2v2m1-2v2m2-2v2m1-2v2m1-2v2m2-2v2m1-2v2m1-2v2m1-2v2m0 19v1m1-22v2m0 17v1m0 2v1m1-22v1m0 18v1m1-21v2m1-1v1m0 13v1m1-16v2m0 14v1m2-17v2m1-2v2m1-2v2m1-2v2m0 10v1"/><path stroke="#9dff00" d="M237 211v1m1-1v1m4-1v1m1-1v2m2-1v1m3-2v2m2-2v2m1-2v2m2-2v2m4-2v2m2 126v3m0 3v3m0 4v1m0 2v1m5-145v2m2 151v2m3-155v2m2 152v1m1 1v1m2-2v1m2 0v1m3-2v1m3-9v1m5 7v2m2-157v2m1-2v2m3-2v1m0 153v1m4-16v1m1-140v2m1-2v1m2-1v2m1 132v1m0 3v1m1-139v2m5-2v2m1 133v1m1-136v2m2 131v1m0 1v1m1 24v1m1-30v1m0 20v1m1-21v2m1-134v1m0 122v1m0 2v1m0 24v1m1 8v1m1-161v2m0 157v1m1-2v1m1-2v1m1 2v1m0 2v1m1-10v1m4 1v1m1-9v1m0 11v1m1-10v1m0 7v1m1-9v1m1-152v2m0 152v1m0 2v1m1-12v1m0 6v1m1-18v1m0 7v1m0 7v1m0 1v1m1-23v1m0 18v1m1-15v1m0 3v1m6-123v1m6-19v1m19 121v6m1-7v1m0 6v1m2 12v5m2-27v1m1-1v1m1-1v1m1-1v1m1-1v1m1-1v1m1-1v1m1-120v1m0 118v1m1-1v1m1-1v1m1-1v1m1-1v1m1 2v2m1-125v1m1 0v1m8-2v2m21 104v1m1-13v1m0 5v1m9-109v37m0 3v12m0 1v39m12 12v2m11-3v2m1-105v85m0 3v2m0 3v2m0 3v2m2-63v2m0 46v1m0 4v1m0 22v2m0 3v1m1 17v1m0 11v1m2-36v1m0 29v1m0 13v1m1-45v1m0 9v1m0 5v1m0 1v2m0 7v1m1-140v11m0 3v1m0 3v1m0 3v1m0 3v1m0 84v1m0 19v1m0 2v1m0 1v1m0 5v1m0 12v1m0 14v1m1-62v1m2-68v2m0 12v1m0 51v1m0 4v2m0 11v1m0 5v3m0 27v1m1-31v1m1-91v1m0 8v1m0 4v1m0 13v1m0 36v1m0 5v2m0 4v2m0 5v2m0 4v3m0 12v1m0 3v1m0 6v1m0 1v1m1-118v1m0 25v1m0 96v1m1-58v1m0 33v1m1 13v1m1-22v1m1-7v1m0 10v1m1-112v1m0 24v1m0 30v1m0 9v1m0 27v1m0 2v1m0 42v1m1-134v2m1 124v1m0 4v1m3-42v1m0 5v1m0 12v1m1-24v1m0 21v1m0 2v1m1-17v1m1-12v1m1 6v1m0 23v1m0 12v1m1-41v1m0 16v1m0 2v1m0 11v1m0 9v1m0 2v1m1-164v2m0 112v1m0 38v1m1-41v1m0 2v1m0 38v1m1-41v1m0 9v1m0 7v1m0 11v1m0 1v1m1-11v1m0 11v1m2-42v1m1 8v1m0 3v1m1 16v3m0 10v11m3-162v2m0 124v1m6-99v1m1 3v1m1-1v1m1-1v1m1-1v1m21 87v1m0 4v1m13-7v1m0 5v1m3 7v1m1 20v3m2-3v3m2-156v1m0 159v2m1-1v1m2-163v1m0 155v1m0 6v1m4-1v1m4-2v1m10-133v1m1 1v1m3 4v2m0 1v1m2 5v1m27-47v2m1-1v1m9-2v2m5-2v1m6-1v2m3-2v2m7-2v2m7-2v2m2-2v2m4-2v1m6-1v2m1-2v2m1-2v2m8-2v2m4-2v2m4 22v1m2-25v1m1 17v1m1-19v1m0 16v1m2-18v2m0 13v1m1-2v1m1-3v1"/><path stroke="#b5ff00" d="M244 327v1m0 3v1m1-121v1m1-1v2m3 121v1m0 1v1m4 1v1m0 2v1m1-4v1m0 2v1m5-131v2m0 129v3m0 8v2m8 12v1m1-1v1m1-2v1m10-9v1m0 8v1m3-1v1m4-2v1m2-14v1m1-2v1m5 1v1m4-6v2m3-6v1m4-1v1m0 1v1m1-1v1m3-5v1m3 1v1m4 10v3m0 1v2m5 5v1m1 2v1m1-8v1m0 7v1m1 0v1m1-7v1m0 5v1m1-14v1m1 3v1m2-10v1m1-2v1m1-3v1m1 12v1m1-21v1m0 7v1m1-6v1m5-118v2m12-21v1m15 122v6m2 18v1m0 3v2m0 4v4m3-7v3m0 4v1m5-162v1m6-1v1m1 0v1m13 88v1m0 10v1m17 10v2m1-19v1m0 2v2m0 1v4m2-113v102m3-102v102m4-65v3m0 12v1m0 39v10m12 4v1m12-4v2m2-10v1m0 4v1m0 4v1m0 2v2m0 9v1m0 3v2m0 3v3m0 6v1m0 26v6m0 1v1m1-164v2m0 151v1m1-34v1m0 9v2m0 31v1m3-142v1m0 15v1m0 51v1m0 22v1m1-70v1m0 19v1m0 39v1m0 13v1m0 2v1m0 9v1m0 7v1m1-140v2m1 60v1m1-19v1m0 18v1m0 37v1m0 58v1m1-79v1m0 66v1m1-115v1m0 13v1m0 50v1m0 5v2m0 4v2m0 5v2m0 4v3m0 13v1m0 3v1m0 1v1m0 1v1m1-25v1m0 5v1m0 12v1m0 8v1m1-154v2m1-2v2m0 128v1m0 12v1m1-18v1m0 19v2m1-123v1m0 51v1m0 63v1m0 1v1m1-21v1m0 11v2m0 3v1m0 7v1m1 14v1m1-37v1m0 5v1m0 9v1m1 5v1m0 10v1m1-32v1m0 29v1m1-38v1m0 3v1m0 6v1m0 24v1m1-25v1m0 24v1m1-38v1m0 5v1m0 9v1m1-12v1m0 15v1m1-14v1m0 11v1m0 12v1m1-38v1m0 25v1m0 4v1m1-35v1m0 26v1m1-27v1m0 17v1m0 2v1m0 13v1m1-9v1m1-36v1m0 15v1m1 7v1m0 16v1m1-47v1m0 11v1m0 18v1m0 13v1m1-50v1m0 11v5m0 7v1m0 12v2m0 3v1m14-114v1m15-29v1m3-1v2m1-2v2m1-2v1m0 121v2m13 2v2m4 7v1m0 25v2m1-28v1m1-1v1m0 25v2m1-28v1m1-136v1m0 134v1m1-1v1m1-1v1m1 18v2m0 5v2m1-28v1m1-1v1m1-1v1m1 18v3m0 4v1m1-27v1m1-1v1m1-1v1m1-1v1m1-1v1m7-115v2m1 0v1m0 1v1m2 2v1m1 1v1m1 6v1m1 1v1m1 2v1m1 4v1m19-47v1m1-2v2m8-2v1"/><path stroke="#ccff00" d="M252 211v2m6 149v2m0 4v4m10-9v1m1 0v1m3 0v1m3 3v1m7-17v1m3 3v1m1 9v1m15-19v1m1-4v1m0 1v1m3-3v1m1-2v2m3-2v1m1-4v1m1-1v1m0 4v1m3-137v2m0 122v1m0 28v1m1-16v1m1 0v6m0 3v1m2 14v1m1-2v1m1-2v1m2 0v1m1-4v1m1 2v1m1-11v1m1 6v1m0 2v1m2-16v1m1 7v1m0 3v1m1-12v1m1 6v1m1-19v1m0 5v1m2-9v1m13-136v1m3 0v1m18 146v3m2-30v4m1-4v4m0 37v1m1-42v4m1-4v4m1-4v4m1-4v4m1-4v4m1-4v4m1-124v1m0 119v4m1-4v4m1-4v4m1-4v4m21-133v37m0 3v12m0 1v41m7-94v98m4 17v1m0 3v1m0 2v2m1-20v2m0 7v1m2-12v1m3-1v2m4-2v3m12 2v1m0 3v3m11-1v2m3-29v2m0 3v2m0 22v1m0 27v1m0 7v1m0 4v2m0 5v1m0 6v1m1-12v1m1-152v2m1-2v2m0 132v1m0 6v1m0 20v1m1-163v2m0 148v1m1-98v1m0 21v1m0 29v1m1-75v1m0 13v1m0 57v1m0 37v1m1 6v1m0 12v1m1-96v1m0 81v1m1-102v1m0 14v1m0 3v1m0 47v1m0 32v1m1-101v1m0 14v1m0 3v1m0 16v1m0 30v1m0 32v1m3-4v2m1 9v1m1-156v2m0 125v1m0 5v1m0 20v1m1-139v1m0 28v1m0 87v1m0 19v1m2-13v1m1-11v1m0 7v1m1-15v1m0 35v1m1-35v1m0 20v1m0 1v1m1-31v1m0 15v1m1-5v1m0 15v1m2-29v1m1 10v1m0 24v1m1-40v1m0 3v1m0 1v1m0 32v1m1-18v1m2 2v1m1-20v1m0 25v2m1-45v1m0 4v1m0 8v1m0 27v1m1-31v1m0 1v1m0 9v1m0 15v1m1-38v1m0 11v2m0 1v1m0 9v2m0 6v1m0 6v1m1-82v2m1-3v6m1 52v1m0 8v1m0 14v2m0 4v1m0 1v1m7-130v1m1-1v1m1-1v1m1-1v1m17 91v1m0 4v1m1-6v1m0 4v1m1-6v1m0 4v1m1-6v1m0 4v1m1-5v1m0 2v1m13-7v1m0 9v3m0 4v4m4-7v3m1-3v3m1-3v3m1-3v3m1-3v3m1-134v1m0 130v3m1-3v3m1-134v1m0 130v4m1-4v3m1-3v3m1-3v3m1-3v4m0 26v1m1-31v3m1-3v3m1-3v3m1-3v3m1-1v1m1 0v1m7-112v1m1 1v1m0 1v1m5 14v2m20-45v1m11-1v2m64 22v1m2-4v1m6-9v1m1-1v1m2-3v1"/><path stroke="#e4ff00" d="M249 335v1m9-5v1m0 25v5m0 2v1m9-2v1m2 1v1m3 0v1m1-12v2m28-11v1m8-3v1m1 2v1m3 24v1m1-32v1m1 0v1m1-7v1m0 35v1m1-37v1m3 32v1m4-6v1m0 2v1m2-2v1m1-7v1m3 5v2m1-16v1m0 3v1m0 8v1m1-17v1m1-5v1m0 5v1m1-8v2m1-5v1m12-130v1m1-2v1m20 140v1m0 11v1m9-154v1m4-1v1m1 0v1m20 27v3m0 12v1m0 41v7m7-3v1m4 19v1m0 5v2m1-12v1m2-12v1m0 4v4m3-8v1m0 4v2m4-6v1m12 2v1m0 1v1m0 3v3m5-117v37m0 3v45m0 3v2m0 3v2m6-10v1m0 22v1m1 4v2m2-19v2m0 3v2m0 7v1m0 14v1m0 12v1m0 3v1m0 1v1m0 5v1m0 1v1m0 5v1m2-1v2m1-2v1m1 12v1m1-139v2m0 7v2m0 3v2m0 7v3m0 3v2m0 3v2m0 9v2m0 4v2m0 3v3m0 65v1m0 11v1m1-132v1m0 103v1m0 5v1m0 7v1m0 11v1m0 1v1m1-3v1m1-118v1m0 3v1m0 23v1m0 42v1m0 17v1m0 26v1m1-123v2m0 7v1m0 3v2m0 2v3m0 2v1m0 5v1m0 3v3m0 2v3m0 2v3m0 8v1m0 41v1m1-62v1m0 87v1m1-117v1m0 3v1m0 18v1m0 16v2m0 29v1m1-115v2m0 99v1m0 54v1m0 1v1m1-28v1m1 25v1m1-15v1m0 9v1m1-154v2m0 2v2m0 2v2m0 2v2m0 3v2m0 2v2m0 3v2m0 4v1m0 2v3m0 2v3m0 3v2m0 3v3m0 2v1m0 5v3m0 3v3m0 3v3m0 6v1m0 58v1m1-86v2m0 21v1m0 71v1m0 1v1m1-28v1m1 0v1m0 11v1m0 11v1m0 8v1m2-24v1m1-2v1m1 20v1m1-36v1m0 23v1m0 10v1m1-43v1m0 1v1m0 22v1m0 4v1m1-32v1m2 38v1m1-43v1m0 39v1m0 2v1m1-6v1m1-16v2m1-2v1m0 1v1m1-29v1m0 9v1m1-10v1m0 9v1m0 4v1m0 7v1m1-88v22m0 2v6m0 87v1m1-117v20m0 6v5m0 85v1m7-135v2m5-1v2m15-31v1m2-1v1m16 131v2m10-135v1m10 131v2m9-107v1m0 1v1m2 4v1m33-35v2m65 23v1m1-4v2m1-4v1m1-3v2m1-3v1m2-3v1m4-4v1"/><path stroke="#fbff00" d="M244 328v1m0 1v1m14-5v1m0 5v2m0 22v1m0 8v3m0 4v2m9-8v1m8-2v1m4-12v1m1 10v1m0 2v1m1-4v1m0 2v1m20-22v2m1-2v1m12 17v1m1-16v2m0 18v2m1-37v1m1-2v1m1 36v1m1-2v1m1 0v1m1-4v1m0 1v1m1-5v1m0 7v1m3-10v1m1-6v1m1 1v1m1-2v1m1-7v1m0 5v1m0 5v1m1-14v1m0 3v1m2-9v1m0 2v1m1-8v5m15-139v1m1-2v1m53 92v1m7-3v1m0 4v6m4 6v2m1-3v1m0 4v3m2-19v1m0 2v1m0 4v3m1-115v37m0 3v57m2 8v1m0 2v1m0 2v3m4-5v5m1-114v100m1-100v98m1-98v37m0 3v12m0 1v40m1-93v37m0 3v12m0 1v39m2-92v37m0 3v11m0 3v37m3-91v37m0 3v11m0 3v37m1-91v99m1-99v100m1 9v1m0 7v1m1-118v37m0 3v11m0 3v37m4-54v3m0 58v2m0 3v2m1-105v37m0 3v45m0 3v2m0 3v2m5-5v1m0 4v1m0 4v1m0 8v1m0 8v1m1-34v1m0 4v1m0 17v1m2-3v2m0 3v2m0 7v1m0 18v1m0 9v1m0 5v1m0 6v1m4 7v1m1-120v1m0 45v1m1 48v1m2-102v2m0 2v1m0 2v1m0 5v2m0 2v3m0 2v2m0 2v1m0 5v2m0 3v3m0 2v3m0 2v1m0 5v1m0 69v1m1-168v34m0 6v2m0 6v1m0 1v1m0 16v1m0 23v1m0 2v1m0 30v1m0 18v1m1-101v2m0 4v1m0 2v1m0 3v2m0 2v3m0 2v1m0 4v2m0 3v2m0 3v3m0 2v3m0 2v1m0 2v1m0 2v1m0 67v1m1-88v1m0 74v1m1-2v1m1 10v1m3-75v1m0 4v2m0 39v1m1 34v1m1-12v1m2-15v1m0 11v1m1-2v1m2-26v1m1 9v1m1-3v2m0 10v1m0 12v1m1-15v1m1-14v1m0 12v1m0 11v1m1-42v1m0 2v1m0 22v2m1-4v1m1-25v1m0 10v1m0 10v1m0 1v1m0 12v1m1-30v1m1 11v1m1-31v1m0 26v2m1-17v1m0 2v1m0 27v2m1-156v36m0 3v12m0 1v1m0 30v2m1-85v36m0 3v12m0 1v2m0 31v4m7-51v1m5-3v1m16 91v4m1-4v4m1-4v4m1-4v4m23-125v1m1 0v1m11 131v2m11-101v1m102-19v1m2-3v1"/><path stroke="#fff700" d="M244 329v1m9 9v2m1-2v2m4-7v1m0 20v1m10 10v1m14-10v1m3-5v1m26-11v1m0 2v1m2 26v1m2-163v2m0 139v3m0 14v1m5 0v1m1-2v1m1-1v1m1 4v1m2-11v1m2-4v1m1-3v2m1 7v2m2-17v3m1-5v2m2-12v1m1 1v1m14-132v1m1-2v1m18 139v1m0 13v3m34-63v1m7-3v4m0 6v1m3-111v101m1 25v1m1-8v1m0 3v3m2-21v2m0 8v1m1-79v3m0 57v6m2 3v2m0 6v2m3-116v37m0 3v11m0 3v36m1 16v1m0 1v1m0 5v3m1-17v5m1-7v6m1-67v3m0 12v1m0 40v9m1-65v3m0 12v1m0 39v9m1-101v100m1-63v3m0 11v3m0 37v10m1-101v37m0 3v12m0 1v40m1-93v37m0 3v12m0 1v40m1-56v3m0 11v3m0 37v10m1-2v6m1-5v6m1 12v1m1-82v3m0 11v3m0 37v12m5-66v3m0 58v2m0 3v2m5 0v1m1-11v1m0 4v1m0 8v1m0 8v1m2-3v2m0 22v2m0 11v2m3 16v1m2-98v1m0 21v1m0 5v2m1-96v2m0 112v1m0 20v1m2-143v35m0 5v2m0 11v1m0 14v1m0 3v1m0 21v1m0 30v1m1-92v1m0 4v1m0 31v1m0 21v1m0 4v3m1-101v34m0 5v3m0 10v1m0 40v1m0 4v1m0 1v1m0 7v1m0 16v1m1-82v2m0 7v1m0 3v2m0 2v3m0 7v2m0 3v2m0 3v3m0 2v2m0 1v1m0 3v2m0 2v1m0 10v1m0 33v1m0 22v1m3-25v1m1 7v1m0 12v1m1-2v1m1-2v1m2-3v1m4-5v1m1-28v1m0 25v1m1-17v1m4 19v1m3-41v1m1-3v1m1-8v1m0 5v1m0 35v1m1-100v1m0 33v2m1-36v1m0 37v3m8-56v3m1-3v3m1-3v3m1-3v3m17-32v1m1-1v1m37 131v1m10-102v1m1 4v1"/><path stroke="#ffee00" d="M258 330v1m0 4v2m0 17v1m9 9v1m12-8v1m9-7v1m22-9v1m0 2v1m1-3v1m2 29v1m1-35v1m0 25v1m0 1v1m0 2v1m0 2v1m1-40v1m0 19v3m0 10v1m2 3v1m0 1v1m1-2v1m1-3v2m4-9v1m0 4v1m0 2v1m1-8v2m2-2v1m0 5v2m4-18v3m5-16v1m33 29v2m10-163v1m1 0v1m1-2v1m22 94v1m0 5v1m6-110v97m1 14v1m3-11v1m0 4v4m1 45v4m0 7v1m1-51v1m0 9v1m1-127v101m2 2v1m0 5v2m1-111v37m0 3v57m1 19v1m1-117v99m1-99v102m1-65v3m0 11v3m0 36v12m1 5v1m0 9v1m1-13v1m1-2v2m1-4v3m1-4v4m1-5v5m1-4v4m1-68v3m0 12v1m0 40v9m1-65v3m0 12v1m0 40v9m1-1v5m1-1v2m1-1v1m1 12v1m0 3v5m1-25v3m1-106v37m0 3v11m0 3v31m0 3v2m1-90v85m0 3v2m0 3v2m2-10v1m0 4v1m0 4v1m0 17v2m1-30v1m0 4v1m4-91v85m0 3v2m0 3v2m0 3v2m0 3v1m1 15v1m0 4v1m1-20v1m2 15v2m0 3v2m0 3v1m0 4v1m0 8v1m0 13v1m0 1v1m5-144v1m0 3v1m0 14v1m0 66v1m0 3v1m0 2v1m1 57v1m1-28v1m1-103v1m0 9v1m0 48v3m0 5v1m0 12v1m0 20v1m1-89v1m0 15v1m0 35v1m0 1v1m1-73v1m0 13v1m0 18v1m0 31v1m0 6v1m0 32v1m1-140v34m0 5v3m0 10v1m0 13v1m0 21v1m0 3v1m0 5v1m0 1v1m0 24v1m1 38v1m4-128v2m1 100v1m3-7v1m2-4v1m4-5v1m1 22v1m0 11v1m2-42v1m1-3v1m1-2v1m0 40v1m1-2v1m1-46v1m1-106v2m0 98v1m0 7v1m0 8v1m0 28v1m1-67v1m1 4v4m28-88v1m48 30v2m1 1v1"/><path stroke="#ffe500" d="M258 211v2m0 124v1m9 27v1m1-2v1m17-9v1m26-12v1m3 21v1m0 1v2m1-30v1m0 16v1m1 14v1m1-39v1m0 37v1m5-7v2m4-8v1m3-6v1m0 3v1m50-150v1m2 0v1m15-2v2m0 95v4m6-5v1m0 3v1m0 1v1m6-14v2m0 5v4m1 4v1m0 4v4m3-19v1m0 2v1m0 4v3m1-105v2m0 149v1m0 5v1m0 1v1m1-51v2m0 38v2m1-58v2m1 13v1m0 3v6m1-22v1m0 3v1m0 2v4m1-78v3m0 57v7m1 18v3m1-26v5m1-2v3m1-3v3m1 18v3m1-16v5m1-5v3m1-8v1m1-1v1m1-1v1m1-1v1m1-4v4m1-4v4m1 0v1m1 4v4m1-8v1m0 3v5m1 12v3m1-25v1m0 5v1m1-76v3m0 11v3m0 31v3m0 2v1m0 2v3m0 2v2m1-15v1m0 4v1m0 7v2m0 3v2m1-105v37m0 3v45m0 3v2m0 3v2m1 5v1m0 4v1m1-11v1m0 4v1m0 12v2m1-115v37m0 3v45m0 3v2m0 3v2m2-95v85m0 3v2m0 3v2m0 3v2m1-15v1m0 4v1m0 13v1m1 5v1m0 4v1m0 7v1m0 4v3m1-12v1m0 3v2m0 3v2m1-130v86m0 2v2m0 3v2m0 3v2m0 3v2m1 43v1m0 11v1m1-3v1m1-15v1m2 2v1m1-96v1m0 56v2m0 4v2m0 5v3m3-89v1m0 35v1m0 31v3m0 14v1m0 6v1m1-93v1m0 13v1m0 53v1m0 1v1m0 9v1m1-24v1m0 10v3m1-7v1m0 6v1m5-43v1m0 1v1m5 65v1m1-2v1m1-2v1m0 33v1m2-39v1m2-4v1m3-4v1m2-5v1m1-4v1m1 22v1m1-101v3m0 49v2m1-54v3m0 57v5m75-65v1m0 1v1"/><path stroke="#ffdb00" d="M258 338v1m0 9v6m10 11v1m7 2v1m7-15v1m6-3v1m22-9v2m4-10v1m0 35v1m1-14v4m0 9v1m1 1v1m2-3v1m16-31v2m62-42v6m6 0v3m6-9v1m0 3v1m0 4v2m1 6v1m0 4v1m1-122v37m0 3v57m1-97v100m1 3v2m0 8v1m1 18v1m0 21v1m0 5v1m1-34v1m0 28v1m0 2v2m0 5v3m1-66v1m0 3v7m1 12v2m1-23v3m0 7v1m1-12v1m0 4v3m1 5v1m0 3v1m0 3v3m1-24v1m0 5v2m1-7v1m0 4v3m1-8v1m0 4v3m1 5v1m0 3v1m0 3v3m1-23v1m0 2v1m0 5v2m1-11v1m0 2v1m0 3v4m1-11v1m0 3v5m1-9v1m0 3v5m1-9v1m0 3v4m1-8v1m0 3v5m1-9v1m1-1v1m1 4v5m1-9v1m0 2v1m0 4v3m1-8v1m0 5v2m1 2v1m0 1v1m0 40v9m1-65v1m0 2v2m0 1v4m1-26v2m0 3v2m0 2v1m0 2v3m1-20v2m0 7v1m0 4v1m1-64v3m0 45v3m0 2v1m0 4v1m0 2v2m0 3v2m1-19v2m0 20v2m0 8v1m1-33v2m0 17v1m0 2v1m0 9v1m1-82v3m0 45v3m0 2v1m0 4v1m0 2v2m0 3v2m1-105v91m0 2v2m0 3v2m1-15v3m0 2v1m0 4v1m0 7v2m1-19v2m0 7v1m0 4v1m0 12v2m1-29v2m0 4v1m0 44v1m0 26v8m1-86v2m0 22v1m0 4v1m0 14v1m1-45v2m0 2v1m0 4v1m0 4v1m4 47v1m2-137v1m0 13v1m0 12v1m0 33v1m3-21v1m0 40v1m0 21v1m1-24v1m0 19v1m0 3v3m0 3v3m0 4v3m0 3v3m1-26v1m0 2v1m0 12v1m0 14v1m1-41v1m0 1v1m1 36v1m3-7v1m1-49v1m2 49v1m6-11v1m3 6v1m2-15v1m1-3v1m1 24v1m3-6v1m0 11v1m0 5v1m0 11v1m1-80v2m0 8v1m1 0v3m75-67v1"/><path stroke="#ffd200" d="M258 327v1m0 11v1m0 7v1m21 7v1m1 10v1m1-1v1m1-11v1m3-3v1m29 18v1m1-34v1m0 22v1m0 3v1m0 6v1m8-2v1m3-10v1m3-8v1m0 1v1m51-148v1m22 101v1m5-112v96m1 4v3m0 7v1m1 2v1m0 1v1m0 6v1m1-86v3m0 57v3m0 6v2m1-8v1m0 5v5m1 3v1m0 4v5m1 3v1m0 8v1m0 10v2m0 15v1m0 3v1m1-14v1m1-52v1m0 1v1m0 7v1m1 2v1m0 1v1m0 37v4m0 7v1m1-53v1m0 4v5m1-18v1m0 3v4m1 4v1m0 7v1m0 31v2m1-57v1m0 2v2m0 2v4m1-8v2m0 3v3m1-7v1m0 3v3m1 5v1m0 7v1m0 30v5m1-58v2m0 8v1m1-11v2m0 8v1m1-11v1m0 1v1m0 5v3m1-11v1m0 1v1m0 5v3m1-11v1m0 1v1m0 4v3m1-10v1m0 1v1m0 5v3m1-8v5m1-5v6m1-9v1m0 2v1m0 5v2m1-10v2m0 8v1m1-11v2m0 8v1m0 5v3m1-6v1m0 15v1m0 5v1m0 5v2m0 4v2m0 5v1m1-55v2m0 7v2m1-18v2m0 3v1m0 6v2m1-24v2m0 3v2m0 7v1m0 7v2m1-24v2m0 3v2m0 2v1m0 4v1m1-15v2m0 3v2m0 12v1m0 4v1m0 3v1m0 3v2m0 3v2m1-39v2m0 3v2m0 11v2m0 4v1m0 8v1m0 3v2m1-39v2m0 3v2m0 2v1m0 4v1m0 7v1m1-23v2m0 2v3m0 2v1m0 2v2m1-14v2m0 3v2m0 2v1m0 4v1m0 7v2m1-24v2m0 3v2m0 7v1m0 12v1m1-28v1m0 4v2m0 27v1m0 17v1m0 6v1m0 5v2m0 5v1m1-73v2m0 3v2m0 39v1m0 12v1m0 6v1m0 6v8m1-81v2m0 3v2m0 7v1m0 7v2m6-86v1m0 8v1m0 56v1m3 17v1m0 3v3m0 3v3m0 3v4m0 3v3m1-100v1m1-1v1m0 29v1m0 47v3m0 3v3m0 4v3m0 3v2m1-103v1m0 3v1m0 9v1m0 55v1m0 7v1m0 2v1m0 12v1m15 10v1m6-26v1m3-23v8m0 1v2m0 1v1m1 0v1"/><path stroke="#ffc900" d="M258 328v2m0 10v2m0 3v2m21 9v1m1 10v1m1-1v1m4-13v1m29-17v1m1 24v1m0 1v1m8-2v1m0 2v1m3-7v2m3-6v1m72-156v100m2-100v95m0 4v3m1-102v94m1-94v95m0 7v3m1-105v37m0 3v11m0 3v35m1 7v2m0 5v5m1 3v1m0 4v5m1-7v1m1-15v1m0 3v2m0 2v4m1-11v1m0 3v1m0 5v2m1 5v1m0 5v1m1 17v2m0 17v1m1-25v1m0 5v1m0 4v1m0 12v1m0 3v1m1-61v1m0 9v1m0 4v6m1-8v1m0 42v1m0 5v1m0 1v1m1-50v1m0 5v2m1-23v3m0 8v1m0 5v1m1-5v2m0 38v2m0 2v2m0 5v3m1-66v2m0 8v1m1-11v2m0 8v1m1-11v3m0 7v1m1 2v2m0 20v1m0 11v1m0 11v1m0 5v1m1-54v1m0 3v7m1-11v1m0 4v6m1-21v1m0 15v1m1-17v1m1-1v1m0 8v1m1-10v1m0 9v1m1-12v1m0 1v1m0 5v3m1-11v1m0 1v1m0 6v2m1-10v2m0 8v1m0 5v2m1-3v7m1-11v1m0 3v1m0 3v4m1 11v1m1-19v3m1-20v1m0 2v3m0 2v1m1-15v2m0 3v3m0 1v1m0 4v1m0 2v1m1-18v2m0 3v2m0 5v2m1-14v2m0 3v2m0 22v1m0 33v8m1-71v2m0 3v2m0 11v1m0 3v1m0 6v1m0 33v8m1-71v2m0 3v2m0 6v1m1-14v2m0 2v3m0 5v2m1-14v2m0 3v2m0 7v1m0 2v1m1-18v2m0 3v5m0 4v1m0 8v1m0 3v1m1-28v2m0 3v2m0 12v1m0 17v1m0 5v1m0 6v1m1-51v2m0 3v2m0 12v1m0 4v1m0 12v1m0 4v2m0 6v1m0 4v1m0 6v1m1-63v2m0 3v3m0 6v1m0 2v1m1 27v1m1-3v1m4-131v1m0 13v1m0 24v1m0 18v1m3 66v1m0 5v1m1-34v1m0 26v1m1-104v1m0 13v1m0 61v1m0 25v1m1-71v1m0 43v1m0 4v3m0 3v3m0 4v3m0 3v2m2 0v1m3-73v1m0 21v1m1-81v2m5 157v1m1-24v1m11-19v1m0 9v1m0 2v1m0 13v1m1-50v1m0 1v1m1-2v1"/><path stroke="#ffbf00" d="M258 342v3m17 21v1m7-12v1m33 9v1m0 7v1m84-171v98m1-98v100m1 0v1m1 11v1m0 52v7m1-77v1m0 2v1m0 3v1m1-9v1m0 5v4m1-9v1m0 4v2m0 3v2m1-70v3m0 11v3m0 35v7m0 7v3m1-8v1m0 3v1m0 5v1m1 6v1m1 7v1m0 28v3m1-54v1m0 1v1m0 8v1m0 6v1m1-18v3m0 8v1m0 5v4m1-8v1m0 1v1m0 7v1m0 30v1m1-24v1m0 3v1m0 8v1m0 6v1m0 8v2m1-32v2m0 15v1m0 4v1m0 14v1m1-44v1m1 1v1m0 21v1m0 5v1m0 5v1m0 7v1m1-54v1m0 10v1m0 29v4m0 7v1m1-49v1m0 1v5m1 1v1m0 16v1m0 4v1m1-35v1m0 4v6m1-11v1m0 4v7m1-12v1m0 4v7m1 1v1m0 5v1m0 10v1m0 11v1m0 10v1m1-42v1m0 30v6m1-44v1m0 6v1m0 31v4m1-47v1m0 3v2m0 1v5m1-12v1m0 4v7m1-12v1m0 4v6m1-6v7m1-22v1m0 9v1m0 5v1m1-17v1m0 9v1m0 5v2m1-3v1m0 2v5m1-12v1m0 2v1m0 7v1m0 31v10m1-50v1m0 14v1m0 24v10m1-41v1m0 4v1m0 1v1m1-20v1m0 3v1m0 3v4m1-23v2m0 6v3m0 5v1m1-16v1m0 1v2m0 10v2m0 3v2m1-22v1m0 1v3m0 2v1m0 2v1m1-8v2m0 4v1m0 7v1m0 11v1m0 5v1m0 6v1m0 5v1m0 6v1m1-53v2m0 12v1m0 11v1m0 5v1m0 6v1m0 5v1m0 6v1m1-56v1m0 1v3m0 2v1m0 2v1m0 5v1m1-15v3m0 2v1m0 2v1m1-11v5m0 11v1m0 3v2m1-19v2m0 6v1m0 3v1m0 1v1m0 3v2m0 33v8m1-61v2m0 4v1m0 24v1m1-32v2m0 4v1m1-9v4m0 6v1m0 4v1m0 3v3m1 1v3m0 12v1m3-4v1m0 2v1m5-109v1m0 53v1m1 73v1m2-130v1m0 30v1m0 95v1m8-28v1m16-32v1"/><path stroke="#ffb600" d="M314 337v1m1 1v1m84-39v3m1-1v1m2 43v1m0 19v1m1-69v2m0 5v2m0 6v1m1-17v1m0 3v1m0 4v2m1-10v1m0 2v1m0 7v1m0 6v2m1-20v1m0 4v2m0 3v2m1-9v3m0 7v1m0 6v3m1-7v1m0 1v1m0 6v1m1 33v1m0 6v2m1-62v1m0 15v1m0 1v3m1-5v1m0 4v1m1-8v1m0 37v2m0 1v2m0 6v2m1-36v1m0 3v1m0 8v1m0 4v1m1-14v1m0 7v1m0 2v1m0 14v1m0 1v1m1-49v1m0 2v1m0 7v1m0 28v5m0 6v2m1-35v1m0 3v1m0 10v1m0 16v1m1-49v2m0 30v1m0 6v1m0 4v1m0 5v1m0 1v1m1-54v1m0 2v1m0 7v1m0 29v5m0 6v2m1-36v1m0 3v2m0 16v1m0 6v1m0 3v1m1-48v1m0 6v1m0 31v3m1-42v1m0 7v1m0 30v4m0 7v1m1-54v1m0 2v1m0 7v1m0 30v4m0 7v1m1-37v1m0 4v1m0 7v1m0 3v1m0 13v1m1-48v1m0 1v1m0 8v1m0 5v1m0 4v1m0 11v1m0 17v1m1-51v1m0 8v1m0 5v1m0 23v1m0 4v1m0 5v1m1-11v5m1-44v1m0 7v1m0 30v6m1-45v1m0 6v2m0 31v5m1-48v1m0 2v1m0 7v1m0 31v5m1-44v1m0 1v5m1-7v1m0 2v4m1-11v1m0 2v1m0 32v1m0 6v7m1-32v1m0 5v1m0 5v1m0 5v1m1-36v1m0 22v1m0 5v2m0 4v2m1-13v1m0 6v1m0 2v1m0 6v1m1-40v1m0 14v1m0 5v1m0 19v9m1-53v1m0 3v1m0 1v6m1-15v2m0 1v1m0 1v2m0 2v1m0 4v1m0 25v1m0 6v9m1-63v1m0 6v2m0 3v5m0 2v2m1-14v1m0 3v3m0 15v1m0 18v1m1-42v2m0 2v3m0 15v1m0 12v1m0 5v1m1-49v1m0 6v2m0 1v1m0 1v3m0 1v1m0 2v3m1-23v2m0 6v2m0 3v2m0 1v2m0 2v3m1-15v2m0 1v1m0 1v3m0 1v1m0 4v1m0 6v1m0 26v8m1-56v2m0 2v3m0 14v1m0 5v1m0 6v1m0 5v2m0 5v1m1-48v1m0 4v2m0 26v1m0 2v1m0 2v1m0 2v1m0 3v1m1-47v1m0 4v2m0 19v1m0 6v1m0 5v1m0 2v1m1-43v2m0 3v3m0 1v1m0 11v1m0 26v8m1-37v1m10-98v1m1 11v1m0 87v1m2 3v1m3-3v1m1-5v1m10 12v1m4-31v1m2-5v1m1-6v1m0 23v1m0 3v1m1-10v2m0 10v1m0 2v6m0 6v7m0 1v7m1-64v1m0 20v1m0 1v1m0 8v11m0 5v2m0 1v4m0 1v8"/><path stroke="#ffad00" d="M314 338v1m9 27v2m75-165v97m1 4v1m2-1v1m0 5v1m1 5v1m0 31v1m0 17v1m1-54v1m0 1v1m1-17v3m0 7v1m0 5v2m1-17v2m0 14v1m0 2v1m1-20v1m0 2v1m0 7v1m0 6v2m1-7v1m0 4v1m0 3v1m1-7v1m0 37v3m0 17v1m1-28v1m0 6v1m0 4v1m0 14v1m1-59v1m0 3v1m0 5v1m1-10v1m0 2v1m0 6v1m0 29v3m1 7v1m1-31v1m0 10v1m0 23v1m1-42v1m0 5v1m0 3v1m0 24v1m1-47v2m0 30v1m0 11v1m0 7v1m1-37v1m0 5v1m0 4v2m0 17v1m1-30v1m0 4v1m0 5v1m0 17v1m0 3v1m1 3v1m1-38v1m0 15v1m0 1v1m1-35v1m0 1v1m0 8v1m0 29v1m0 3v1m0 6v2m1-54v1m0 33v1m0 6v1m0 4v1m0 5v1m1-12v1m0 4v1m0 5v1m1-29v1m0 26v1m1-50v1m0 27v1m0 10v1m0 6v1m0 3v1m1-52v2m0 20v2m0 5v1m0 4v2m0 11v1m1-48v1m0 1v1m0 8v1m0 5v1m0 5v1m0 5v1m0 5v1m0 5v1m0 5v1m0 4v1m1-53v1m0 1v1m0 14v1m0 5v1m0 11v1m1-36v1m0 22v1m0 11v1m0 6v1m1-20v1m0 6v1m0 11v1m0 5v1m1-49v1m0 2v1m0 7v1m0 31v5m1-48v1m0 2v1m0 7v1m0 18v1m0 5v1m0 6v6m1-31v1m0 4v2m0 5v1m0 19v1m0 1v1m1-52v2m0 14v1m0 5v1m0 7v1m0 5v1m0 4v1m1-41v1m0 9v1m0 4v1m0 5v1m1-2v1m0 15v1m1-38v1m0 28v2m0 4v2m0 5v1m1-41v1m0 14v1m0 5v1m0 6v1m0 5v1m0 6v9m1-52v1m0 5v2m0 9v1m0 5v1m0 6v1m1-32v2m0 5v2m0 2v1m0 25v1m0 6v9m1-46v2m0 14v1m0 1v1m0 4v1m0 1v1m0 3v1m0 6v1m1-37v2m0 14v1m0 1v1m0 4v1m0 5v1m0 6v1m1-43v1m0 5v2m0 9v1m0 5v1m0 6v1m0 5v1m0 6v9m1-53v2m0 2v1m0 2v2m0 9v1m0 26v8m1-52v1m0 5v2m0 15v1m0 6v1m0 5v2m0 5v1m1-38v2m0 10v1m0 5v1m0 6v1m1-26v2m0 11v1m1-14v2m0 11v1m0 12v1m0 9v1m1-43v1m0 5v2m0 10v1m0 4v1m0 6v2m0 4v2m0 5v1m6-148v1m0 100v1m3-81v1m0 72v1m0 1v1m1-75v1m1 100v1m1-104v1m0 74v1m9 23v1m2-3v1m13-6v1m0 2v1m0 18v1m1-1v1m0 3v1"/><path stroke="#ffa300" d="M275 367v1m40-32v1m82-134v37m0 3v12m0 1v41m1 3v1m1 4v1m1-2v1m0 2v2m1-4v2m0 1v2m0 1v1m1 34v1m0 2v1m0 6v1m1-49v1m0 3v1m0 3v1m1-3v1m0 2v1m1-7v1m0 3v1m1-15v2m0 14v1m0 2v1m1-7v1m0 2v1m0 5v1m0 30v1m0 19v1m1-50v1m0 31v1m0 6v2m1-34v1m0 31v1m0 2v1m1-49v1m0 36v4m1-42v2m0 36v1m0 3v1m0 6v2m1-40v1m0 20v1m0 5v1m0 5v1m0 7v1m1-40v1m1 6v1m0 9v2m1-14v1m0 21v1m0 10v1m1-30v1m0 17v1m0 9v1m1-28v1m0 12v1m0 4v1m0 14v1m1-54v2m0 14v1m0 4v1m0 11v1m0 5v1m0 5v1m0 4v1m1-24v1m0 1v1m0 17v1m0 1v1m1-49v1m0 15v1m0 4v1m0 11v1m0 5v1m0 5v1m0 4v1m1-51v2m0 14v1m0 4v1m0 6v1m0 10v1m0 10v1m1-51v2m0 14v1m0 5v1m0 5v1m0 4v2m0 11v1m1-29v1m0 16v1m0 3v1m0 8v1m1-33v1m0 6v1m0 4v1m0 4v1m0 1v1m1 15v1m1-51v1m0 20v1m0 11v1m0 13v1m1-48v1m0 16v1m0 10v2m0 10v1m0 6v1m0 3v1m1-52v2m0 14v2m0 10v2m0 5v1m0 11v1m1-48v2m0 14v2m0 16v2m1-19v1m0 4v1m0 6v1m0 5v1m0 5v1m0 5v1m1-31v1m0 4v2m0 17v1m0 6v1m1-49v2m0 9v1m0 4v1m0 13v1m0 3v1m0 1v1m0 4v1m0 8v1m1-40v1m0 6v1m0 15v1m1-17v1m0 15v1m0 6v1m1-23v1m0 8v1m1-28v1m0 9v1m0 6v1m0 3v1m1-23v2m0 33v1m0 6v1m1-32v1m0 6v1m0 3v1m0 6v1m0 5v1m0 6v1m1-26v1m0 5v1m0 6v1m3-13v1m0 12v1m0 5v1m1-15v1m0 6v1m0 5v2m0 5v1m1-26v1m0 5v1m0 6v1m2-11v1m0 3v1m2-2v1m2 0v1m3-2v1m1-125v1m0 3v1m0 121v1m4-110v1m0 72v2m7 25v1m7-8v1m11-20v1m0 1v1m1 18v1m0 7v1m1-33v1m0 22v1"/><path stroke="#ff9a00" d="M397 240v3m0 12v1m0 41v3m2 6v1m1-2v2m1 0v1m0 58v9m1-52v1m0 13v2m0 11v1m0 4v1m0 9v1m1-57v3m0 57v6m1-65v1m0 2v1m0 4v1m0 52v4m1-63v3m0 5v1m0 30v2m0 18v4m1-63v1m0 3v1m0 4v1m1-7v2m0 36v1m0 1v1m0 7v1m0 9v1m1-28v1m0 6v1m0 4v1m0 14v1m1-47v1m0 14v1m0 3v1m0 13v1m0 2v1m1-47v2m0 8v1m0 27v1m0 10v2m1-40v1m0 20v1m0 11v1m0 4v1m1-22v1m0 3v1m0 13v1m0 2v1m1-23v1m1 0v1m0 7v1m0 19v1m1-43v1m0 9v1m0 5v1m0 3v1m0 13v1m1-28v1m0 10v1m0 1v1m0 2v1m0 12v1m0 6v1m1-43v1m0 5v1m0 13v1m0 16v1m1-38v1m0 5v1m0 9v2m0 3v1m1-15v1m0 1v1m0 27v1m1-21v1m0 4v1m1-16v1m0 4v1m0 23v1m1-36v1m0 5v1m0 3v1m0 28v1m1-31v1m0 9v1m0 1v1m0 16v1m1-32v1m0 2v1m0 26v1m1-33v1m0 1v1m0 9v1m0 1v1m0 9v1m0 7v1m1-31v1m0 11v1m1-9v1m0 11v1m0 1v1m1-15v1m0 18v1m0 10v1m1-31v1m0 1v1m0 4v1m0 11v1m0 7v1m0 2v1m1-52v2m0 14v1m0 6v1m0 10v1m0 13v1m1-49v2m0 14v1m0 13v1m0 3v1m1-17v1m1 2v1m1 2v1m0 6v1m1-12v1m0 11v2m1-18v1m0 7v1m0 6v1m1-21v1m0 6v1m0 3v1m0 6v1m1-6v1m0 6v1m0 5v1m1-20v1m0 10v1m0 1v1m0 3v1m0 1v1m0 4v1m1-24v1m1-1v1m0 12v1m1-11v1m0 1v1m0 4v1m0 5v1m1-18v1m0 5v1m0 6v1m1-10v1m0 6v1m0 5v1m1-14v1m0 6v1m0 5v1m0 6v1m1-23v1m0 12v2m1-14v1m0 3v1m0 7v2m1-13v1m0 15v1m3-12v1m3-135v1m0 3v1m0 3v1m0 3v1m2 119v1m1-108v1m1 90v1m0 11v1m1-105v1m0 72v1m1-74v1m3 103v1m4-6v1m16-25v1m0 22v1m1 2v1m0 12v1m1-15v1m0 14v1"/><path stroke="#ff9100" d="M397 300v1m2 6v1m0 54v13m1-66v1m0 54v11m1-63v1m0 33v1m0 18v1m1-49v1m0 14v1m0 3v1m0 8v1m0 5v1m0 2v1m0 2v1m1-41v1m0 30v2m0 18v1m1-58v2m0 37v2m0 18v1m1-18v1m0 16v1m1-58v1m0 1v1m0 6v1m0 29v2m0 18v3m1-19v1m0 15v1m1-10v1m1-29v2m0 11v1m0 4v1m0 7v1m0 11v1m1-26v1m0 11v1m0 4v1m1 3v1m1-36v2m0 2v2m1 1v1m0 11v1m0 1v1m1 0v1m1-20v1m0 2v1m0 12v1m0 14v1m0 4v1m1-42v1m0 6v1m0 10v1m1-15v1m0 12v1m0 17v1m1-25v1m0 23v1m0 2v1m1-38v1m0 10v1m0 6v2m0 6v1m1-21v1m0 2v1m0 1v1m0 5v1m0 17v1m0 2v1m1-39v1m0 15v1m0 4v1m0 1v1m1-6v1m0 9v1m0 7v1m1-36v1m0 6v1m0 7v1m0 3v1m1-2v1m0 19v1m1-30v1m0 11v1m1-22v1m0 3v1m0 19v1m0 3v1m0 10v1m1-40v1m0 11v1m0 24v1m1-38v1m0 11v1m0 9v1m0 14v1m1-38v1m0 6v1m0 11v1m0 2v1m1-23v1m0 16v1m0 1v1m1-20v1m0 6v1m0 9v1m0 7v1m0 12v1m0 1v1m1-31v1m0 6v1m1-5v1m0 3v1m0 2v1m1-11v1m0 6v1m0 8v1m2-4v1m0 2v1m0 3v1m1-26v1m0 7v1m0 6v1m0 5v1m1-22v1m1 5v1m0 1v1m1-4v1m0 10v1m0 1v1m1-14v1m0 12v1m0 3v1m1 3v1m1-21v1m0 6v1m0 5v1m0 6v1m1-1v1m1-24v1m0 12v1m0 5v1m1-28v1m0 4v1m1-6v1m0 4v1m0 3v1m1-2v1m0 9v1m0 2v1m0 2v1m12-46v1m6 28v1m2-3v1m15-24v1m1 18v1m0 5v1m1-8v1m0 18v1m0 1v1"/><path stroke="#ff8500" d="M398 301v1m0 22v2m1-18v1m0 17v1m0 15v1m0 18v1m1-52v1m0 33v1m0 18v1m1-19v1m0 1v1m1-24v1m0 6v1m0 1v1m0 1v1m0 16v2m1-4v1m0 16v1m1-49v1m0 29v1m0 2v1m0 6v1m0 9v1m1-49v1m0 28v1m0 3v1m0 5v2m1-48v1m0 39v2m0 6v1m1-39v1m0 20v1m0 6v1m0 4v1m0 4v1m0 1v1m1-39v1m0 4v1m0 9v1m0 3v1m0 13v1m0 2v1m0 3v1m1-34v2m0 8v1m0 1v1m0 16v1m1-20v1m0 17v1m0 6v1m1-35v1m0 9v1m0 3v1m0 6v1m0 6v1m0 2v1m1-22v1m0 6v1m0 12v2m1-33v1m0 39v1m1-40v1m1 11v1m0 1v1m0 17v2m2-28v1m0 2v1m0 3v1m0 3v1m0 16v1m1-28v1m0 17v1m1-20v1m0 15v1m1-24v1m0 3v1m0 22v1m1-19v1m0 8v1m0 17v1m0 1v1m1-23v1m0 4v1m1-18v1m1-4v1m0 19v1m0 6v1m0 9v1m1-38v1m0 23v1m0 12v2m1-30v1m0 2v1m0 3v1m0 4v1m0 15v1m1-34v1m0 2v1m0 11v1m0 19v1m1-33v1m0 11v1m0 19v1m1-15v1m0 12v1m1-32v1m0 2v1m0 14v1m0 3v1m0 10v1m1-31v1m0 28v1m1-27v1m0 6v1m0 1v1m1-15v1m0 13v1m0 3v1m1-19v1m0 13v1m1 6v1m1-22v1m0 1v1m1 12v1m1-16v1m0 14v1m2 3v1m0 2v1m1-31v1m0 8v1m1-2v1m0 12v1m2-14v1m0 12v1m0 5v1m1-28v1m1 16v1m0 10v1m1-1v1m1 2v1m2-16v1m6-5v1m1-2v1m2-32v1m1 27v1m1 0v1m3-3v1m3-1v1m17-5v1m0 17v1"/><path stroke="#ff7900" d="M315 338v1m82-17v4m1-3v1m0 2v1m0 2v2m0 29v15m1-66v1m0 15v1m0 4v3m0 8v1m0 1v2m0 5v1m0 9v1m1-27v1m0 8v1m0 1v1m0 16v1m1-50v1m0 40v1m0 9v1m1-43v1m0 11v1m0 4v1m0 24v1m1-26v1m0 7v1m0 3v1m0 5v2m1-6v1m0 14v1m1-27v1m1 8v1m0 9v1m0 9v1m1-28v1m1-11v1m0 12v1m0 4v1m0 7v2m0 10v1m1-32v1m0 2v1m0 23v1m1-36v1m0 3v1m0 9v1m0 6v1m0 9v1m0 9v1m1-38v2m0 11v1m0 12v1m1-28v2m0 8v1m0 1v1m0 6v1m0 15v1m1-18v1m1-13v1m1-8v1m0 2v2m0 10v1m0 6v1m1-23v1m0 10v1m0 10v1m1-19v1m0 10v1m0 7v1m1-20v1m0 10v1m0 1v1m0 2v1m0 12v2m1-34v1m1 14v1m0 1v1m0 2v1m0 12v2m1-34v1m0 2v1m0 12v1m0 6v1m0 9v1m1-31v1m0 1v1m0 2v1m0 11v1m0 12v2m2-31v2m0 10v1m1-13v2m0 3v1m0 6v2m1-14v1m0 11v1m0 18v1m1-30v1m0 6v1m0 4v1m0 6v1m0 9v1m1-35v1m0 4v1m0 28v1m1-30v1m0 29v1m1-18v1m0 15v1m1-19v1m0 1v1m0 6v1m1-22v1m0 20v1m1-21v1m0 11v1m0 7v1m1-21v1m0 11v1m1-18v1m0 9v1m0 12v1m1-11v1m0 3v1m1-14v1m0 1v1m0 19v1m1-21v1m0 10v1m0 8v1m1-23v1m0 14v1m1-24v1m0 8v1m0 4v1m0 2v1m0 4v1m1-18v1m0 8v1m0 2v1m0 4v1m0 7v1m1-31v1m0 26v1m1-28v1m0 7v1m0 12v1m0 5v1m1-28v1m0 4v1m0 4v1m1-6v1m0 3v2m0 3v1m0 7v2m1 6v1m1-14v1m0 12v1m1-31v1m0 4v1m0 4v1m0 3v1m5 0v1m1-3v1m5-2v1m1-4v1m3-2v1m22-4v1"/><path stroke="#ff6c00" d="M315 337v1m82-18v2m0 4v4m0 32v13m1-54v2m0 4v2m0 10v3m0 6v1m0 10v1m1-44v1m0 7v1m0 2v3m0 3v1m0 6v1m0 4v5m1-39v1m0 21v1m0 12v1m0 4v2m1-18v2m0 7v1m0 3v1m0 4v1m1-36v1m0 39v1m1-41v1m0 33v1m0 3v1m1-17v2m0 6v1m0 9v1m0 1v1m1-18v1m0 5v1m0 5v1m0 3v1m0 2v1m0 6v1m1-47v1m0 19v2m0 11v1m0 6v1m1-34v1m0 2v1m0 6v1m0 17v1m0 2v1m0 3v1m0 5v1m1-40v2m0 1v1m0 6v1m0 1v1m1-14v1m1-4v1m0 7v1m0 12v1m0 12v2m1-35v1m0 3v1m0 1v1m0 9v1m0 1v1m0 16v1m0 5v1m1-41v1m0 16v1m1-16v1m1-1v1m0 21v2m1-14v1m0 6v1m1-7v1m1 11v1m1-20v1m0 3v1m0 10v1m2-12v2m0 6v1m1-8v1m0 10v1m1-16v1m0 3v1m0 10v2m1-8v1m0 11v1m0 1v1m1-15v1m0 2v1m0 8v1m1 2v1m1-20v1m0 11v1m1-13v1m0 11v1m1-13v1m0 7v1m0 3v2m0 3v1m0 2v1m1-25v1m0 3v1m0 11v2m1-13v1m0 10v1m0 18v1m1-32v1m0 4v1m1-10v1m0 4v1m0 11v1m0 4v1m1-26v1m0 2v1m1-4v1m0 2v1m0 24v1m1-29v1m1-1v1m0 7v1m0 12v1m1-6v1m0 3v1m1-21v1m0 7v1m0 7v1m0 4v1m1-23v1m0 9v1m0 10v1m0 8v1m1-26v1m2-1v1m0 4v1m0 12v1m1-19v1m0 4v1m0 12v1m1-15v1m0 4v1m0 7v2m4-15v1m0 12v2m3-10v1m6-35v1m4 30v1m3-3v1m20 1v2m0 19v1m1-37v1m0 1v1m0 27v1m0 4v1"/><path stroke="#ff6000" d="M397 301v1m0 16v2m0 10v1m0 7v3m0 16v5m1-60v4m0 6v3m0 5v1m0 10v1m0 10v6m0 1v1m0 8v1m1-49v1m0 4v1m0 7v1m0 27v1m0 7v1m1-33v3m0 1v2m0 2v1m0 6v1m0 4v4m0 2v1m0 7v1m1-48v1m0 15v1m0 3v1m0 14v2m0 1v1m0 2v1m0 7v1m1-43v1m0 3v1m0 4v1m0 13v1m1-20v1m0 8v1m0 3v1m0 1v1m0 12v1m0 1v1m0 3v1m0 6v1m1-47v1m0 33v1m0 2v1m1-36v1m0 5v1m0 8v1m0 3v1m0 14v3m1-2v1m0 2v1m0 9v1m1-46v1m0 5v1m0 11v1m0 2v1m0 4v1m0 7v2m1-21v1m0 2v1m0 23v1m1-40v1m0 8v1m0 11v1m0 2v1m0 19v1m1-39v2m0 8v1m0 1v1m0 22v1m1-34v1m0 6v1m0 2v1m2-5v2m0 30v1m1-31v1m0 29v1m2-20v1m2-9v1m1-1v1m1 4v1m1-8v1m0 11v1m1 2v1m2-24v1m3 21v1m2-25v3m0 9v1m0 2v1m0 11v1m1-28v4m0 3v1m0 4v1m0 7v1m1-21v4m0 4v1m0 11v1m1-21v3m1-2v2m1-2v2m1-2v2m0 12v1m0 11v1m1-27v3m1-4v3m0 5v1m0 12v1m1-21v2m0 10v1m0 12v1m1-23v1m0 3v1m0 7v1m0 4v1m0 4v1m3-19v1m0 4v1m0 7v1m0 7v1m1-22v1m0 4v1m0 7v1m2-6v1m1 11v1m2-2v1m9-16v1m5-4v1m4-5v1m18-30v1m0 44v1m1-19v1m0 2v1"/><path stroke="#ff5400" d="M397 302v11m0 4v1m0 19v1m0 3v1m0 3v4m0 7v1m1-51v6m0 3v1m0 2v2m0 12v1m0 5v1m0 18v1m1-47v4m0 2v1m0 4v1m0 11v1m0 4v1m0 12v1m0 5v1m1-47v1m0 5v2m0 10v1m1-10v1m0 7v1m0 1v3m0 3v1m0 13v1m1-33v2m0 19v1m0 22v1m1-38v1m0 8v1m0 1v1m0 8v1m0 7v1m1-28v2m0 6v2m0 2v1m0 2v1m0 12v2m0 10v1m1-39v2m0 7v1m0 1v1m1-12v1m0 8v2m0 2v1m0 7v1m0 7v2m1-28v1m0 6v1m0 1v2m3-11v1m0 9v1m0 2v1m1 8v1m1-22v1m0 6v1m0 11v1m2-20v1m1-2v1m0 21v1m0 19v1m1-42v1m0 22v1m1-24v1m1-1v1m0 10v1m1 12v2m1 0v1m1-12v1m1-15v1m3 2v1m0 11v1m1 9v1m0 1v1m2-27v1m0 11v1m3 12v1m3-13v1m0 12v1m2-14v1m0 12v1m0 1v1m1-26v1m0 22v1m1-24v1m1 9v1m2 13v1m1-12v1m1 12v1m1-14v1m0 12v1m1-3v1m0 1v1m1-16v1m1-1v1m0 13v1m1-13v1m2-3v1m2-2v2m4-3v1m1-2v1m1-1v2m5-5v1m2-3v2m19-13v1m0 9v1m0 17v1"/><path stroke="#ff4800" d="M397 313v4m0 14v1m0 4v1m0 5v3m0 10v1m1-40v2m0 15v1m0 3v1m0 12v1m0 5v1m1-39v4m0 13v1m0 2v1m1-26v1m0 12v1m0 9v1m0 4v1m0 12v1m1-12v1m1-18v1m0 2v1m0 13v1m0 15v1m1-41v1m0 13v1m0 2v1m1-11v1m0 10v2m0 22v1m1-35v1m0 8v1m0 2v1m0 23v1m0 4v1m1-39v3m0 12v1m0 18v1m2-38v1m0 2v1m0 17v1m0 2v1m0 19v1m1-3v1m1-32v1m0 11v1m0 2v1m1-15v1m0 11v1m0 22v1m1-32v1m0 10v1m0 17v1m2-30v1m3-9v1m0 10v1m0 10v1m1-2v1m0 1v1m1-25v1m0 10v1m1-1v1m1-12v1m2 0v2m0 11v1m0 10v1m1 0v1m1-2v1m1-23v1m1-3v1m0 11v1m1-11v1m2 12v1m0 9v1m0 1v1m1-13v1m1-1v1m1-3v1m0 1v1m0 10v1m1-12v1m1-2v1m2-2v1m3 13v2m1-1v1m2-13v1m1 10v1m2-13v1m2 13v1m5-17v1m1-1v1m1-2v2m3-4v1m1-2v1m5-3v1m2-2v1m19-5v1"/><path stroke="#ff3d00" d="M397 335v1m0 13v1m0 4v1m1-21v3m0 14v1m0 3v1m1-20v2m0 15v1m0 3v1m1-41v1m0 2v1m0 39v1m1-46v1m0 4v1m0 1v1m0 15v1m0 17v1m0 5v1m1-36v2m0 12v2m1-19v1m0 16v1m0 23v1m1-45v1m0 25v1m1-4v1m0 3v1m1-25v1m0 15v2m1-13v1m0 4v1m0 15v1m0 15v1m0 3v1m1-35v1m1-8v2m0 9v1m0 9v2m1 21v1m5-29v1m0 10v1m1-23v1m0 9v2m1-2v1m0 11v1m2-22v1m1-2v1m0 1v1m0 20v1m1 1v1m1-12v1m0 9v1m1-12v1m1-13v1m0 23v1m1-25v1m0 24v1m1-26v1m0 11v1m0 1v1m1-13v1m0 23v1m1-26v1m1 23v1m2 1v1m1-15v1m0 12v2m1-1v1m1-1v1m3 0v1m1-1v1m1-29v1m3 26v1m1-1v1m4-13v1m4-2v1m10-6v1m23-7v2m1-4v1"/><path stroke="#ff3400" d="M397 332v3m0 18v1m1-2v3m1-1v3m1-43v3m0 8v1m0 11v1m0 2v1m1-13v1m0 13v1m1 17v1m0 1v1m1-36v1m0 32v1m1-32v1m0 4v1m0 8v1m1-21v1m0 7v1m1-4v1m0 20v1m0 19v1m1-44v1m0 20v1m1-9v1m0 9v1m0 18v1m1-31v1m0 31v2m1-43v1m0 40v1m1-41v1m0 1v1m0 20v1m0 17v1m1-41v1m0 21v1m0 20v1m3-41v1m0 8v1m0 11v1m3 1v1m1-12v1m2-11v1m0 21v1m1-13v1m0 12v1m3-13v1m1 12v1m1-12v1m0 10v1m1-1v2m1-1v1m7-12v1m0 11v1m2-1v1m1-27v3m0 24v1m1-29v4m0 10v2m1-16v4m0 10v2m1-16v4m1-4v4m1-4v4m0 24v1m1-29v4m0 10v1m0 13v1m1-29v4m1-4v4m1-4v4m0 10v1m0 13v1m36-7v1"/><path stroke="#ff2b00" d="M397 350v1m0 1v1m3-32v2m0 1v1m0 30v1m0 3v1m1-44v1m0 2v1m0 3v1m0 33v1m1 3v1m1-42v1m0 11v1m0 9v1m0 2v1m1-21v1m0 36v1m0 3v1m1-22v1m1-9v1m0 27v1m1-28v1m1-11v2m0 20v1m1-12v1m1 11v2m1-11v1m0 9v1m1-21v1m0 8v1m0 31v1m3-41v1m2 0v1m0 10v1m1-11v1m2 11v1m0 10v1m1-13v1m1-11v1m2-1v1m0 10v2m1-13v1m3 12v1m2 11v1m1-14v1m0 12v1m2-13v1m1-1v1m3 0v1m0 11v1m1-13v1m1 11v1m3 0v1m1-1v1m1-15v1m15-5v1"/><path stroke="#ff2200" d="M397 351v1m3-29v1m0 14v2m0 16v1m1-40v2m0 8v1m0 11v1m0 1v1m0 19v1m2-39v1m0 4v1m0 32v1m0 2v1m1-43v1m0 23v1m1-23v1m0 1v1m0 8v1m0 11v1m0 16v1m0 2v1m1-35v1m0 12v1m1-12v1m0 12v2m0 17v1m1-31v1m0 31v2m2-40v1m0 9v1m1-2v1m0 32v1m1-32v1m3 1v1m3-11v1m0 10v2m2-12v1m1-1v1m0 11v1m1-13v1m3 12v1m1-13v1m0 11v1m1-13v1m0 11v1m1-1v1m1-1v2m1-2v1m2 0v1m4-1v1m2-1v1m1 0v1m3-2v2m1-2v1m1 0v1m1-1v1m3-1v1m12-6v1m24-34v1m0 8v5m1-7v5m0 1v2"/><path stroke="#ff1a00" d="M400 357v2m1-35v3m0 13v1m0 17v3m2-40v2m0 6v3m0 11v2m0 17v2m1-41v2m0 5v4m0 10v2m0 17v3m1-41v1m0 6v3m0 11v1m0 18v2m1-42v3m0 6v3m0 10v2m0 17v3m1-42v2m0 7v2m0 30v2m1-32v1m2-9v1m0 8v2m0 30v2m1-42v1m0 9v1m0 30v1m9-27v1m2 0v1m8 1v1m1-1v1m6-1v1m2-1v1m4 0v1m17-7v1m2-2v1m5-4v1m17-28v8m0 5v4m1-18v7m0 5v1m0 2v3"/></g>
<path d="M237.4 483.0L237.5 503.1L237.7 493.8L237.8 499.2L237.9 490.9L238.0 494.6L238.2 494.9L238.3 487.4L238.4 500.2L238.5 498.6L238.7 493.3L238.8 495.7L238.9 499.2L239.0 495.8L239.2 496.2L239.3 490.6L239.4 500.8L239.5 499.0L239.7 505.8L239.8 491.2L239.9 507.7L240.0 500.4L240.2 497.9L240.3 494.0L240.4 500.3L240.5 493.0L240.7 498.9L240.8 488.9L240.9 491.6L241.0 488.6L241.2 498.2L241.3 508.8L241.4 493.6L241.5 506.4L241.7 489.3L241.8 517.7L241.9 497.8L242.0 513.7L242.2 514.0L242.3 513.7L242.4 511.7L242.5 496.9L242.7 511.2L242.8 504.3L242.9 499.4L243.0 499.4L243.2 512.3L243.3 504.2L243.4 512.7L243.5 520.8L243.7 523.0L243.8 514.2L243.9 513.9L244.0 515.3L244.2 513.7L244.3 524.6L244.4 507.6L244.5 518.8L244.7 516.1L244.8 523.7L244.9 515.6L245.0 507.8L245.2 518.2L245.3 528.5L245.4 517.7L245.5 515.5L245.7 507.9L245.8 534.3L245.9 520.1L246.0 515.8L246.2 530.4L246.3 521.3L246.4 523.8L246.5 531.1L246.7 531.8L246.8 517.9L246.9 526.4L247.0 528.9L247.2 524.5L247.3 516.8L247.4 529.5L247.5 531.1L247.7 529.0L247.8 522.7L247.9 526.7L248.0 525.1L248.2 527.0L248.3 535.2L248.4 517.7L248.5 532.8L248.7 532.6L248.8 533.6L248.9 530.6L249.0 523.2L249.2 528.3L249.3 522.7L249.4 542.8L249.5 536.6L249.7 531.4L249.8 531.1L249.9 529.7L250.0 535.8L250.2 536.2L250.3 528.3L250.4 537.4L250.5 533.0L250.7 542.3L250.8 537.0L250.9 544.3L251.0 526.3L251.2 547.7L251.3 543.4L251.4 542.2L251.5 540.3L251.7 532.8L251.8 539.1L251.9 546.0L252.0 536.9L252.2 536.2L252.3 546.4L252.4 537.7L252.5 536.0L252.7 542.3L252.8 540.5L252.9 539.8L253.0 543.5L253.2 542.5L253.3 542.2L253.4 544.8L253.5 542.3L253.7 539.0L253.8 540.2L253.9 539.8L254.0 542.8L254.2 538.1L254.3 547.2L254.4 543.0L254.5 537.8L254.7 535.8L254.8 544.6L254.9 538.5L255.0 545.5L255.2 542.0L255.3 540.0L255.4 539.8L255.5 542.7L255.7 543.8L255.8 542.0L255.9 544.2L256.0 536.9L256.1 553.7L256.3 540.5L256.4 546.6L256.5 550.2L256.6 552.1L256.8 554.7L256.9 544.6L257.0 552.7L257.1 554.7L257.3 554.6L257.4 549.2L257.5 554.0L257.6 558.4L257.8 550.1L257.9 555.9L258.0 558.4L258.1 560.9L258.3 558.0L258.4 553.8L258.5 555.2L258.6 552.8L258.8 559.3L258.9 555.5L259.0 553.3L259.1 566.4L259.3 559.4L259.4 562.3L259.5 561.2L259.6 553.6L259.8 561.4L259.9 558.2L260.0 560.5L260.1 560.2L260.3 562.7L260.4 559.6L260.5 554.2L260.6 555.5L260.8 561.2L260.9 558.4L261.0 562.2L261.1 559.8L261.3 556.9L261.4 555.6L261.5 556.7L261.6 553.2L261.8 564.4L261.9 553.5L262.0 560.4L262.1 561.2L262.3 559.0L262.4 554.0L262.5 561.3L262.6 554.5L262.8 554.8L262.9 557.4L263.0 560.5L263.1 559.1L263.3 560.4L263.4 557.0L263.5 564.2L263.6 555.0L263.8 557.2L263.9 552.6L264.0 557.1L264.1 559.2L264.3 556.3L264.4 551.3L264.5 564.3L264.6 557.7L264.8 560.0L264.9 559.1L265.0 563.4L265.1 558.4L265.3 562.1L265.4 556.8L265.5 562.8L265.6 561.6L265.8 558.2L265.9 560.1L266.0 562.2L266.1 560.3L266.3 559.6L266.4 563.4L266.5 561.5L266.6 562.4L266.8 564.4L266.9 564.5L267.0 561.3L267.1 561.1L267.3 563.1L267.4 562.4L267.5 558.6L267.6 565.9L267.8 563.3L267.9 565.1L268.0 561.2L268.1 566.6L268.3 562.9L268.4 564.1L268.5 561.6L268.6 562.3L268.8 567.6L268.9 564.7L269.0 566.2L269.1 565.6L269.3 567.6L269.4 569.5L269.5 564.2L269.6 561.8L269.8 570.7L269.9 569.1L270.0 568.4L270.1 562.3L270.3 567.9L270.4 570.2L270.5 567.6L270.6 566.7L270.8 568.5L270.9 567.0L271.0 569.5L271.1 568.3L271.3 571.3L271.4 569.7L271.5 567.4L271.6 570.3L271.8 571.1L271.9 568.2L272.0 568.7L272.1 564.9L272.3 571.8L272.4 568.8L272.5 565.8L272.6 566.7L272.8 570.1L272.9 572.4L273.0 570.7L273.1 572.1L273.3 568.9L273.4 568.5L273.5 573.5L273.6 568.2L273.8 571.9L273.9 574.9L274.0 570.2L274.1 577.4L274.3 574.9L274.4 576.9L274.5 576.3L274.6 576.9L274.8 568.0L274.9 578.7L275.0 573.0L275.1 569.7L275.3 567.7L275.4 575.6L275.5 573.1L275.6 569.5L275.8 576.9L275.9 570.4L276.0 569.8L276.1 571.9L276.3 577.0L276.4 577.0L276.5 570.1L276.6 571.4L276.8 572.0L276.9 580.5L277.0 572.1L277.1 571.7L277.3 574.5L277.4 575.4L277.5 570.2L277.6 571.3L277.8 570.6L277.9 575.4L278.0 573.6L278.1 569.2L278.3 577.2L278.4 576.1L278.5 573.2L278.6 573.1L278.8 574.6L278.9 571.9L279.0 569.9L279.1 574.9L279.3 569.6L279.4 575.2L279.5 569.6L279.6 573.7L279.8 573.6L279.9 579.6L280.0 570.7L280.1 578.0L280.3 572.1L280.4 570.5L280.5 572.2L280.6 575.5L280.8 576.7L280.9 579.6L281.0 566.3L281.1 582.9L281.3 580.9L281.4 573.6L281.5 566.5L281.6 574.0L281.8 567.1L281.9 566.4L282.0 566.0L282.1 582.7L282.3 571.5L282.4 576.2L282.5 577.4L282.6 572.3L282.8 574.6L282.9 571.6L283.0 571.1L283.1 573.9L283.3 575.3L283.4 577.8L283.5 566.3L283.6 579.6L283.8 568.2L283.9 573.6L284.0 578.7L284.1 573.0L284.3 569.3L284.4 568.4L284.5 576.4L284.6 572.7L284.8 574.3L284.9 575.4L285.0 572.4L285.1 571.5L285.3 569.6L285.4 564.6L285.5 567.8L285.6 571.9L285.8 571.5L285.9 573.1L286.0 566.9L286.1 572.3L286.3 573.9L286.4 569.2L286.5 570.8L286.6 567.1L286.8 574.1L286.9 568.1L287.0 564.9L287.1 577.7L287.3 574.3L287.4 571.3L287.5 573.7L287.6 567.5L287.8 572.8L287.9 572.0L288.0 567.0L288.1 575.6L288.3 569.7L288.4 573.8L288.5 570.6L288.6 574.8L288.8 575.8L288.9 569.4L289.0 567.3L289.1 571.6L289.3 574.7L289.4 570.9L289.5 570.2L289.6 573.7L289.8 563.8L289.9 570.1L290.0 567.8L290.1 573.3L290.3 570.0L290.4 568.7L290.5 571.3L290.6 567.6L290.8 572.5L290.9 570.3L291.0 571.3L291.1 570.2L291.3 575.9L291.4 572.4L291.5 574.7L291.6 574.6L291.8 570.0L291.9 564.0L292.0 574.2L292.1 574.2L292.3 571.6L292.4 571.5L292.5 576.1L292.6 581.3L292.8 567.8L292.9 575.3L293.0 571.9L293.1 576.4L293.3 575.1L293.4 566.0L293.5 579.8L293.6 571.2L293.8 569.7L293.9 573.2L294.0 570.8L294.1 571.1L294.3 576.5L294.4 581.5L294.5 563.9L294.6 583.7L294.8 574.2L294.9 572.4L295.0 570.5L295.1 565.5L295.3 566.8L295.4 574.0L295.5 575.3L295.6 570.3L295.8 565.3L295.9 569.4L296.0 567.3L296.1 570.8L296.3 568.2L296.4 563.9L296.5 567.8L296.6 559.9L296.8 570.4L296.9 572.0L297.0 558.4L297.1 567.0L297.3 558.4L297.4 553.1L297.5 568.6L297.6 548.3L297.8 577.7L297.9 559.8L298.0 558.3L298.1 558.5L298.3 576.1L298.4 559.5L298.5 562.0L298.6 557.3L298.8 564.9L298.9 566.1L299.0 557.3L299.1 551.8L299.3 563.5L299.4 565.5L299.5 558.1L299.6 551.8L299.8 559.9L299.9 566.4L300.0 548.0L300.1 560.2L300.3 555.8L300.4 552.7L300.5 559.5L300.6 550.0L300.8 557.9L300.9 562.8L301.0 556.8L301.1 551.2L301.3 566.2L301.4 547.9L301.5 545.8L301.6 562.4L301.8 553.1L301.9 544.0L302.0 547.6L302.1 548.5L302.3 551.7L302.4 547.0L302.5 560.5L302.6 549.1L302.8 541.1L302.9 563.3L303.0 558.6L303.1 558.0L303.3 549.7L303.4 552.9L303.5 552.4L303.6 554.0L303.8 552.7L303.9 547.2L304.0 545.7L304.1 552.1L304.3 545.8L304.4 557.2L304.5 551.2L304.6 546.3L304.8 558.7L304.9 548.5L305.0 550.1L305.1 544.1L305.3 544.0L305.4 542.1L305.5 551.8L305.6 549.4L305.8 550.9L305.9 552.0L306.0 549.2L306.1 553.4L306.3 545.8L306.4 550.0L306.5 546.0L306.6 544.5L306.8 552.2L306.9 551.9L307.0 540.7L307.1 544.3L307.3 550.4L307.4 553.7L307.5 546.0L307.6 548.0L307.8 540.5L307.9 559.6L308.0 538.0L308.1 559.2L308.3 551.9L308.4 553.4L308.5 552.1L308.6 548.1L308.8 553.2L308.9 550.4L309.0 556.1L309.1 547.0L309.3 548.1L309.4 553.8L309.5 556.9L309.6 551.8L309.8 548.0L309.9 551.0L310.0 549.4L310.1 561.0L310.3 556.5L310.4 558.5L310.5 554.0L310.6 550.0L310.8 558.7L310.9 561.3L311.0 541.1L311.1 565.4L311.3 559.2L311.4 552.1L311.5 558.1L311.6 550.8L311.8 549.7L311.9 557.8L312.0 556.9L312.1 565.3L312.3 554.1L312.4 555.9L312.5 550.0L312.6 546.4L312.8 547.0L312.9 559.2L313.0 550.7L313.1 563.3L313.3 565.1L313.4 556.1L313.5 567.0L313.6 570.4L313.8 564.6L313.9 557.3L314.0 564.1L314.1 553.8L314.3 562.8L314.4 556.9L314.5 559.0L314.6 568.7L314.8 561.2L314.9 560.0L315.0 564.8L315.1 565.5L315.3 553.1L315.4 564.6L315.5 568.9L315.6 557.4L315.8 564.3L315.9 554.4L316.0 571.1L316.1 561.3L316.3 548.3L316.4 577.7L316.5 561.6L316.6 565.6L316.8 555.6L316.9 558.1L317.0 553.1L317.1 559.6L317.3 566.3L317.4 561.4L317.5 564.7L317.6 553.8L317.8 554.3L317.9 556.3L318.0 561.5L318.1 560.0L318.3 557.7L318.4 560.7L318.5 556.3L318.6 556.7L318.8 563.2L318.9 553.2L319.0 556.7L319.1 563.6L319.3 555.7L319.4 558.3L319.5 551.6L319.6 563.6L319.8 543.1L319.9 559.9L320.0 548.2L320.1 560.4L320.3 554.2L320.4 541.1L320.5 563.3L320.6 552.6L320.8 550.9L320.9 559.3L321.0 542.3L321.1 543.5L321.3 548.9L321.4 548.7L321.5 547.0L321.6 545.3L321.8 537.3L321.9 545.0L322.0 539.5L322.1 543.7L322.3 532.3L322.4 539.2L322.5 537.0L322.6 550.8L322.8 542.1L322.9 536.9L323.0 527.2L323.1 538.4L323.3 540.9L323.4 548.5L323.5 533.7L323.6 533.2L323.8 533.5L323.9 538.7L324.0 528.9L324.1 540.5L324.3 528.8L324.4 533.7L324.5 524.7L324.6 520.3L324.8 542.6L324.9 521.6L325.0 530.9L325.1 533.1L325.3 536.4L325.4 530.7L325.5 518.5L325.6 522.5L325.8 535.7L325.9 523.2L326.0 528.0L326.1 517.4L326.3 515.1L326.4 525.2L326.5 528.7L326.6 520.4L326.8 520.9L326.9 512.6L327.0 506.9L327.1 512.1L327.3 521.0L327.4 501.0L327.5 507.9L327.6 498.8L327.8 509.6L327.9 513.3L328.0 519.5L328.1 503.9L328.3 513.5L328.4 504.0L328.5 496.1L328.6 487.2L328.8 517.7L328.9 507.8L329.0 499.2L329.1 510.2L329.3 493.6L329.4 501.3L329.5 515.4L329.6 510.1L329.8 513.6L329.9 508.2L330.0 499.1L330.1 513.9L330.3 504.0L330.4 498.2L330.5 506.3L330.6 511.4L330.8 519.0L330.9 508.9L331.0 505.6L331.1 519.7L331.3 512.4L331.4 511.3L331.5 507.5L331.6 509.2L331.8 505.8L331.9 521.7L332.0 509.8L332.1 508.8L332.3 515.3L332.4 500.8L332.5 509.7L332.6 507.2L332.8 506.0L332.9 500.1L333.0 505.6L333.1 508.7L333.3 500.2L333.4 495.1L333.5 492.1L333.6 498.0L333.8 494.6L333.9 494.3L334.0 493.8L334.1 499.8L334.3 495.7L334.4 491.6L334.5 488.8L334.6 489.4L334.8 492.3L334.9 486.2L335.0 479.6L335.1 490.7L335.3 479.8L335.4 476.8L335.5 470.2L335.6 479.2L335.8 462.1L335.9 468.3L336.0 459.2L336.1 492.7L336.3 484.2L336.4 479.8L336.5 475.3L336.6 476.4L336.8 462.6L336.9 484.5L337.0 480.5L337.1 477.9L337.3 487.7L337.4 482.7L337.5 479.0L337.6 471.5L337.8 487.0L337.9 486.0L338.0 485.1L338.1 481.8L338.3 479.1L338.4 484.4L338.5 488.7L338.6 486.3L338.8 486.7L338.9 484.5L339.0 468.3L339.1 509.4L339.3 482.7L339.4 495.1L339.5 495.3L339.6 495.5L339.8 502.5L339.9 472.1L340.0 479.9L340.1 494.9L340.3 472.5L340.4 502.0L340.5 478.8L340.6 495.6L340.8 489.1L340.9 481.9L341.0 478.6L341.1 483.8L341.3 490.0L341.4 489.6L341.5 487.8L341.6 484.4L341.8 487.8L341.9 496.3L342.0 481.6L342.1 489.5L342.3 500.4L342.4 493.1L342.5 486.3L342.6 493.8L342.8 484.4L342.9 489.5L343.0 499.5L343.1 473.7L343.3 505.2L343.4 493.8L343.5 501.8L343.6 485.4L343.8 490.6L343.9 498.7L344.0 485.4L344.1 491.5L344.3 504.9L344.4 475.3L344.5 490.5L344.6 486.8L344.8 494.2L344.9 502.1L345.0 492.3L345.1 485.0L345.3 490.5L345.4 488.7L345.5 494.3L345.6 476.9L345.8 478.6L345.9 472.3L346.0 490.9L346.1 486.4L346.3 481.8L346.4 503.0L346.5 482.0L346.6 479.3L346.8 501.5L346.9 482.1L347.0 495.9L347.1 487.9L347.3 479.3L347.4 480.9L347.5 494.1L347.6 496.4L347.8 487.1L347.9 490.2L348.0 496.7L348.1 475.2L348.3 478.7L348.4 465.3L348.5 503.2L348.6 482.0L348.8 480.1L348.9 479.8L349.0 490.9L349.1 485.1L349.3 482.6L349.4 495.8L349.5 479.6L349.6 478.4L349.8 506.0L349.9 485.5L350.0 484.6L350.1 483.7L350.3 501.4L350.4 494.6L350.5 494.6L350.6 493.5L350.8 488.4L350.9 480.8L351.0 482.8L351.1 500.9L351.3 498.2L351.4 490.7L351.5 476.8L351.6 507.3L351.8 486.6L351.9 479.1L352.0 507.8L352.1 498.2L352.3 497.1L352.4 504.8L352.5 514.1L352.6 511.1L352.8 500.0L352.9 497.6L353.0 499.1L353.1 497.5L353.3 506.6L353.4 510.8L353.5 520.3L353.6 510.9L353.8 511.7L353.9 510.1L354.0 532.0L354.1 528.9L354.3 523.9L354.4 506.8L354.5 507.7L354.6 493.3L354.8 540.5L354.9 527.7L355.0 525.0L355.1 525.0L355.3 524.7L355.4 524.4L355.5 520.7L355.6 498.2L355.8 512.6L355.9 498.9L356.0 511.9L356.1 527.1L356.3 508.0L356.4 507.0L356.5 519.3L356.6 511.8L356.8 507.3L356.9 521.9L357.0 514.6L357.1 515.1L357.3 505.6L357.4 512.5L357.5 511.3L357.6 513.5L357.8 492.3L357.9 523.7L358.0 510.6L358.1 514.7L358.3 504.0L358.4 516.0L358.5 517.1L358.6 511.3L358.8 509.7L358.9 515.0L359.0 508.7L359.1 519.1L359.3 519.6L359.4 534.7L359.5 505.3L359.9 522.0L360.1 560.0L360.3 579.2L360.4 545.0M373.0 549.0L373.2 530.0L373.4 548.0L373.7 519.0L374.2 518.0L374.6 500.0L375.4 475.7L375.5 503.1L375.6 494.0L375.8 493.7L375.9 489.9L376.0 492.4L376.1 480.9L376.3 503.3L376.4 480.1L376.5 496.0L376.6 487.3L376.8 485.7L376.9 495.8L377.0 504.4L377.1 477.9L377.3 491.7L377.4 495.6L377.5 488.9L377.6 493.5L377.8 482.7L377.9 485.9L378.0 496.3L378.1 496.5L378.3 489.6L378.4 495.9L378.5 495.3L378.6 493.9L378.8 500.0L378.9 493.6L379.0 482.7L379.1 498.0L379.3 483.1L379.4 479.2L379.5 484.8L379.6 486.9L379.8 498.6L379.9 484.3L380.0 488.8L380.1 487.9L380.3 483.2L380.4 490.7L380.5 480.0L380.6 476.8L380.8 504.2L380.9 489.9L381.0 486.8L381.1 494.2L381.3 490.3L381.4 495.8L381.5 489.7L381.6 495.7L381.8 484.1L381.9 486.9L382.0 487.8L382.1 474.8L382.3 484.1L382.4 480.2L382.5 485.4L382.6 476.3L382.8 478.3L382.9 476.7L383.0 490.1L383.1 487.6L383.3 487.1L383.4 488.1L383.5 481.6L383.6 482.7L383.8 479.4L383.9 494.0L384.0 491.2L384.1 488.6L384.3 477.8L384.4 479.4L384.5 494.4L384.6 483.2L384.8 481.0L384.9 480.6L385.0 471.2L385.1 491.3L385.3 486.6L385.4 477.3L385.5 474.5L385.6 464.3L385.8 494.7L385.9 484.1L386.0 482.4L386.1 476.3L386.3 477.9L386.4 488.6L386.5 471.8L386.6 494.0L386.8 482.3L386.9 476.3L387.0 475.9L387.1 478.7L387.3 474.0L387.4 484.0L387.5 473.1L387.6 467.0L387.8 494.9L387.9 469.4L388.0 479.2L388.1 477.3L388.3 471.7L388.4 460.1L388.5 484.6L388.6 483.9L388.8 478.3L388.9 472.6L389.0 487.7L389.1 460.0L389.3 476.7L389.4 480.1L389.5 448.8L389.6 492.7L389.8 464.8L389.9 462.8L390.0 465.0L390.1 473.2L390.3 460.4L390.4 483.7L390.5 469.9L390.6 484.7L390.8 495.9L390.9 464.5L391.0 475.2L391.1 471.5L391.3 486.3L391.4 465.1L391.5 465.4L391.6 487.1L391.8 483.6L391.9 501.5L392.0 468.6L392.1 493.8L392.3 508.5L392.4 487.9L392.5 488.3L392.6 504.9L392.8 488.6L392.9 496.3L393.0 488.3L393.1 507.0L393.3 505.4L393.4 480.3L393.5 500.9L393.6 498.1L393.8 499.3L393.9 498.5L394.0 483.0L394.1 518.7L394.3 510.4L394.4 486.7L394.5 491.2L394.6 503.0L394.8 481.5L394.9 489.8L395.0 502.0L395.1 500.9L395.3 487.5L395.4 482.0L395.5 469.8L395.6 471.1L395.8 469.5L395.9 481.0L396.0 456.5L396.1 455.4L396.3 456.0L396.4 474.7L396.5 443.6L396.6 488.7L396.8 475.0L396.9 462.6L397.0 463.9L397.1 447.7L397.3 479.1L397.4 463.7L397.5 488.9L397.6 459.8L397.8 481.9L397.9 477.7L398.0 468.0L398.1 474.9L398.3 461.3L398.4 480.0L398.5 467.0L398.6 475.3L398.8 491.4L398.9 473.3L399.0 479.0L399.1 464.3L399.3 492.7L399.4 484.5L399.5 486.8L399.6 476.5L399.8 492.9L399.9 472.8L400.0 480.8L400.1 485.2L400.3 480.0L400.4 483.8L400.5 482.2L400.6 483.7L400.8 476.5L400.9 491.5L401.0 489.9L401.1 495.2L401.3 473.7L401.4 488.7L401.5 481.0L401.6 495.8L401.8 488.3L401.9 493.5L402.0 498.1L402.1 479.2L402.3 486.6L402.4 492.3L402.5 492.9L402.6 488.4L402.8 493.0L402.9 485.3L403.0 477.7L403.1 491.6L403.3 480.2L403.4 497.7L403.5 500.8L403.6 495.1L403.8 486.3L403.9 498.8L404.0 491.7L404.1 497.3L404.3 491.7L404.4 483.0L404.5 506.3L404.6 491.5L404.8 488.8L404.9 493.7L405.0 500.7L405.1 496.5L405.3 498.0L405.4 503.0L405.5 497.2L405.6 496.7L405.8 499.9L405.9 495.9L406.0 499.6L406.1 495.3L406.3 493.4L406.4 489.3L406.5 493.3L406.6 492.7L406.8 491.3L406.9 502.3L407.0 486.0L407.1 493.3L407.3 489.8L407.4 485.0L407.5 500.3L407.6 495.5L407.8 496.3L407.9 491.8L408.0 483.2L408.1 487.6L408.3 487.5L408.4 484.1L408.5 493.2L408.6 483.0L408.8 501.1L408.9 492.6L409.0 489.4L409.1 486.6L409.3 490.1L409.4 487.6L409.5 491.4L409.6 495.7L409.8 490.9L409.9 491.0L410.0 491.1L410.1 488.7L410.3 488.7L410.4 486.7L410.5 479.6L410.6 493.5L410.8 484.3L410.9 490.4L411.0 481.9L411.1 473.6L411.3 477.7L411.4 494.1L411.5 477.3L411.6 483.9L411.8 482.8L411.9 475.7L412.0 491.4L412.1 491.2L412.3 467.3L412.4 490.7L412.5 482.7L412.6 480.2L412.8 485.5L412.9 480.1L413.0 482.5L413.1 480.6L413.3 484.4L413.4 484.8L413.5 478.6L413.6 485.8L413.8 477.9L413.9 471.9L414.0 482.7L414.1 485.4L414.3 481.2L414.4 479.3L414.5 480.6L414.6 481.4L414.8 475.1L414.9 479.7L415.0 476.1L415.1 481.0L415.3 486.8L415.4 485.8L415.5 481.4L415.6 474.1L415.8 479.7L415.9 477.3L416.0 478.7L416.1 481.6L416.3 480.5L416.4 484.6L416.5 478.8L416.6 485.0L416.8 492.5L416.9 474.7L417.0 494.7L417.1 481.6L417.3 487.5L417.4 487.3L417.5 485.4L417.6 485.0L417.8 491.0L417.9 483.2L418.0 484.2L418.1 484.4L418.3 476.0L418.4 485.9L418.5 481.7L418.6 492.2L418.8 486.1L418.9 491.9L419.0 487.3L419.1 484.4L419.3 496.4L419.4 488.6L419.5 485.4L419.6 492.5L419.8 493.5L419.9 498.3L420.0 487.0L420.1 493.7L420.3 492.9L420.4 488.9L420.5 485.0L420.6 488.8L420.8 481.9L420.9 487.3L421.0 489.4L421.1 490.6L421.3 495.8L421.4 490.6L421.5 497.3L421.6 490.0L421.8 491.5L421.9 490.2L422.0 491.8L422.1 499.0L422.3 494.8L422.4 492.2L422.5 496.1L422.6 488.0L422.8 493.5L422.9 497.1L423.0 484.0L423.1 501.1L423.3 496.3L423.4 494.6L423.5 496.0L423.6 495.3L423.8 487.7L423.9 500.8L424.0 493.1L424.1 496.7L424.3 497.8L424.4 494.2L424.5 489.0L424.6 500.0L424.8 503.4L424.9 497.0L425.0 499.6L425.1 499.4L425.3 498.6L425.4 495.3L425.5 494.0L425.6 497.7L425.8 496.7L425.9 496.9L426.0 489.5L426.1 496.1L426.3 503.7L426.4 496.8L426.5 494.3L426.6 495.8L426.8 496.1L426.9 507.5L427.0 503.0L427.1 490.3L427.3 510.4L427.4 501.1L427.5 496.8L427.6 507.0L427.8 497.1L427.9 493.7L428.0 499.9L428.1 506.3L428.3 502.4L428.4 496.4L428.5 504.6L428.6 503.8L428.8 502.5L428.9 512.0L429.0 497.0L429.1 511.0L429.3 492.9L429.4 500.4L429.5 499.9L429.6 506.6L429.8 500.5L429.9 495.7L430.0 497.7L430.1 500.0L430.3 504.6L430.4 505.3L430.5 494.5L430.6 507.9L430.8 495.7L430.9 498.6L431.0 504.7L431.1 505.0L431.3 501.7L431.4 498.7L431.5 502.6L431.6 503.2L431.8 513.7L431.9 502.2L432.0 506.4L432.1 511.8L432.3 507.9L432.4 493.3L432.5 515.7L432.6 507.0L432.8 495.8L432.9 503.5L433.0 508.5L433.1 499.3L433.3 496.6L433.4 506.2L433.5 504.7L433.6 512.4L433.8 502.1L433.9 504.1L434.0 503.9L434.1 501.9L434.3 495.0L434.4 506.3L434.5 509.2L434.6 495.6L434.8 502.1L434.9 502.8L435.0 510.9L435.1 501.0L435.3 497.3L435.4 508.8L435.5 499.5L435.6 498.6L435.8 512.6L435.9 510.7L436.0 499.6L436.1 505.4L436.3 502.1L436.4 499.6L436.5 512.9L436.6 499.6L436.8 507.7L436.9 501.9L437.0 506.7L437.1 507.1L437.3 495.0L437.4 502.3L437.5 502.1L437.6 492.3L437.8 513.5L437.9 508.4L438.0 499.6L438.1 501.1L438.3 510.1L438.4 507.3L438.5 503.9L438.6 513.0L438.8 506.3L438.9 508.0L439.0 506.4L439.1 507.9L439.3 496.4L439.4 502.7L439.5 500.8L439.6 500.4L439.8 502.8L439.9 514.9L440.0 496.6L440.1 500.3L440.3 501.1L440.4 507.2L440.5 500.7L440.6 510.6L440.8 501.7L440.9 497.9L441.0 517.1L441.1 505.7L441.3 497.3L441.4 519.7L441.5 505.6L441.6 509.1L441.8 504.8L441.9 505.0L442.0 507.1L442.1 509.6L442.3 503.9L442.4 508.0L442.5 501.2L442.6 502.4L442.8 495.4L442.9 503.5L443.0 506.4L443.1 497.8L443.3 511.6L443.4 502.9L443.5 509.0L443.6 501.2L443.8 498.4L443.9 499.3L444.0 503.3L444.1 504.6L444.3 506.9L444.4 506.7L444.5 494.4L444.6 502.0L444.8 502.6L444.9 509.5L445.0 496.8L445.1 504.7L445.3 505.9L445.4 497.1L445.5 491.0L445.6 508.3L445.8 506.2L445.9 487.2L446.0 511.4L446.1 505.9L446.3 502.2L446.4 504.5L446.5 491.7L446.6 504.3L446.8 502.2L446.9 488.4L447.0 505.0L447.1 508.9L447.3 501.8L447.4 490.2L447.5 499.7L447.6 495.4L447.8 494.3L447.9 510.2L448.0 505.0L448.1 506.1L448.3 505.2L448.4 495.1L448.5 514.5L448.6 509.3L448.8 506.1L448.9 499.8L449.0 505.4L449.1 500.7L449.3 509.8L449.4 505.4L449.5 500.3L449.6 496.2L449.8 509.5L449.9 504.8L450.0 505.6L450.1 506.2L450.3 495.8L450.4 506.7L450.5 503.5L450.6 498.4L450.8 507.7L450.9 504.3L451.0 492.3L451.1 515.7L451.3 495.0L451.4 505.2L451.5 494.2L451.6 497.9L451.8 511.4L451.9 495.9L452.0 492.6L452.1 503.0L452.3 503.3L452.4 510.4L452.5 497.3L452.6 495.2L452.8 508.8L452.9 505.2L453.0 500.1L453.1 503.6L453.3 494.2L453.4 500.6L453.5 501.3L453.6 502.5L453.8 501.8L453.9 494.3L454.0 497.3L454.1 493.2L454.3 505.9L454.4 498.8L454.5 496.2L454.6 491.5L454.8 498.8L454.9 499.9L455.0 500.0L455.1 490.3L455.3 511.4L455.4 502.8L455.5 498.4L455.6 499.0L455.8 495.4L455.9 489.4L456.0 506.9L456.1 505.3L456.3 496.1L456.4 485.7L456.5 497.3L456.6 505.1L456.8 489.2L456.9 493.5L457.0 491.4L457.1 494.0L457.3 486.0L457.4 493.1L457.5 492.8L457.6 488.0L457.8 495.9L457.9 493.0L458.0 496.2L458.1 495.4L458.3 494.6L458.4 482.2L458.5 490.1L458.6 489.4L458.8 494.6L458.9 488.4L459.0 479.6L459.1 483.2L459.3 492.0L459.4 471.6L459.5 498.7L459.6 479.1L459.8 479.3L459.9 478.7L460.0 494.8L460.1 494.5L460.3 484.2L460.4 490.6L460.5 491.3L460.6 494.3L460.8 485.4L460.9 500.6L461.0 496.2L461.1 490.2L461.3 498.6L461.4 496.4L461.5 492.8L461.6 493.7L461.8 485.5L461.9 498.8L462.0 503.5L462.1 484.9L462.3 491.7L462.4 499.8L462.5 495.4L462.6 497.4L462.8 500.3L462.9 487.2L463.0 492.5L463.1 496.3L463.3 494.9L463.4 499.5L463.5 484.0L463.6 511.4L463.8 507.8L463.9 497.2L464.0 499.3L464.1 505.2L464.3 493.0L464.4 501.5L464.5 501.5L464.6 512.6L464.8 500.8L464.9 492.4L465.0 506.9L465.1 496.1L465.3 510.2L465.4 491.7L465.5 507.7L465.6 491.1L465.8 506.7L465.9 506.2L466.0 504.8L466.1 507.0L466.3 516.7L466.4 504.7L466.5 502.5L466.6 506.7L466.8 506.6L466.9 516.4L467.0 506.3L467.1 510.2L467.3 518.9L467.4 505.1L467.5 513.4L467.6 497.3L467.8 525.7L467.9 512.4L468.0 506.0L468.1 518.7L468.3 511.9L468.4 510.5L468.5 514.4L468.6 510.6L468.8 514.4L468.9 521.0L469.0 513.9L469.1 517.2L469.3 508.0L469.4 509.2L469.5 513.6L469.6 517.1L469.8 508.3L469.9 510.8L470.0 512.1L470.1 523.9L470.3 511.1L470.4 516.7L470.5 529.0L470.6 521.5L470.8 513.2L470.9 519.1L471.0 510.7L471.1 503.8L471.3 532.2L471.4 513.0L471.5 512.2L471.6 529.5L471.8 512.8L471.9 514.4L472.0 513.4L472.1 523.3L472.3 514.0L472.4 512.1L472.5 515.1L472.6 524.8L472.8 515.6L472.9 518.6L473.0 502.3L473.1 512.5L473.3 506.2L473.4 499.1L473.5 506.3L473.6 517.8L473.8 497.3L473.9 515.5L474.0 506.5L474.1 504.7L474.3 505.9L474.4 514.0L474.5 497.9L474.6 506.8L474.8 510.5L474.9 508.5L475.0 504.6L475.1 495.9L475.3 512.6L475.4 498.4L475.5 507.6L475.6 491.7L475.8 502.9L475.9 501.3L476.0 491.3L476.1 513.5L476.3 499.3L476.4 500.5L476.5 510.7L476.6 507.4L476.8 507.0L476.9 501.2L477.0 511.9L477.1 519.3L477.3 501.2L477.4 497.7L477.5 502.1L477.6 510.2L477.8 520.3L477.9 489.9L478.0 483.0L478.1 521.7L478.3 508.7L478.4 504.9L478.5 490.4L478.6 505.1L478.8 493.3L478.9 494.1L479.0 505.9L479.1 507.4L479.3 489.0L479.4 505.6L479.5 497.4L479.6 486.1L479.8 504.8L479.9 511.5L480.0 513.7L480.1 510.8L480.3 492.5L480.4 489.5L480.5 514.4L480.6 509.1L480.8 487.7L480.9 498.1L481.0 497.3L481.1 486.9L481.3 503.9L481.4 491.0L481.5 503.8L481.6 503.4L481.8 497.8L481.9 492.2L482.0 496.4L482.1 500.0L482.3 510.8L482.4 483.8L482.5 499.6L482.6 499.6L482.8 490.7L482.9 497.6L483.0 501.1L483.1 485.1L483.3 511.4L483.4 502.0L483.5 508.6L483.6 495.9L483.8 511.9L483.9 494.3L484.0 496.8L484.1 502.6L484.3 507.0L484.4 504.1L484.5 514.6L484.6 493.4L484.8 519.1L484.9 503.2L485.0 497.7L485.1 510.7L485.3 523.5L485.4 523.4L485.5 502.8L485.6 510.5L485.8 518.4L485.9 516.8L486.0 514.0L486.1 520.0L486.3 501.7L486.4 532.2L486.5 515.4L486.6 530.1L486.8 515.5L486.9 525.0L487.0 517.9L487.1 535.8L487.3 524.7L487.4 521.5L487.5 518.2L487.6 539.8L487.8 531.1L487.9 536.8L488.0 544.8L488.1 536.4L488.3 544.9L488.4 526.3L488.5 559.2L488.6 540.9L488.8 536.4L488.9 530.6L489.0 540.8L489.1 528.1L489.3 540.7L489.4 526.1L489.5 524.1L489.6 533.6L489.8 528.9L489.9 535.1L490.0 542.8L490.1 522.5L490.3 529.2L490.4 521.4L490.5 535.6L490.6 519.4L490.8 524.6L490.9 540.1L491.0 537.0L491.1 532.6L491.3 519.9L491.4 527.7L491.5 497.3L491.6 536.3L491.8 533.6L491.9 516.4L492.0 509.7L492.1 511.8L492.3 530.7L492.4 522.8L492.5 520.2L492.6 510.9L492.8 532.7L492.9 516.8L493.0 499.0L493.1 519.7L493.3 509.6L493.4 507.2L493.5 503.4L493.6 516.0L493.8 489.2L493.9 517.0L494.0 511.3L494.1 508.4L494.3 522.8L494.4 516.8L494.5 508.8L494.6 488.3L494.8 538.4L494.9 514.0L495.0 504.8L495.1 510.6L495.3 508.8L495.4 497.1L495.5 518.9L495.6 500.9L495.8 504.5L495.9 483.5L496.0 506.5L496.1 510.9L496.3 520.0L496.4 502.9L496.5 522.3L496.6 512.1L496.8 485.5L496.9 511.6L497.0 510.5L497.1 499.5L497.3 506.5L497.4 505.4L497.5 506.5L497.6 513.2L497.8 472.6L497.9 523.7L498.0 485.7L498.1 506.5L498.3 484.9L498.4 517.3L498.5 512.3L498.6 523.8L498.8 503.0L498.9 491.5L499.0 505.7L499.1 518.7L499.3 497.0L499.4 506.2L499.5 493.6L499.6 497.7L499.8 502.1L499.9 495.3L500.0 499.2L500.1 516.4L500.3 516.5L500.4 499.7L500.5 485.7L500.6 495.5L500.8 513.2L500.9 473.7L501.0 525.7L501.1 487.4L501.3 497.0L501.4 497.6L501.5 498.1L501.6 502.2L501.8 509.2L501.9 491.5L502.0 493.3L502.1 505.6L502.3 498.0L502.4 502.7L502.5 490.7L502.6 502.5L502.8 484.4L502.9 514.9L503.0 482.9L503.1 497.0L503.3 499.8L503.4 507.5L503.5 493.0L503.6 511.0L503.8 483.6L503.9 493.9L504.0 496.6L504.1 498.7L504.3 501.9L504.4 497.8L504.5 489.9L504.6 494.9L504.8 503.4L504.9 481.2L505.0 489.5L505.1 491.4L505.3 497.0L505.4 509.2L505.5 504.5L505.6 480.1L505.8 491.3L505.9 495.9L506.0 479.9L506.1 507.3L506.3 489.8L506.4 481.5L506.5 502.5L506.6 486.3L506.8 483.5L506.9 490.9L507.0 486.7L507.1 487.5L507.3 490.7L507.4 488.1L507.5 500.0L507.6 490.5L507.8 478.0L507.9 492.5L508.0 486.9L508.1 485.9L508.3 489.1L508.4 492.6L508.5 473.2L508.6 484.9L508.8 477.4L508.9 481.7L509.0 479.7L509.1 498.5L509.3 487.2L509.4 485.5L509.5 481.2L509.6 477.8L509.8 468.3L509.9 489.6L510.0 494.5L510.1 474.4L510.3 480.5L510.4 472.8L510.5 481.5L510.6 471.8L510.8 459.2L510.9 494.7L511.0 480.1L511.1 474.4L511.3 472.8L511.4 470.8L511.5 482.1L511.6 488.2L511.8 489.1L511.9 489.7L512.0 487.4L512.1 482.2L512.3 490.6L512.4 487.6L512.5 479.7L512.6 485.6L512.8 482.6L512.9 500.2L513.0 492.4L513.1 500.3L513.3 483.0L513.4 507.3L513.5 496.1L513.6 507.3L513.8 499.1L513.9 489.1L514.0 498.0L514.1 496.9L514.3 502.5L514.4 492.4L514.5 489.1L514.6 499.5L514.8 509.8L514.9 495.3L515.0 513.9L515.1 499.1L515.3 503.1L515.4 507.5L515.5 500.3L515.6 498.7L515.8 509.4L515.9 507.7L516.0 495.4L516.1 501.2L516.3 514.8L516.4 495.3L516.5 527.7L516.6 522.3L516.8 503.7L516.9 505.5L517.0 495.9L517.1 517.6L517.3 527.5L517.4 519.5L517.5 521.0L517.6 511.1L517.8 522.7L517.9 508.9L518.0 501.6L518.1 511.0L518.3 513.3L518.4 501.9L518.5 512.5L518.6 506.5L518.8 520.3L518.9 528.1L519.0 497.7L519.1 521.3L519.3 511.5L519.4 513.9L519.5 495.3L519.6 548.7L519.8 542.8L519.9 519.7L520.0 542.8L520.1 530.2L520.3 513.3L520.4 506.4L520.5 540.6L520.6 529.7L520.8 533.1L520.9 535.6L521.0 519.8L521.1 545.5L521.3 515.0L521.4 524.4L521.5 543.2L521.6 551.7L521.8 520.3L522.0 545.0L522.2 563.6L522.4 540.0M534.4 577.0L534.7 555.0L535.0 575.0L535.5 540.0L536.0 530.0L536.8 495.3L536.9 534.3L537.0 510.6L537.2 513.9L537.3 519.4L537.4 531.6L537.5 521.6L537.7 521.2L537.8 513.3L537.9 514.5L538.0 503.5L538.2 511.6L538.3 502.7L538.4 533.3L538.5 518.5L538.7 521.9L538.8 526.9L538.9 523.1L539.0 517.3L539.2 520.8L539.3 509.3L539.4 525.2L539.5 516.4L539.7 527.2L539.8 514.9L539.9 503.8L540.0 532.2L540.2 520.1L540.3 517.4L540.4 509.5L540.5 511.8L540.7 504.8L540.8 509.6L540.9 521.3L541.0 495.0L541.2 517.4L541.3 517.7L541.4 512.3L541.5 507.9L541.7 500.5L541.8 496.7L541.9 497.2L542.0 504.5L542.2 488.4L542.3 493.1L542.4 508.4L542.5 498.0L542.7 499.9L542.8 486.8L542.9 517.3L543.0 492.9L543.2 491.8L543.3 501.0L543.4 498.4L543.5 511.8L543.7 493.4L543.8 486.5L543.9 500.4L544.0 466.3L544.2 517.7L544.3 516.7L544.4 504.4L544.5 465.4L544.7 488.7L544.8 499.4L544.9 494.5L545.0 504.2L545.2 494.5L545.3 478.4L545.4 482.6L545.5 498.5L545.7 476.5L545.8 497.0L545.9 499.8L546.0 497.9L546.2 486.8L546.3 477.8L546.4 489.7L546.5 496.4L546.7 506.7L546.8 483.3L546.9 489.4L547.0 494.9L547.2 497.6L547.3 492.2L547.4 496.5L547.5 507.6L547.7 493.8L547.8 497.3L547.9 496.0L548.0 504.4L548.2 471.3L548.3 513.5L548.4 497.4L548.5 498.8L548.7 472.4L548.8 490.6L548.9 483.2L549.0 479.6L549.2 497.5L549.3 500.1L549.4 497.0L549.5 490.7L549.7 492.4L549.8 484.2L549.9 506.4L550.0 470.7L550.2 503.5L550.3 461.3L550.4 503.2L550.5 487.2L550.7 486.7L550.8 469.4L550.9 486.8L551.0 483.2L551.2 484.0L551.3 481.7L551.4 478.6L551.5 496.5L551.7 490.3L551.8 506.1L551.9 505.0L552.0 494.9L552.2 494.1L552.3 486.9L552.4 495.0L552.5 494.7L552.7 508.7L552.8 492.5L552.9 502.0L553.0 507.3L553.2 502.2L553.3 488.1L553.4 485.1L553.5 511.4L553.7 503.6L553.8 498.9L553.9 500.7L554.0 503.2L554.2 514.5L554.3 511.1L554.4 503.0L554.5 504.9L554.7 516.3L554.8 510.3L554.9 516.8L555.0 505.1L555.2 512.2L555.3 508.1L555.4 518.9L555.5 519.4L555.7 534.0L555.8 523.0L555.9 521.4L556.0 525.5L556.2 510.6L556.3 536.4L556.4 526.2L556.5 513.1L556.7 546.7L556.8 524.0L556.9 533.7L557.0 533.0L557.2 532.6L557.3 545.0L557.4 525.5L557.5 516.4L557.7 534.7L557.8 526.5L557.9 528.8L558.0 530.1L558.2 529.9L558.3 521.2L558.4 515.4L558.5 555.0L558.7 532.1L558.8 541.5L558.9 527.5L559.0 520.2L559.2 541.6L559.3 540.5L559.4 536.4L559.5 556.6L559.7 524.1L559.8 549.9L559.9 538.7L560.0 530.8L560.2 530.2L560.3 526.5L560.4 536.8L560.5 517.3L560.7 561.2L560.8 542.5L560.9 521.2L561.0 546.1L561.2 545.2L561.3 533.3L561.4 559.5L561.5 536.5L561.7 561.0L561.8 537.0L561.9 532.3L562.0 538.1L562.2 542.1L562.3 523.2L562.4 548.3L562.5 546.2L562.7 559.8L562.8 551.2L562.9 549.2L563.0 532.3L563.2 551.2L563.3 546.7L563.4 532.3L563.5 561.6L563.7 552.3L563.8 555.4L563.9 542.6L564.0 569.4L564.2 551.1L564.3 563.8L564.4 556.3L564.5 555.1L564.7 562.6L564.8 526.3L564.9 572.7L565.0 553.5L565.2 574.0L565.3 568.8L565.4 533.0L565.5 580.2L565.7 563.3L565.8 562.5L565.9 551.5L566.0 553.0L566.2 540.7L566.3 560.0L566.4 569.4L566.5 573.7L566.7 583.3L566.8 554.8L566.9 543.3L567.0 593.4L567.2 569.8L567.3 561.2L567.4 590.2L567.5 569.0L567.7 545.9L567.8 572.4L567.9 552.3L568.0 576.0L568.2 563.4L568.3 556.5L568.4 560.0L568.5 560.1L568.7 574.2L568.8 574.6L568.9 577.8L569.0 567.7L569.2 556.5L569.3 576.2L569.4 574.2L569.5 567.8L569.7 555.1L569.8 586.0L569.9 568.5L570.0 549.0L570.2 549.2L570.3 573.3L570.4 558.7L570.5 569.4L570.7 584.3L570.8 568.7L570.9 567.7L571.0 542.1L571.2 598.7L571.3 581.5L571.4 580.6L571.5 562.1L571.7 578.2L571.8 565.8L571.9 564.9L572.0 567.6L572.2 565.8L572.3 587.0L572.4 576.5L572.5 586.4L572.7 598.5L572.8 588.3L572.9 586.2L573.0 569.5L573.2 568.5L573.3 564.7L573.4 568.8L573.5 577.5L573.7 580.6L573.8 579.9L573.9 600.3L574.0 564.9L574.2 606.7L574.3 574.8L574.4 586.2L574.5 569.5L574.7 591.1L574.8 596.7L574.9 578.8L575.0 589.3L575.2 593.9L575.3 583.6L575.4 581.2L575.5 575.2L575.7 602.4L575.8 585.9L575.9 592.6L576.0 593.7L576.2 580.0L576.3 585.0L576.4 594.2L576.5 582.9L576.7 583.7L576.8 585.8L576.9 589.2L577.0 578.2L577.2 596.0L577.3 586.3L577.4 598.1L577.5 578.0L577.7 580.5L577.8 586.3L577.9 580.3L578.0 582.8L578.2 579.2L578.3 584.3L578.4 583.8L578.5 587.4L578.7 591.8L578.8 599.0L578.9 599.2L579.0 585.0L579.2 587.1L579.3 570.3L579.4 598.7L579.5 575.4L579.7 581.5L579.8 579.5L579.9 591.4L580.0 577.5L580.2 589.0L580.3 589.2L580.4 573.2L580.5 582.0L580.7 577.5L580.8 586.3L580.9 583.3L581.0 596.3L581.2 577.5L581.3 585.8L581.4 576.1L581.5 588.9L581.7 585.6L581.8 594.2L581.9 584.2L582.0 588.0L582.2 591.8L582.3 586.7L582.4 586.9L582.5 579.2L582.7 581.6L582.8 580.9L582.9 587.3L583.0 589.3L583.2 585.7L583.3 595.5L583.4 588.5L583.5 587.5L583.7 593.8L583.8 586.1L583.9 584.9L584.0 586.8L584.2 584.8L584.3 584.1L584.4 588.7L584.5 585.8L584.7 591.0L584.8 580.9L584.9 586.1L585.0 585.1L585.2 585.6L585.3 590.3L585.4 582.5L585.5 589.6L585.7 579.4L585.8 580.6L585.9 598.4L586.0 576.7L586.2 588.9L586.3 575.3L586.4 583.7L586.5 575.3L586.7 603.7L586.8 575.4L586.9 582.4L587.0 591.5L587.2 584.3L587.3 575.4L587.4 597.6L587.5 574.1L587.7 588.7L587.8 582.3L587.9 600.3L588.0 590.7L588.2 589.7L588.3 596.2L588.4 588.9L588.5 589.4L588.7 596.0L588.8 581.4L588.9 593.3L589.0 598.4L589.2 591.1L589.3 588.9L589.4 586.2L589.5 592.2L589.7 592.1L589.8 595.7L589.9 585.2L590.0 587.9L590.2 581.1L590.3 587.1L590.4 592.4L590.5 590.5L590.7 584.5L590.8 594.1L590.9 595.0L591.0 598.4L591.2 587.3L591.3 594.8L591.4 584.4L591.5 582.9L591.7 573.9L591.8 595.1L591.9 593.5L592.0 591.5L592.2 594.4L592.3 598.6L592.4 589.6L592.5 583.2L592.7 583.9L592.8 573.3L592.9 605.7L593.0 594.2L593.2 599.8L593.3 577.7L593.4 590.9L593.5 586.4L593.7 587.6L593.8 590.6L593.9 595.7L594.0 594.2L594.2 578.7L594.3 587.2L594.4 599.4L594.5 581.4L594.7 597.1L594.8 580.5L594.9 593.7L595.0 591.6L595.2 591.9L595.3 594.6L595.4 605.0L595.5 576.7L595.7 600.4L595.8 579.0L595.9 598.9L596.0 592.6L596.2 600.0L596.3 592.3L596.4 596.0L596.5 607.6L596.7 604.6L596.8 585.1L596.9 602.3L597.0 590.5L597.2 598.6L597.3 604.2L597.4 598.9L597.5 590.3L597.7 609.5L597.8 592.7L597.9 613.8L598.0 601.8L598.2 585.8L598.3 607.1L598.4 582.3L598.5 614.1L598.7 598.2L598.8 598.8L598.9 610.7L599.0 603.0L599.2 592.4L599.3 594.8L599.4 605.5L599.5 589.6L599.7 591.5L599.8 587.6L599.9 602.7L600.0 597.2L600.2 593.5L600.3 593.7L600.4 591.9L600.5 585.6L600.7 591.8L600.8 588.6L600.9 584.0L601.0 591.8L601.2 593.3L601.3 591.1L601.4 586.8L601.5 585.4L601.7 587.9L601.8 577.8L601.9 591.1L602.0 577.3L602.2 604.7L602.3 592.8L602.4 584.3L602.5 599.6L602.7 595.1L602.8 583.6L602.9 592.4L603.0 592.5L603.2 598.5L603.3 586.8L603.4 580.0L603.5 580.4L603.7 586.5L603.8 584.6L603.9 585.1L604.0 591.8L604.2 591.4L604.3 588.8L604.4 587.9L604.5 579.5L604.7 600.4L604.8 576.3L604.9 582.7L605.0 574.9L605.2 590.8L605.3 573.2L605.4 581.1L605.5 589.4L605.7 584.7L605.8 582.0L605.9 578.1L606.0 577.7L606.2 586.4L606.3 580.7L606.4 587.8L606.5 581.3L606.7 582.5L606.8 585.5L606.9 586.2L607.0 586.6L607.2 581.5L607.3 575.1L607.4 589.6L607.5 592.4L607.7 584.4L607.8 599.0L607.9 586.5L608.0 578.3L608.2 593.6L608.3 568.1L608.4 599.7L608.5 592.0L608.7 593.6L608.8 583.0L608.9 577.8L609.0 587.0L609.2 577.9L609.3 581.5L609.4 587.8L609.5 585.5L609.7 570.5L609.8 580.0L609.9 568.9L610.0 583.7L610.2 578.3L610.3 581.4L610.4 583.1L610.5 583.9L610.7 578.0L610.8 576.4L610.9 575.1L611.0 586.6L611.2 571.2L611.3 589.7L611.4 588.8L611.5 585.3L611.7 593.6L611.8 582.0L611.9 577.4L612.0 595.0L612.2 579.7L612.3 580.9L612.4 586.1L612.5 584.2L612.7 575.0L612.8 586.3L612.9 591.3L613.0 582.2L613.2 575.6L613.3 582.0L613.4 586.2L613.5 579.0L613.7 575.6L613.8 579.6L613.9 578.2L614.0 582.4L614.2 589.5L614.3 583.6L614.4 578.5L614.5 570.3L614.7 593.4L614.8 577.4L614.9 586.4L615.0 580.3L615.2 579.9L615.3 568.8L615.4 586.5L615.5 581.8L615.7 577.2L615.8 591.8L615.9 577.5L616.0 583.1L616.2 575.2L616.3 580.8L616.4 590.9L616.5 589.1L616.7 579.0L616.8 578.7L616.9 582.1L617.0 589.8L617.2 587.5L617.3 570.7L617.4 571.9L617.5 573.6L617.7 574.6L617.8 574.5L617.9 578.3L618.0 573.4L618.2 584.1L618.3 583.9L618.4 581.2L618.5 591.6L618.7 573.1L618.8 574.0L618.9 578.2L619.0 578.7L619.2 571.0L619.3 575.9L619.4 580.5L619.5 588.5L619.7 582.0L619.8 564.9L619.9 574.2L620.0 581.2L620.2 581.9L620.3 569.7L620.4 575.3L620.5 573.5L620.7 584.7L620.8 564.9L620.9 589.2L621.0 578.9L621.2 572.4L621.3 569.8L621.4 575.6L621.5 578.7L621.7 571.1L621.8 571.3L621.9 573.5L622.0 575.8L622.2 573.4L622.3 570.4L622.4 565.6L622.5 581.8L622.7 578.9L622.8 570.7L622.9 575.0L623.0 574.7L623.2 577.2L623.3 573.9L623.4 571.7L623.5 568.4L623.7 568.1L623.8 573.1L623.9 573.7L624.0 571.9L624.2 573.5L624.3 575.6L624.4 571.5L624.5 576.8L624.7 581.0L624.8 574.9L624.9 578.1L625.0 575.0L625.2 566.3L625.3 575.6L625.4 568.7L625.5 577.9L625.7 575.4L625.8 572.1L625.9 576.3L626.0 573.5L626.2 567.4L626.3 576.9L626.4 564.2L626.5 569.6L626.7 562.0L626.8 563.8L626.9 564.5L627.0 559.8L627.2 579.7L627.3 571.3L627.4 567.0L627.5 567.0L627.7 568.2L627.8 568.2L627.9 562.5L628.0 560.0L628.2 570.9L628.3 570.1L628.4 571.2L628.5 568.9L628.7 565.4L628.8 568.7L628.9 572.9L629.0 567.3L629.2 559.9L629.3 562.6L629.4 565.1L629.5 560.3L629.7 562.5L629.8 549.2L629.9 560.4L630.0 563.8L630.2 566.2L630.3 554.5L630.4 557.7L630.5 556.6L630.7 557.3L630.8 559.1L630.9 563.4L631.0 549.1L631.2 545.3L631.3 569.7L631.4 551.7L631.5 563.4L631.7 549.2L631.8 559.7L631.9 552.2L632.0 555.2L632.2 549.0L632.3 561.1L632.4 555.8L632.5 560.5L632.7 558.3L632.8 550.1L632.9 558.2L633.0 561.2L633.2 557.4L633.3 555.2L633.4 551.0L633.5 549.4L633.7 546.8L633.8 544.3L633.9 559.9L634.0 549.4L634.2 566.4L634.3 550.8L634.4 549.0L634.5 559.3L634.7 553.0L634.8 553.5L634.9 541.1L635.0 542.3L635.2 565.3L635.3 536.9L635.4 569.7L635.5 555.8L635.7 549.8L635.8 542.7L635.9 563.8L636.0 546.6L636.2 550.3L636.3 540.5L636.4 549.6L636.5 554.5L636.7 543.5L636.8 552.6L636.9 537.8L637.0 548.9L637.2 543.5L637.3 545.6L637.4 544.7L637.5 545.9L637.7 541.1L637.8 541.6L637.9 538.4L638.0 540.9L638.2 540.7L638.3 540.4L638.4 528.3L638.5 552.7L638.7 539.2L638.8 540.9L638.9 542.7L639.0 540.6L639.2 528.5L639.3 545.7L639.4 549.4L639.5 531.2L639.7 529.4L639.8 536.7L639.9 527.3L640.0 514.1L640.2 550.7L640.3 533.5L640.4 524.3L640.5 544.5L640.7 550.3L640.8 554.8L640.9 540.6L641.0 556.0L641.2 549.0L641.3 554.8L641.4 544.7L641.5 550.6L641.7 544.3L641.8 545.6L641.9 551.4L642.0 543.3L642.2 571.7L642.3 551.9L642.4 563.8L642.5 576.1L642.7 557.1L642.8 552.0L642.9 566.0L643.0 551.3L643.2 561.7L643.3 549.6L643.4 569.8L643.5 571.2L643.7 556.8L643.8 560.2L643.9 567.8L644.0 554.8L644.2 577.8L644.3 579.8L644.4 576.4L644.5 544.3L644.7 587.2L644.8 565.7L644.9 568.2L645.0 554.5L645.2 571.3L645.3 550.5L645.4 570.5L645.5 554.3L645.7 581.1L645.8 575.2L645.9 578.2L646.0 577.8L646.2 570.2L646.3 566.4L646.4 587.6L646.5 560.1L646.7 575.8L646.8 575.7L646.9 567.6L647.0 559.4L647.2 548.7L647.3 563.3L647.4 554.3L647.5 567.5L647.7 576.8L647.8 561.3L647.9 561.2L648.0 570.2L648.2 569.8L648.3 575.3L648.4 570.0L648.5 547.4L648.7 580.9L648.8 547.3L648.9 591.3L649.0 581.7L649.2 548.7L649.3 586.8L649.4 567.5L649.5 573.9L649.7 573.3L649.8 577.4L649.9 572.5L650.0 563.5L650.2 579.9L650.3 563.6L650.4 569.8L650.5 586.9L650.7 557.7L650.8 577.3L650.9 573.2L651.0 571.0L651.2 563.4L651.3 554.7L651.4 557.5L651.5 576.8L651.7 571.3L651.8 572.5L651.9 571.0L652.0 559.2L652.2 564.0L652.3 556.4L652.4 564.2L652.5 565.5L652.7 570.3L652.8 570.7L652.9 570.7L653.0 553.3L653.2 583.7L653.3 564.5L653.4 565.4L653.5 579.9L653.7 569.5L653.8 566.3L653.9 581.3L654.0 570.7L654.2 574.2L654.3 567.3L654.4 556.8L654.5 578.8L654.7 562.8L654.8 574.3L654.9 581.1L655.0 555.8L655.2 567.5L655.3 583.1L655.4 560.6L655.5 565.7L655.7 577.6L655.8 579.7L655.9 574.5L656.0 566.8L656.2 572.8L656.3 557.6L656.4 567.4L656.5 553.3L656.7 588.2L656.8 566.2L656.9 569.3L657.0 561.7L657.2 561.7L657.3 565.7L657.4 561.7L657.5 541.9L657.7 555.9L657.8 567.4L657.9 538.3L658.0 561.9L658.2 547.4L658.3 558.4L658.4 557.0L658.5 543.3L658.7 557.0L658.8 543.3L658.9 547.5L659.0 562.7L659.2 527.3L659.3 575.7L659.4 548.8L659.5 564.2L659.7 572.9L659.8 554.0L659.9 562.1L660.0 549.4L660.2 544.7L660.3 524.7L660.4 543.7L660.5 549.4L660.7 545.1L660.8 547.6L660.9 539.7L661.0 550.5L661.2 528.7L661.3 552.0L661.4 551.1L661.5 537.6L661.7 540.9L661.8 548.2L661.9 536.9L662.0 544.0L662.2 542.6L662.3 524.3L662.4 570.7L662.5 544.7L662.7 552.1L662.8 525.3L662.9 537.9L663.0 536.4L663.2 527.2L663.3 527.1L663.4 542.6L663.5 533.6L663.7 536.8L663.8 533.2L663.9 540.0L664.0 537.4L664.2 537.5L664.3 546.0L664.4 538.7L664.5 522.6L664.7 541.0L664.8 518.0L664.9 541.7L665.0 534.0L665.2 529.6L665.3 535.9L665.4 511.0L665.5 553.7L665.7 524.9L665.8 520.1L665.9 517.5L666.0 520.3L666.2 523.3L666.3 533.7L666.4 520.8L666.5 548.2L666.7 520.7L666.8 544.2L666.9 519.4L667.0 528.8L667.2 539.9L667.3 528.7L667.4 521.0L667.5 527.7L667.7 506.9L667.8 517.7L667.9 514.5L668.0 523.7L668.2 520.1L668.3 519.0L668.4 521.9L668.5 501.3L668.7 542.7L668.8 514.2L668.9 527.2L669.0 517.1L669.2 519.9L669.3 517.0L669.4 513.6L669.5 508.9L669.7 525.7L669.8 488.3L670.0 505.0L670.3 520.0" fill="none" stroke="#000" stroke-width="1.05" stroke-linejoin="bevel" shape-rendering="auto"/>
<defs><filter id="bl" x="-30%" y="-30%" width="160%" height="160%"><feGaussianBlur stdDeviation="1.3"/></filter></defs><g shape-rendering="auto"><path d="M797.9 441.2L822.6 456.1L815.4 460.6L825 478.4L817.4 484L807.4 466.9L799.6 470.6Z" transform="translate(1.2,1.8)" fill="#000" stroke="#000" stroke-width="3.4" stroke-linejoin="round" opacity="0.28" filter="url(#bl)"/><path d="M798.0 441.3L822.4 456.0L815.2 460.5L824.8 478.3L817.5 483.7L807.5 466.7L799.7 470.5Z" fill="#ffffff" stroke="#161616" stroke-width="3.3" stroke-linejoin="round"/></g>
</svg>
</body></html>
